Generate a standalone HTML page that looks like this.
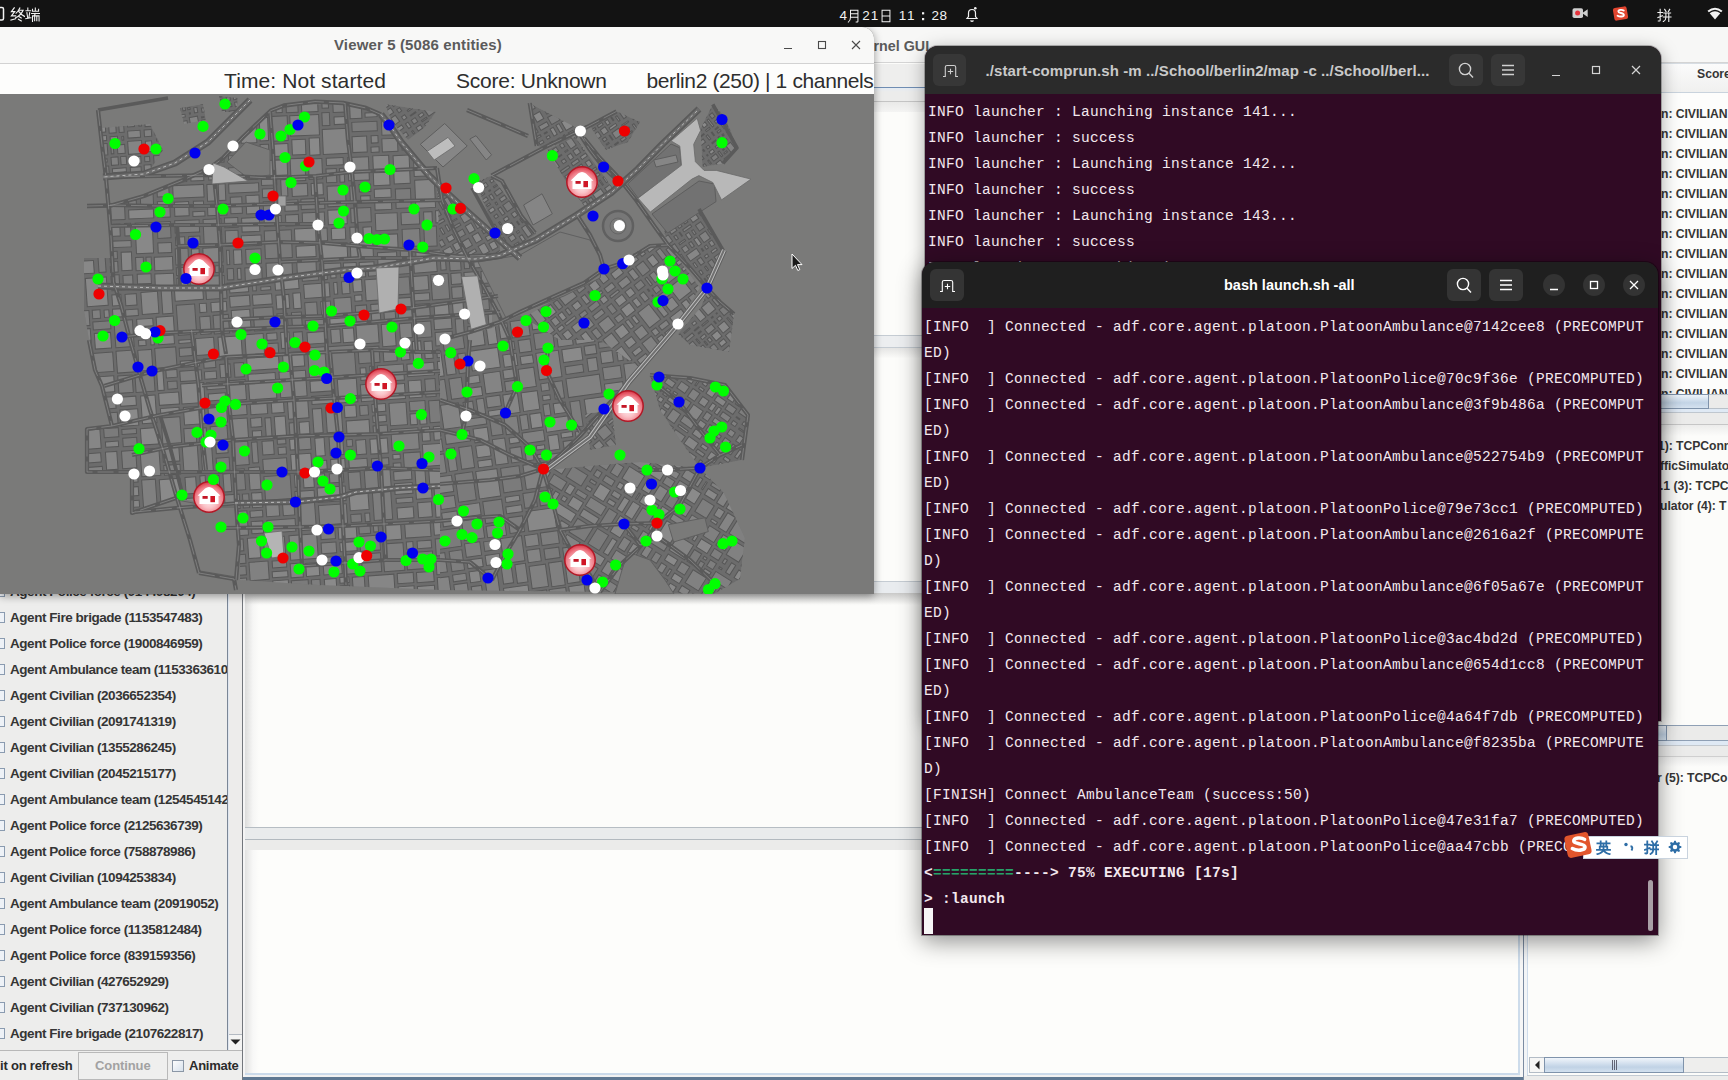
<!DOCTYPE html>
<html><head><meta charset="utf-8"><title>screen</title>
<style>
*{box-sizing:border-box;margin:0;padding:0}
html,body{width:1728px;height:1080px;overflow:hidden;background:#fbfbfa;font-family:"Liberation Sans", sans-serif;}
.abs{position:absolute}
.t{position:absolute;white-space:pre;line-height:1}
#topbar{left:0;top:0;width:1728px;height:27px;background:#131313}
/* kernel gui (background window) */
#kgui{left:0;top:27px;width:1728px;height:1053px;background:#fcfcfa}
/* viewer */
#viewer{left:0;top:27px;width:874px;height:567px;background:#7a7a79;box-shadow:0 2px 9px rgba(0,0,0,.4);border-radius:0 12px 0 0;overflow:hidden}
#vtitle{left:0;top:0;width:874px;height:37px;background:#f8f8f7;border-bottom:1px solid #d2d2d2}
#vstatus{left:0;top:37px;width:874px;height:30px;background:#fdfdfc}
#map{left:0;top:67px;width:874px;height:500px;overflow:hidden;background:#7a7a79}
.term{background:#300a24;overflow:hidden}
.mono{font-family:"Liberation Mono", monospace;font-size:14.5px;letter-spacing:0.3px;color:#f3e8ee;white-space:pre;position:absolute;line-height:26px;height:26px}
.lrow{position:absolute;left:10px;font-weight:700;font-size:13.5px;letter-spacing:-0.45px;color:#353535;white-space:pre;line-height:16px}
.cb{position:absolute;left:-1px;width:6px;height:11px;border:1px solid #8a9bb0;border-left:none;background:#eef2f7}
.rrow{position:absolute;font-weight:700;font-size:12.2px;letter-spacing:-0.05px;color:#353535;white-space:pre;line-height:16px}
</style></head>
<body>
<div id="kgui" class="abs"><div class="abs" style="left:0px;top:0px;width:1728px;height:36px;background:#f7f7f6;border-bottom:1px solid #d4d4d4"></div><div class="t" style="left:873.5px;top:11.5px;font-size:14.3px;font-weight:700;color:#5b5b5b;letter-spacing:0px;">rnel GUI</div><div class="abs" style="left:1661px;top:36px;width:67px;height:30px;background:linear-gradient(#fbfbfb,#f0f0ef);border-top:1px solid #d7dde3;border-bottom:1px solid #c9d3dd"></div><div class="t" style="left:1697px;top:40.7px;font-size:12.2px;font-weight:700;color:#353535;letter-spacing:0px;">Score</div><div class="abs" style="left:874px;top:37px;width:52px;height:23px;background:#eeeeed"></div><div class="abs" style="left:874px;top:60px;width:52px;height:1px;background:#6f8db3"></div><div class="abs" style="left:874px;top:61px;width:52px;height:13px;background:linear-gradient(#e4ebf3,#ececeb 4px)"></div><div class="abs" style="left:874px;top:74px;width:52px;height:1px;background:#c4c4c4"></div><div class="abs" style="left:874px;top:75px;width:52px;height:10px;background:linear-gradient(#e9e9e8,#f4f4f3)"></div><div class="abs" style="left:874px;top:85px;width:52px;height:490px;background:#fcfcfa"></div><div class="abs" style="left:874px;top:308px;width:52px;height:1px;background:#c5ccd3"></div><div class="abs" style="left:874px;top:309px;width:52px;height:11px;background:#eceef0"></div><div class="abs" style="left:874px;top:320px;width:52px;height:1px;background:#c5ccd3"></div><div class="abs" style="left:874px;top:321px;width:52px;height:10px;background:linear-gradient(#e5e5e4,#fbfbf9)"></div><div class="abs" style="left:874px;top:554px;width:52px;height:1px;background:#c5ccd3"></div><div class="abs" style="left:874px;top:555px;width:52px;height:11px;background:#e9ecef"></div><div class="abs" style="left:0px;top:566px;width:227px;height:457px;background:#ededec"></div><div class="abs" style="left:227px;top:566px;width:1px;height:457px;background:#7a8696"></div><div class="abs" style="left:228px;top:566px;width:1px;height:457px;background:#dfe6f0"></div><div class="abs" style="left:229px;top:566px;width:13px;height:441px;background:#edeceb"></div><div class="abs" style="left:229px;top:1007px;width:13px;height:16px;background:#f4f4f3;border-top:1px solid #b4bac2"></div><svg class="abs" style="left:229px;top:1007px" width="13" height="16"><path d="M1.5 5.5 h10 l-5 5z" fill="#222"/></svg><div class="abs" style="left:242px;top:566px;width:1px;height:487px;background:#72767c"></div><div class="abs" style="left:243px;top:566px;width:2px;height:487px;background:#f4f4f4"></div><div class="abs" style="left:0;top:566px;width:227px;height:457px;overflow:hidden"><div class="lrow" style="top:-8.7px">Agent Police force (914498204)</div><div class="cb" style="top:-7px"></div><div class="lrow" style="top:17.3px">Agent Fire brigade (1153547483)</div><div class="cb" style="top:19px"></div><div class="lrow" style="top:43.3px">Agent Police force (1900846959)</div><div class="cb" style="top:45px"></div><div class="lrow" style="top:69.3px">Agent Ambulance team (1153363610)</div><div class="cb" style="top:71px"></div><div class="lrow" style="top:95.3px">Agent Civilian (2036652354)</div><div class="cb" style="top:97px"></div><div class="lrow" style="top:121.3px">Agent Civilian (2091741319)</div><div class="cb" style="top:123px"></div><div class="lrow" style="top:147.3px">Agent Civilian (1355286245)</div><div class="cb" style="top:149px"></div><div class="lrow" style="top:173.3px">Agent Civilian (2045215177)</div><div class="cb" style="top:175px"></div><div class="lrow" style="top:199.3px">Agent Ambulance team (1254545142)</div><div class="cb" style="top:201px"></div><div class="lrow" style="top:225.3px">Agent Police force (2125636739)</div><div class="cb" style="top:227px"></div><div class="lrow" style="top:251.3px">Agent Police force (758878986)</div><div class="cb" style="top:253px"></div><div class="lrow" style="top:277.3px">Agent Civilian (1094253834)</div><div class="cb" style="top:279px"></div><div class="lrow" style="top:303.3px">Agent Ambulance team (20919052)</div><div class="cb" style="top:305px"></div><div class="lrow" style="top:329.3px">Agent Police force (1135812484)</div><div class="cb" style="top:331px"></div><div class="lrow" style="top:355.3px">Agent Police force (839159356)</div><div class="cb" style="top:357px"></div><div class="lrow" style="top:381.3px">Agent Civilian (427652929)</div><div class="cb" style="top:383px"></div><div class="lrow" style="top:407.3px">Agent Civilian (737130962)</div><div class="cb" style="top:409px"></div><div class="lrow" style="top:433.3px">Agent Fire brigade (2107622817)</div><div class="cb" style="top:435px"></div></div><div class="abs" style="left:0px;top:1023px;width:242px;height:30px;background:#eeeeed;border-top:1px solid #b8b8b8"></div><div class="t" style="left:0px;top:1031.5px;font-size:13px;font-weight:700;color:#2b2b2b;letter-spacing:-0.2px;">it on refresh</div><div class="abs" style="left:78px;top:1025px;width:90px;height:28px;background:#efefee;border:1px solid #b9b9b9"></div><div class="t" style="left:95px;top:1031.5px;font-size:13px;font-weight:700;color:#a2a2a2;letter-spacing:-0.1px;">Continue</div><div class="abs" style="left:172px;top:1033px;width:12px;height:12px;background:linear-gradient(135deg,#fdfdfd,#d7e1ec);border:1px solid #8b97a6"></div><div class="t" style="left:189px;top:1031.5px;font-size:13px;font-weight:700;color:#2b2b2b;letter-spacing:-0.25px;">Animate</div><div class="abs" style="left:245px;top:566px;width:1273px;height:234px;background:linear-gradient(90deg,#dcdcdb 0,#f6f6f5 8px,#fcfcfa 14px)"></div><div class="abs" style="left:245px;top:566px;width:1273px;height:12px;background:linear-gradient(#c9c9c8,rgba(240,240,240,0))"></div><div class="abs" style="left:245px;top:800px;width:1273px;height:1px;background:#b6bdc3"></div><div class="abs" style="left:245px;top:801px;width:1273px;height:11px;background:#e9ebec"></div><div class="abs" style="left:245px;top:812px;width:1273px;height:1px;background:#b2b9bf"></div><div class="abs" style="left:245px;top:813px;width:1273px;height:10px;background:#ebebea"></div><div class="abs" style="left:245px;top:823px;width:1273px;height:223px;background:linear-gradient(90deg,#e2e2e1 0,#f8f8f7 8px,#fdfdfb 14px)"></div><div class="abs" style="left:245px;top:1046px;width:1275px;height:2px;background:#cbdaea"></div><div class="abs" style="left:245px;top:1048px;width:1279px;height:2px;background:#f1f1f1"></div><div class="abs" style="left:243px;top:1050px;width:1281px;height:3px;background:#5f7892"></div><div class="abs" style="left:1518px;top:566px;width:2px;height:482px;background:#cddceb"></div><div class="abs" style="left:1520px;top:566px;width:3px;height:484px;background:#f6f6f6"></div><div class="abs" style="left:1523px;top:566px;width:1px;height:487px;background:#7b8ba1"></div><div class="abs" style="left:1524px;top:566px;width:3px;height:487px;background:#f2f4f6"></div><div class="abs" style="left:1527px;top:566px;width:1px;height:482px;background:#cfdceb"></div><div class="abs" style="left:1661px;top:66px;width:67px;height:301px;overflow:hidden;background:#fdfdfc"><div class="rrow" style="left:0px;top:13.4px">n: CIVILIAN</div><div class="rrow" style="left:0px;top:33.4px">n: CIVILIAN</div><div class="rrow" style="left:0px;top:53.4px">n: CIVILIAN</div><div class="rrow" style="left:0px;top:73.4px">n: CIVILIAN</div><div class="rrow" style="left:0px;top:93.4px">n: CIVILIAN</div><div class="rrow" style="left:0px;top:113.4px">n: CIVILIAN</div><div class="rrow" style="left:0px;top:133.4px">n: CIVILIAN</div><div class="rrow" style="left:0px;top:153.4px">n: CIVILIAN</div><div class="rrow" style="left:0px;top:173.4px">n: CIVILIAN</div><div class="rrow" style="left:0px;top:193.4px">n: CIVILIAN</div><div class="rrow" style="left:0px;top:213.4px">n: CIVILIAN</div><div class="rrow" style="left:0px;top:233.4px">n: CIVILIAN</div><div class="rrow" style="left:0px;top:253.4px">n: CIVILIAN</div><div class="rrow" style="left:0px;top:273.4px">n: CIVILIAN</div><div class="rrow" style="left:0px;top:293.4px">n: CIVILIAN</div></div><div class="abs" style="left:1661px;top:367px;width:67px;height:15px;background:#ebebea;border-top:1px solid #b9c1c9;border-bottom:1px solid #b9c1c9"></div><div class="abs" style="left:1661px;top:367px;width:48px;height:15px;background:linear-gradient(#eef4fa,#c3d4e6 60%,#d5e2ef);border:1px solid #7f93ab;border-left:none"></div><div class="abs" style="left:1661px;top:382px;width:67px;height:3px;background:#dfe9f4"></div><div class="abs" style="left:1661px;top:385px;width:67px;height:1px;background:#bfc7cf"></div><div class="abs" style="left:1661px;top:386px;width:67px;height:11px;background:#ebebea"></div><div class="abs" style="left:1661px;top:397px;width:67px;height:1px;background:#c6c6c6"></div><div class="abs" style="left:1661px;top:398px;width:67px;height:11px;background:linear-gradient(#ececeb,#fcfcfa)"></div><div class="rrow" style="left:1658px;top:411.2px">1): TCPConn</div><div class="rrow" style="left:1660px;top:431.2px">fficSimulato</div><div class="rrow" style="left:1660px;top:451.2px">.1 (3): TCPC</div><div class="rrow" style="left:1660px;top:471.2px">ulator (4): T</div><div class="abs" style="left:1657px;top:698px;width:71px;height:16px;background:#ebebea;border-top:1px solid #8fa0b5;border-bottom:1px solid #8fa0b5"></div><div class="abs" style="left:1657px;top:698px;width:10px;height:16px;background:linear-gradient(#eef4fa,#c3d4e6 60%,#d5e2ef);border:1px solid #7f93ab;border-left:none"></div><div class="abs" style="left:1657px;top:714px;width:71px;height:4px;background:#dfe9f4"></div><div class="abs" style="left:1657px;top:718px;width:71px;height:1px;background:#c3c9cf"></div><div class="abs" style="left:1657px;top:719px;width:71px;height:10px;background:#ebebea"></div><div class="abs" style="left:1657px;top:729px;width:71px;height:1px;background:#cfcfcf"></div><div class="abs" style="left:1657px;top:730px;width:71px;height:10px;background:linear-gradient(#ececeb,#fcfcfa)"></div><div class="rrow" style="left:1657px;top:743.2px">r (5): TCPCo</div><div class="abs" style="left:1529px;top:1030px;width:199px;height:16px;background:#eeeeed;border:1px solid #b3bcc6;border-right:none"></div><div class="abs" style="left:1530px;top:1031px;width:14px;height:14px;background:#f6f6f5"></div><svg class="abs" style="left:1530px;top:1031px" width="14" height="14"><path d="M9.5 2.5 v9 l-4.5 -4.5z" fill="#222"/></svg><div class="abs" style="left:1544px;top:1030px;width:140px;height:16px;background:linear-gradient(#f0f5fb,#c0d2e5 65%,#d3e1ef);border:1px solid #7f93ab"></div><svg class="abs" style="left:1608px;top:1033px" width="12" height="10"><path d="M4.5 0v10M6.5 0v10M8.5 0v10" stroke="#445" stroke-width="0.8"/></svg><div class="abs" style="left:1527px;top:1048px;width:201px;height:1px;background:#c3cbd3"></div><div class="abs" style="left:1524px;top:1049px;width:204px;height:4px;background:#ececeb"></div></div><div id="viewer" class="abs"><div id="vtitle" class="abs"><div class="t" style="left:334px;top:9.8px;font-size:15px;font-weight:700;color:#5b5b5b;letter-spacing:0.13px;">Viewer 5 (5086 entities)</div><svg class="abs" style="left:770px;top:0" width="104" height="36" fill="none" stroke="#4a4a4a" stroke-width="1.1">
<path d="M14 21.5h8"/>
<rect x="48.5" y="14.5" width="7" height="7"/>
<path d="M82 14l8 8M90 14l-8 8"/></svg></div><div id="vstatus" class="abs"><div class="t" style="left:224px;top:5.6px;font-size:21px;font-weight:400;color:#2e2e2e;letter-spacing:0.1px;">Time: Not started</div><div class="t" style="left:456px;top:5.6px;font-size:21px;font-weight:400;color:#2e2e2e;letter-spacing:-0.24px;">Score: Unknown</div><div class="t" style="left:646.5px;top:5.6px;font-size:21px;font-weight:400;color:#2e2e2e;letter-spacing:-0.37px;">berlin2 (250) | 1 channels</div></div><div id="map" class="abs"><svg class="abs" style="left:0;top:0" width="874" height="500" viewBox="0 94 874 500"><defs><radialGradient id="hg" cx=".5" cy=".62" r=".6"><stop offset="0" stop-color="#ffeef0"/><stop offset=".4" stop-color="#fac2c7"/><stop offset=".75" stop-color="#f0808b"/><stop offset="1" stop-color="#dc3c4c"/></radialGradient><pattern id="bt" width="46" height="40" patternUnits="userSpaceOnUse" patternTransform="rotate(-3)"><rect width="46" height="40" fill="#747474"/><rect x="2" y="2" width="18" height="10" fill="#8b8b8b" stroke="#5d5d5d" stroke-width="1"/><rect x="23" y="3" width="9" height="15" fill="#868686" stroke="#5d5d5d" stroke-width="1"/><rect x="34" y="2" width="10" height="8" fill="#8e8e8e" stroke="#5d5d5d" stroke-width="1"/><rect x="3" y="15" width="8" height="9" fill="#828282" stroke="#5d5d5d" stroke-width="1"/><rect x="13" y="15" width="8" height="12" fill="#8a8a8a" stroke="#5d5d5d" stroke-width="1"/><rect x="34" y="12" width="10" height="10" fill="#858585" stroke="#5d5d5d" stroke-width="1"/><rect x="2" y="27" width="14" height="11" fill="#8c8c8c" stroke="#5d5d5d" stroke-width="1"/><rect x="18" y="30" width="12" height="8" fill="#848484" stroke="#5d5d5d" stroke-width="1"/><rect x="24" y="20" width="8" height="8" fill="#8d8d8d" stroke="#5d5d5d" stroke-width="1"/><rect x="33" y="25" width="11" height="13" fill="#898989" stroke="#5d5d5d" stroke-width="1"/></pattern></defs><rect x="0" y="94" width="874" height="500" fill="#7a7a79"/><clipPath id="z1"><polygon points="108,207 144,197 182,182 210,169 223,159 243,140 264,118 284,106 345,103 381,115 404,147 430,176 470,214 500,240 500,255 434,258 345,270 284,278 220,288 113,284"/></clipPath><g clip-path="url(#z1)"><polygon points="108,207 144,197 182,182 210,169 223,159 243,140 264,118 284,106 345,103 381,115 404,147 430,176 470,214 500,240 500,255 434,258 345,270 284,278 220,288 113,284" fill="#6c6c6c"/><g transform="rotate(-2.5 304.2 195.3)"><rect x="224.4" y="112.6" width="15.9" height="27.5" fill="#7e7e7e" stroke="#575757" stroke-width="1"/><rect x="243.6" y="112.1" width="15.6" height="28.5" fill="#888888" stroke="#575757" stroke-width="1"/><rect x="83.0" y="183.1" width="24.3" height="14.8" fill="#838383" stroke="#575757" stroke-width="1"/><rect x="99.9" y="201.4" width="6.8" height="10.1" fill="#818181" stroke="#575757" stroke-width="1"/><rect x="110.4" y="183.3" width="13.9" height="28.3" fill="#7e7e7e" stroke="#575757" stroke-width="1"/><rect x="128.4" y="193.0" width="7.8" height="4.8" fill="#7b7b7b" stroke="#575757" stroke-width="1"/><rect x="140.4" y="179.2" width="12.9" height="19.2" fill="#7b7b7b" stroke="#575757" stroke-width="1"/><rect x="128.1" y="202.3" width="24.8" height="9.0" fill="#888888" stroke="#575757" stroke-width="1"/><rect x="157.4" y="179.8" width="11.9" height="10.8" fill="#808080" stroke="#575757" stroke-width="1"/><rect x="157.2" y="195.2" width="12.3" height="16.0" fill="#818181" stroke="#575757" stroke-width="1"/><rect x="108.0" y="215.9" width="10.7" height="12.0" fill="#838383" stroke="#575757" stroke-width="1"/><rect x="123.4" y="215.6" width="6.0" height="12.6" fill="#848484" stroke="#575757" stroke-width="1"/><rect x="107.9" y="232.8" width="21.3" height="6.5" fill="#818181" stroke="#575757" stroke-width="1"/><rect x="104.6" y="243.1" width="10.3" height="7.4" fill="#7b7b7b" stroke="#575757" stroke-width="1"/><rect x="104.5" y="253.0" width="10.5" height="10.9" fill="#808080" stroke="#575757" stroke-width="1"/><rect x="118.8" y="244.3" width="10.3" height="18.4" fill="#888888" stroke="#575757" stroke-width="1"/><rect x="104.7" y="266.6" width="11.1" height="20.6" fill="#7e7e7e" stroke="#575757" stroke-width="1"/><rect x="119.6" y="267.5" width="9.7" height="9.2" fill="#808080" stroke="#575757" stroke-width="1"/><rect x="134.1" y="215.9" width="17.1" height="30.4" fill="#888888" stroke="#575757" stroke-width="1"/><rect x="156.1" y="215.7" width="13.2" height="16.3" fill="#7b7b7b" stroke="#575757" stroke-width="1"/><rect x="155.9" y="236.6" width="13.5" height="10.0" fill="#838383" stroke="#575757" stroke-width="1"/><rect x="133.0" y="250.1" width="7.7" height="13.2" fill="#808080" stroke="#575757" stroke-width="1"/><rect x="143.4" y="250.2" width="5.2" height="13.1" fill="#7b7b7b" stroke="#575757" stroke-width="1"/><rect x="133.9" y="266.9" width="13.8" height="9.8" fill="#838383" stroke="#575757" stroke-width="1"/><rect x="151.7" y="250.6" width="18.2" height="13.5" fill="#868686" stroke="#575757" stroke-width="1"/><rect x="151.5" y="267.4" width="18.7" height="19.8" fill="#888888" stroke="#575757" stroke-width="1"/><rect x="173.7" y="169.3" width="13.7" height="7.2" fill="#8a8a8a" stroke="#575757" stroke-width="1"/><rect x="191.7" y="168.3" width="12.9" height="7.8" fill="#8a8a8a" stroke="#575757" stroke-width="1"/><rect x="209.0" y="144.0" width="16.6" height="14.5" fill="#818181" stroke="#575757" stroke-width="1"/><rect x="209.5" y="163.0" width="15.7" height="12.9" fill="#848484" stroke="#575757" stroke-width="1"/><rect x="173.2" y="180.0" width="30.9" height="12.6" fill="#848484" stroke="#575757" stroke-width="1"/><rect x="174.1" y="196.5" width="14.3" height="14.2" fill="#848484" stroke="#575757" stroke-width="1"/><rect x="193.2" y="196.5" width="10.1" height="6.5" fill="#818181" stroke="#575757" stroke-width="1"/><rect x="192.2" y="206.8" width="12.0" height="4.9" fill="#848484" stroke="#575757" stroke-width="1"/><rect x="207.4" y="180.3" width="7.6" height="16.8" fill="#818181" stroke="#575757" stroke-width="1"/><rect x="218.7" y="180.4" width="7.0" height="16.5" fill="#838383" stroke="#575757" stroke-width="1"/><rect x="207.1" y="200.3" width="19.1" height="11.3" fill="#818181" stroke="#575757" stroke-width="1"/><rect x="229.5" y="143.8" width="10.4" height="4.6" fill="#8a8a8a" stroke="#575757" stroke-width="1"/><rect x="230.2" y="152.6" width="9.0" height="7.4" fill="#818181" stroke="#575757" stroke-width="1"/><rect x="244.1" y="144.4" width="14.1" height="15.7" fill="#808080" stroke="#575757" stroke-width="1"/><rect x="229.8" y="164.6" width="13.5" height="12.5" fill="#7e7e7e" stroke="#575757" stroke-width="1"/><rect x="247.4" y="164.6" width="11.2" height="12.6" fill="#818181" stroke="#575757" stroke-width="1"/><rect x="229.2" y="180.8" width="29.9" height="9.1" fill="#818181" stroke="#575757" stroke-width="1"/><rect x="230.2" y="194.0" width="11.5" height="16.6" fill="#7e7e7e" stroke="#575757" stroke-width="1"/><rect x="245.9" y="193.1" width="13.1" height="18.3" fill="#868686" stroke="#575757" stroke-width="1"/><rect x="173.7" y="215.1" width="24.4" height="12.3" fill="#7e7e7e" stroke="#575757" stroke-width="1"/><rect x="173.7" y="231.5" width="9.2" height="8.4" fill="#868686" stroke="#575757" stroke-width="1"/><rect x="186.9" y="231.4" width="11.3" height="8.6" fill="#7e7e7e" stroke="#575757" stroke-width="1"/><rect x="202.1" y="215.1" width="17.9" height="24.8" fill="#7e7e7e" stroke="#575757" stroke-width="1"/><rect x="173.0" y="243.2" width="12.8" height="16.1" fill="#7e7e7e" stroke="#575757" stroke-width="1"/><rect x="189.2" y="244.0" width="7.6" height="14.7" fill="#888888" stroke="#575757" stroke-width="1"/><rect x="173.2" y="262.2" width="12.0" height="7.6" fill="#848484" stroke="#575757" stroke-width="1"/><rect x="188.6" y="262.6" width="8.4" height="6.6" fill="#7b7b7b" stroke="#575757" stroke-width="1"/><rect x="173.3" y="272.9" width="10.5" height="14.2" fill="#888888" stroke="#575757" stroke-width="1"/><rect x="186.9" y="272.7" width="10.5" height="14.5" fill="#8a8a8a" stroke="#575757" stroke-width="1"/><rect x="200.6" y="243.7" width="19.7" height="14.6" fill="#848484" stroke="#575757" stroke-width="1"/><rect x="201.4" y="262.5" width="6.3" height="5.4" fill="#848484" stroke="#575757" stroke-width="1"/><rect x="212.1" y="261.9" width="8.1" height="6.7" fill="#7e7e7e" stroke="#575757" stroke-width="1"/><rect x="200.4" y="272.0" width="20.2" height="15.2" fill="#818181" stroke="#575757" stroke-width="1"/><rect x="223.5" y="214.5" width="13.3" height="9.8" fill="#838383" stroke="#575757" stroke-width="1"/><rect x="223.7" y="227.4" width="12.8" height="15.6" fill="#818181" stroke="#575757" stroke-width="1"/><rect x="240.6" y="215.5" width="17.7" height="13.9" fill="#848484" stroke="#575757" stroke-width="1"/><rect x="239.6" y="233.1" width="19.7" height="10.3" fill="#888888" stroke="#575757" stroke-width="1"/><rect x="224.2" y="246.9" width="2.6" height="14.4" fill="#868686" stroke="#575757" stroke-width="1"/><rect x="231.1" y="246.9" width="8.0" height="14.4" fill="#868686" stroke="#575757" stroke-width="1"/><rect x="243.3" y="246.8" width="15.3" height="14.5" fill="#7e7e7e" stroke="#575757" stroke-width="1"/><rect x="224.0" y="265.4" width="6.2" height="11.2" fill="#7b7b7b" stroke="#575757" stroke-width="1"/><rect x="234.2" y="265.5" width="3.4" height="10.9" fill="#868686" stroke="#575757" stroke-width="1"/><rect x="223.4" y="279.8" width="14.9" height="7.5" fill="#8a8a8a" stroke="#575757" stroke-width="1"/><rect x="241.7" y="265.4" width="16.9" height="21.2" fill="#7b7b7b" stroke="#575757" stroke-width="1"/><rect x="263.2" y="96.4" width="11.7" height="14.9" fill="#868686" stroke="#575757" stroke-width="1"/><rect x="279.8" y="96.2" width="6.1" height="15.4" fill="#838383" stroke="#575757" stroke-width="1"/><rect x="290.0" y="94.6" width="11.8" height="17.4" fill="#7b7b7b" stroke="#575757" stroke-width="1"/><rect x="305.4" y="94.5" width="16.3" height="17.7" fill="#848484" stroke="#575757" stroke-width="1"/><rect x="262.6" y="115.9" width="8.4" height="23.2" fill="#8a8a8a" stroke="#575757" stroke-width="1"/><rect x="274.2" y="115.1" width="16.4" height="24.8" fill="#7b7b7b" stroke="#575757" stroke-width="1"/><rect x="262.3" y="142.7" width="8.5" height="12.7" fill="#7e7e7e" stroke="#575757" stroke-width="1"/><rect x="274.2" y="142.9" width="15.9" height="12.3" fill="#8a8a8a" stroke="#575757" stroke-width="1"/><rect x="293.2" y="115.2" width="28.9" height="20.4" fill="#848484" stroke="#575757" stroke-width="1"/><rect x="294.2" y="139.3" width="13.5" height="15.3" fill="#888888" stroke="#575757" stroke-width="1"/><rect x="311.6" y="138.4" width="10.3" height="17.1" fill="#8a8a8a" stroke="#575757" stroke-width="1"/><rect x="325.9" y="103.5" width="6.4" height="5.6" fill="#808080" stroke="#575757" stroke-width="1"/><rect x="325.4" y="113.6" width="7.5" height="13.0" fill="#7b7b7b" stroke="#575757" stroke-width="1"/><rect x="336.8" y="102.9" width="13.6" height="11.0" fill="#7e7e7e" stroke="#575757" stroke-width="1"/><rect x="337.4" y="118.4" width="12.3" height="7.6" fill="#8a8a8a" stroke="#575757" stroke-width="1"/><rect x="325.1" y="130.3" width="25.5" height="25.0" fill="#848484" stroke="#575757" stroke-width="1"/><rect x="353.5" y="102.2" width="11.7" height="18.6" fill="#838383" stroke="#575757" stroke-width="1"/><rect x="367.8" y="102.3" width="13.5" height="9.9" fill="#848484" stroke="#575757" stroke-width="1"/><rect x="368.5" y="115.7" width="12.0" height="4.2" fill="#868686" stroke="#575757" stroke-width="1"/><rect x="354.9" y="124.5" width="25.2" height="9.4" fill="#7b7b7b" stroke="#575757" stroke-width="1"/><rect x="354.6" y="138.8" width="14.5" height="16.0" fill="#848484" stroke="#575757" stroke-width="1"/><rect x="373.6" y="138.7" width="6.8" height="7.4" fill="#838383" stroke="#575757" stroke-width="1"/><rect x="373.0" y="150.1" width="8.0" height="5.3" fill="#838383" stroke="#575757" stroke-width="1"/><rect x="384.5" y="117.5" width="22.2" height="21.3" fill="#838383" stroke="#575757" stroke-width="1"/><rect x="384.2" y="142.3" width="15.6" height="13.1" fill="#848484" stroke="#575757" stroke-width="1"/><rect x="404.0" y="143.3" width="16.8" height="11.1" fill="#8a8a8a" stroke="#575757" stroke-width="1"/><rect x="262.6" y="158.9" width="26.0" height="15.3" fill="#888888" stroke="#575757" stroke-width="1"/><rect x="262.1" y="177.6" width="15.2" height="6.1" fill="#808080" stroke="#575757" stroke-width="1"/><rect x="262.6" y="187.2" width="14.2" height="8.6" fill="#838383" stroke="#575757" stroke-width="1"/><rect x="281.4" y="178.8" width="6.5" height="16.4" fill="#818181" stroke="#575757" stroke-width="1"/><rect x="291.7" y="158.2" width="14.7" height="22.3" fill="#818181" stroke="#575757" stroke-width="1"/><rect x="309.8" y="159.2" width="13.6" height="20.4" fill="#818181" stroke="#575757" stroke-width="1"/><rect x="292.3" y="183.5" width="15.5" height="12.5" fill="#838383" stroke="#575757" stroke-width="1"/><rect x="311.6" y="183.9" width="11.8" height="11.7" fill="#888888" stroke="#575757" stroke-width="1"/><rect x="262.9" y="200.0" width="17.4" height="9.7" fill="#7e7e7e" stroke="#575757" stroke-width="1"/><rect x="263.1" y="214.4" width="17.1" height="10.3" fill="#868686" stroke="#575757" stroke-width="1"/><rect x="284.4" y="199.5" width="13.2" height="10.9" fill="#838383" stroke="#575757" stroke-width="1"/><rect x="284.6" y="214.1" width="12.9" height="11.2" fill="#808080" stroke="#575757" stroke-width="1"/><rect x="300.7" y="199.0" width="23.6" height="10.5" fill="#7b7b7b" stroke="#575757" stroke-width="1"/><rect x="301.4" y="212.9" width="22.1" height="12.2" fill="#818181" stroke="#575757" stroke-width="1"/><rect x="327.8" y="159.2" width="16.9" height="7.2" fill="#848484" stroke="#575757" stroke-width="1"/><rect x="327.1" y="170.0" width="10.3" height="13.8" fill="#7e7e7e" stroke="#575757" stroke-width="1"/><rect x="340.6" y="170.1" width="4.6" height="13.7" fill="#838383" stroke="#575757" stroke-width="1"/><rect x="349.3" y="159.5" width="20.7" height="23.3" fill="#838383" stroke="#575757" stroke-width="1"/><rect x="327.4" y="187.2" width="18.3" height="20.7" fill="#808080" stroke="#575757" stroke-width="1"/><rect x="327.1" y="211.2" width="18.9" height="14.5" fill="#8a8a8a" stroke="#575757" stroke-width="1"/><rect x="350.1" y="187.9" width="5.3" height="17.5" fill="#808080" stroke="#575757" stroke-width="1"/><rect x="359.5" y="186.9" width="11.5" height="7.6" fill="#808080" stroke="#575757" stroke-width="1"/><rect x="360.5" y="198.5" width="9.5" height="6.9" fill="#868686" stroke="#575757" stroke-width="1"/><rect x="350.0" y="210.3" width="20.1" height="14.4" fill="#7b7b7b" stroke="#575757" stroke-width="1"/><rect x="262.7" y="229.2" width="27.0" height="27.8" fill="#7b7b7b" stroke="#575757" stroke-width="1"/><rect x="293.0" y="228.5" width="21.1" height="14.0" fill="#8a8a8a" stroke="#575757" stroke-width="1"/><rect x="293.8" y="245.8" width="19.7" height="11.2" fill="#8a8a8a" stroke="#575757" stroke-width="1"/><rect x="263.1" y="261.5" width="26.0" height="23.5" fill="#808080" stroke="#575757" stroke-width="1"/><rect x="293.9" y="261.5" width="19.2" height="23.5" fill="#838383" stroke="#575757" stroke-width="1"/><rect x="317.1" y="228.9" width="8.5" height="12.7" fill="#808080" stroke="#575757" stroke-width="1"/><rect x="329.8" y="229.6" width="14.0" height="11.3" fill="#8a8a8a" stroke="#575757" stroke-width="1"/><rect x="316.8" y="244.7" width="28.1" height="17.2" fill="#8a8a8a" stroke="#575757" stroke-width="1"/><rect x="348.4" y="229.3" width="8.6" height="11.3" fill="#838383" stroke="#575757" stroke-width="1"/><rect x="361.5" y="229.7" width="8.5" height="10.5" fill="#888888" stroke="#575757" stroke-width="1"/><rect x="348.1" y="244.5" width="22.6" height="16.8" fill="#848484" stroke="#575757" stroke-width="1"/><rect x="316.7" y="264.5" width="21.0" height="21.7" fill="#818181" stroke="#575757" stroke-width="1"/><rect x="340.3" y="264.7" width="12.9" height="21.3" fill="#868686" stroke="#575757" stroke-width="1"/><rect x="356.2" y="264.8" width="14.7" height="21.0" fill="#868686" stroke="#575757" stroke-width="1"/><rect x="374.4" y="158.9" width="15.9" height="13.5" fill="#888888" stroke="#575757" stroke-width="1"/><rect x="374.2" y="175.9" width="16.2" height="12.8" fill="#8a8a8a" stroke="#575757" stroke-width="1"/><rect x="394.7" y="159.6" width="16.0" height="28.3" fill="#888888" stroke="#575757" stroke-width="1"/><rect x="374.4" y="192.3" width="16.7" height="8.6" fill="#888888" stroke="#575757" stroke-width="1"/><rect x="374.4" y="204.6" width="16.7" height="8.6" fill="#868686" stroke="#575757" stroke-width="1"/><rect x="395.5" y="193.0" width="15.1" height="19.4" fill="#7b7b7b" stroke="#575757" stroke-width="1"/><rect x="415.0" y="158.7" width="18.5" height="22.6" fill="#888888" stroke="#575757" stroke-width="1"/><rect x="415.2" y="185.0" width="19.7" height="28.1" fill="#868686" stroke="#575757" stroke-width="1"/><rect x="438.2" y="184.4" width="15.6" height="9.2" fill="#838383" stroke="#575757" stroke-width="1"/><rect x="438.4" y="196.6" width="15.2" height="5.1" fill="#808080" stroke="#575757" stroke-width="1"/><rect x="439.0" y="205.5" width="13.9" height="7.3" fill="#868686" stroke="#575757" stroke-width="1"/><rect x="374.3" y="216.7" width="22.0" height="17.1" fill="#838383" stroke="#575757" stroke-width="1"/><rect x="374.8" y="237.9" width="20.9" height="13.3" fill="#888888" stroke="#575757" stroke-width="1"/><rect x="400.1" y="217.1" width="18.2" height="11.9" fill="#808080" stroke="#575757" stroke-width="1"/><rect x="400.5" y="233.6" width="17.5" height="17.4" fill="#7e7e7e" stroke="#575757" stroke-width="1"/><rect x="422.7" y="217.2" width="8.4" height="10.5" fill="#838383" stroke="#575757" stroke-width="1"/><rect x="434.7" y="216.4" width="19.0" height="12.2" fill="#8a8a8a" stroke="#575757" stroke-width="1"/><rect x="422.3" y="231.7" width="12.5" height="20.0" fill="#7b7b7b" stroke="#575757" stroke-width="1"/><rect x="439.0" y="232.4" width="13.7" height="18.6" fill="#868686" stroke="#575757" stroke-width="1"/><rect x="456.6" y="200.1" width="24.0" height="27.8" fill="#848484" stroke="#575757" stroke-width="1"/><rect x="457.3" y="231.5" width="22.6" height="19.8" fill="#848484" stroke="#575757" stroke-width="1"/><rect x="483.2" y="229.3" width="17.6" height="22.9" fill="#7b7b7b" stroke="#575757" stroke-width="1"/><rect x="374.9" y="255.8" width="19.1" height="26.1" fill="#848484" stroke="#575757" stroke-width="1"/><rect x="397.7" y="254.8" width="11.7" height="11.0" fill="#7e7e7e" stroke="#575757" stroke-width="1"/><rect x="413.2" y="255.9" width="28.1" height="17.3" fill="#888888" stroke="#575757" stroke-width="1"/><rect x="445.1" y="254.7" width="11.4" height="21.3" fill="#818181" stroke="#575757" stroke-width="1"/><rect x="459.5" y="255.3" width="18.8" height="20.2" fill="#7e7e7e" stroke="#575757" stroke-width="1"/><rect x="482.3" y="255.7" width="9.6" height="20.9" fill="#7e7e7e" stroke="#575757" stroke-width="1"/><rect x="496.7" y="256.0" width="7.9" height="20.3" fill="#888888" stroke="#575757" stroke-width="1"/></g></g><clipPath id="z2"><polygon points="100,128 150,124 163,150 150,170 104,176"/></clipPath><g clip-path="url(#z2)"><polygon points="100,128 150,124 163,150 150,170 104,176" fill="#6c6c6c"/><g transform="rotate(-4 133.4 149.6)"><rect x="98.4" y="123.4" width="8.6" height="6.7" fill="#8a8a8a" stroke="#575757" stroke-width="1"/><rect x="97.9" y="133.6" width="9.5" height="5.1" fill="#888888" stroke="#575757" stroke-width="1"/><rect x="96.3" y="141.6" width="11.3" height="11.5" fill="#7e7e7e" stroke="#575757" stroke-width="1"/><rect x="110.4" y="122.8" width="7.1" height="8.8" fill="#7e7e7e" stroke="#575757" stroke-width="1"/><rect x="120.5" y="122.9" width="4.9" height="8.7" fill="#7b7b7b" stroke="#575757" stroke-width="1"/><rect x="111.0" y="135.1" width="7.4" height="4.7" fill="#838383" stroke="#575757" stroke-width="1"/><rect x="122.8" y="135.6" width="1.7" height="3.8" fill="#838383" stroke="#575757" stroke-width="1"/><rect x="111.1" y="144.0" width="2.5" height="8.3" fill="#7b7b7b" stroke="#575757" stroke-width="1"/><rect x="117.6" y="143.8" width="7.4" height="8.8" fill="#838383" stroke="#575757" stroke-width="1"/><rect x="98.7" y="157.0" width="7.8" height="3.2" fill="#838383" stroke="#575757" stroke-width="1"/><rect x="98.3" y="164.9" width="2.4" height="6.1" fill="#868686" stroke="#575757" stroke-width="1"/><rect x="104.3" y="164.2" width="3.3" height="7.5" fill="#7b7b7b" stroke="#575757" stroke-width="1"/><rect x="110.5" y="155.8" width="7.0" height="8.0" fill="#818181" stroke="#575757" stroke-width="1"/><rect x="120.1" y="155.7" width="5.6" height="8.2" fill="#808080" stroke="#575757" stroke-width="1"/><rect x="111.1" y="167.2" width="13.8" height="4.0" fill="#888888" stroke="#575757" stroke-width="1"/><rect x="93.9" y="174.6" width="7.1" height="8.0" fill="#868686" stroke="#575757" stroke-width="1"/><rect x="104.8" y="175.7" width="4.7" height="6.5" fill="#888888" stroke="#575757" stroke-width="1"/><rect x="114.5" y="175.7" width="10.0" height="3.5" fill="#848484" stroke="#575757" stroke-width="1"/><rect x="129.2" y="114.5" width="6.9" height="12.2" fill="#848484" stroke="#575757" stroke-width="1"/><rect x="140.6" y="121.2" width="2.5" height="5.4" fill="#818181" stroke="#575757" stroke-width="1"/><rect x="146.7" y="120.4" width="6.5" height="7.1" fill="#848484" stroke="#575757" stroke-width="1"/><rect x="128.9" y="130.8" width="12.5" height="7.0" fill="#848484" stroke="#575757" stroke-width="1"/><rect x="128.2" y="141.0" width="13.9" height="13.0" fill="#848484" stroke="#575757" stroke-width="1"/><rect x="145.4" y="130.8" width="7.2" height="6.8" fill="#808080" stroke="#575757" stroke-width="1"/><rect x="145.9" y="142.1" width="6.2" height="10.7" fill="#888888" stroke="#575757" stroke-width="1"/><rect x="156.0" y="127.9" width="4.5" height="8.7" fill="#808080" stroke="#575757" stroke-width="1"/><rect x="157.1" y="140.7" width="4.4" height="1.9" fill="#7b7b7b" stroke="#575757" stroke-width="1"/><rect x="155.8" y="146.5" width="7.1" height="3.5" fill="#808080" stroke="#575757" stroke-width="1"/><rect x="156.1" y="152.8" width="6.4" height="1.0" fill="#868686" stroke="#575757" stroke-width="1"/><rect x="128.6" y="156.9" width="11.6" height="6.7" fill="#8a8a8a" stroke="#575757" stroke-width="1"/><rect x="129.0" y="167.3" width="10.8" height="8.5" fill="#7e7e7e" stroke="#575757" stroke-width="1"/><rect x="144.0" y="157.5" width="5.0" height="5.0" fill="#7e7e7e" stroke="#575757" stroke-width="1"/><rect x="143.0" y="165.8" width="6.9" height="10.7" fill="#848484" stroke="#575757" stroke-width="1"/><rect x="153.1" y="157.2" width="13.3" height="10.5" fill="#7b7b7b" stroke="#575757" stroke-width="1"/></g></g><clipPath id="z3"><polygon points="180,108 203,104 206,120 184,124"/></clipPath><g clip-path="url(#z3)"><polygon points="180,108 203,104 206,120 184,124" fill="#6c6c6c"/><g transform="rotate(-10 193.2 114.0)"><rect x="178.3" y="105.3" width="2.8" height="3.8" fill="#848484" stroke="#575757" stroke-width="1"/><rect x="183.7" y="105.2" width="2.6" height="4.0" fill="#7e7e7e" stroke="#575757" stroke-width="1"/><rect x="179.4" y="112.8" width="5.6" height="2.7" fill="#848484" stroke="#575757" stroke-width="1"/><rect x="181.4" y="119.5" width="4.5" height="3.9" fill="#848484" stroke="#575757" stroke-width="1"/><rect x="188.7" y="106.9" width="2.4" height="2.0" fill="#7b7b7b" stroke="#575757" stroke-width="1"/><rect x="189.6" y="112.3" width="1.0" height="1.2" fill="#848484" stroke="#575757" stroke-width="1"/><rect x="194.7" y="108.0" width="3.3" height="5.2" fill="#818181" stroke="#575757" stroke-width="1"/><rect x="202.5" y="103.9" width="2.1" height="2.0" fill="#7b7b7b" stroke="#575757" stroke-width="1"/><rect x="202.2" y="109.7" width="2.7" height="4.2" fill="#7b7b7b" stroke="#575757" stroke-width="1"/><rect x="188.7" y="116.9" width="8.3" height="8.4" fill="#848484" stroke="#575757" stroke-width="1"/><rect x="200.8" y="118.3" width="2.5" height="1.0" fill="#818181" stroke="#575757" stroke-width="1"/><rect x="200.4" y="121.6" width="3.2" height="2.1" fill="#848484" stroke="#575757" stroke-width="1"/></g></g><clipPath id="z4"><polygon points="219,96 238,98 236,112 222,112"/></clipPath><g clip-path="url(#z4)"><polygon points="219,96 238,98 236,112 222,112" fill="#6c6c6c"/><g transform="rotate(-10 228.8 104.5)"><rect x="221.3" y="94.9" width="2.1" height="1.0" fill="#7b7b7b" stroke="#575757" stroke-width="1"/><rect x="221.4" y="98.2" width="2.4" height="2.6" fill="#868686" stroke="#575757" stroke-width="1"/><rect x="221.9" y="105.3" width="1.3" height="1.0" fill="#7e7e7e" stroke="#575757" stroke-width="1"/><rect x="218.5" y="109.4" width="5.9" height="3.2" fill="#7e7e7e" stroke="#575757" stroke-width="1"/><rect x="227.4" y="96.8" width="3.8" height="3.7" fill="#7b7b7b" stroke="#575757" stroke-width="1"/><rect x="234.5" y="96.7" width="2.6" height="4.0" fill="#848484" stroke="#575757" stroke-width="1"/><rect x="227.8" y="104.2" width="3.8" height="2.8" fill="#7b7b7b" stroke="#575757" stroke-width="1"/><rect x="234.9" y="103.4" width="2.4" height="4.3" fill="#888888" stroke="#575757" stroke-width="1"/><rect x="228.0" y="111.2" width="5.3" height="2.0" fill="#818181" stroke="#575757" stroke-width="1"/><rect x="238.0" y="111.4" width="1.0" height="3.5" fill="#868686" stroke="#575757" stroke-width="1"/></g></g><clipPath id="z5"><polygon points="84,258 113,258 113,284 220,288 284,278 345,270 434,258 475,259 492,262 492,328 440,342 440,590 318,585 240,580 240,545 236,505 215,505 176,498 132,513 132,472 87,472 87,429 112,426 89,340 84,311"/></clipPath><g clip-path="url(#z5)"><polygon points="84,258 113,258 113,284 220,288 284,278 345,270 434,258 475,259 492,262 492,328 440,342 440,590 318,585 240,580 240,545 236,505 215,505 176,498 132,513 132,472 87,472 87,429 112,426 89,340 84,311" fill="#6c6c6c"/><g transform="rotate(-4 243.2 394.2)"><rect x="85.1" y="237.2" width="17.7" height="8.3" fill="#818181" stroke="#575757" stroke-width="1"/><rect x="85.2" y="250.3" width="17.9" height="12.7" fill="#888888" stroke="#575757" stroke-width="1"/><rect x="107.9" y="245.7" width="7.1" height="17.1" fill="#7b7b7b" stroke="#575757" stroke-width="1"/><rect x="119.9" y="245.5" width="3.7" height="7.8" fill="#868686" stroke="#575757" stroke-width="1"/><rect x="119.5" y="257.8" width="16.1" height="5.6" fill="#8a8a8a" stroke="#575757" stroke-width="1"/><rect x="81.3" y="267.2" width="8.3" height="13.5" fill="#888888" stroke="#575757" stroke-width="1"/><rect x="71.8" y="284.0" width="18.1" height="12.9" fill="#7e7e7e" stroke="#575757" stroke-width="1"/><rect x="93.8" y="267.7" width="21.0" height="28.3" fill="#888888" stroke="#575757" stroke-width="1"/><rect x="82.2" y="299.9" width="12.9" height="15.0" fill="#818181" stroke="#575757" stroke-width="1"/><rect x="82.6" y="318.1" width="12.6" height="21.5" fill="#848484" stroke="#575757" stroke-width="1"/><rect x="98.4" y="300.0" width="7.8" height="8.5" fill="#808080" stroke="#575757" stroke-width="1"/><rect x="110.2" y="300.6" width="4.8" height="7.4" fill="#848484" stroke="#575757" stroke-width="1"/><rect x="98.2" y="311.6" width="17.6" height="8.1" fill="#7b7b7b" stroke="#575757" stroke-width="1"/><rect x="98.9" y="323.3" width="16.2" height="15.6" fill="#8a8a8a" stroke="#575757" stroke-width="1"/><rect x="119.5" y="267.6" width="24.1" height="14.2" fill="#8a8a8a" stroke="#575757" stroke-width="1"/><rect x="119.1" y="286.0" width="9.0" height="11.1" fill="#888888" stroke="#575757" stroke-width="1"/><rect x="118.7" y="300.4" width="9.8" height="8.1" fill="#888888" stroke="#575757" stroke-width="1"/><rect x="132.3" y="286.4" width="11.2" height="11.4" fill="#838383" stroke="#575757" stroke-width="1"/><rect x="131.7" y="301.9" width="12.5" height="6.5" fill="#838383" stroke="#575757" stroke-width="1"/><rect x="147.6" y="267.0" width="10.5" height="14.5" fill="#888888" stroke="#575757" stroke-width="1"/><rect x="162.2" y="267.6" width="15.7" height="13.3" fill="#7e7e7e" stroke="#575757" stroke-width="1"/><rect x="148.2" y="285.6" width="16.6" height="22.0" fill="#868686" stroke="#575757" stroke-width="1"/><rect x="168.6" y="284.7" width="10.2" height="23.9" fill="#838383" stroke="#575757" stroke-width="1"/><rect x="119.4" y="312.2" width="18.4" height="26.8" fill="#7b7b7b" stroke="#575757" stroke-width="1"/><rect x="142.1" y="312.1" width="16.1" height="7.5" fill="#8a8a8a" stroke="#575757" stroke-width="1"/><rect x="141.3" y="323.1" width="9.6" height="6.2" fill="#8a8a8a" stroke="#575757" stroke-width="1"/><rect x="142.4" y="333.2" width="7.4" height="5.5" fill="#848484" stroke="#575757" stroke-width="1"/><rect x="154.7" y="324.2" width="3.3" height="14.5" fill="#8a8a8a" stroke="#575757" stroke-width="1"/><rect x="161.7" y="311.3" width="17.2" height="15.5" fill="#888888" stroke="#575757" stroke-width="1"/><rect x="162.4" y="330.2" width="15.8" height="8.8" fill="#888888" stroke="#575757" stroke-width="1"/><rect x="95.5" y="343.0" width="20.4" height="19.4" fill="#808080" stroke="#575757" stroke-width="1"/><rect x="96.1" y="366.8" width="19.2" height="15.9" fill="#888888" stroke="#575757" stroke-width="1"/><rect x="99.9" y="387.6" width="15.5" height="11.8" fill="#838383" stroke="#575757" stroke-width="1"/><rect x="98.9" y="403.4" width="17.4" height="12.1" fill="#7e7e7e" stroke="#575757" stroke-width="1"/><rect x="72.3" y="419.1" width="25.5" height="19.1" fill="#868686" stroke="#575757" stroke-width="1"/><rect x="101.6" y="418.8" width="14.6" height="9.2" fill="#7b7b7b" stroke="#575757" stroke-width="1"/><rect x="102.4" y="432.2" width="12.9" height="5.4" fill="#868686" stroke="#575757" stroke-width="1"/><rect x="119.3" y="342.5" width="18.5" height="21.9" fill="#808080" stroke="#575757" stroke-width="1"/><rect x="141.1" y="343.1" width="13.7" height="20.8" fill="#818181" stroke="#575757" stroke-width="1"/><rect x="119.3" y="367.3" width="14.4" height="17.4" fill="#7e7e7e" stroke="#575757" stroke-width="1"/><rect x="136.5" y="367.2" width="19.0" height="17.8" fill="#7b7b7b" stroke="#575757" stroke-width="1"/><rect x="158.1" y="342.3" width="21.0" height="19.9" fill="#7b7b7b" stroke="#575757" stroke-width="1"/><rect x="158.4" y="364.9" width="6.3" height="19.8" fill="#8a8a8a" stroke="#575757" stroke-width="1"/><rect x="167.7" y="364.9" width="11.0" height="7.7" fill="#818181" stroke="#575757" stroke-width="1"/><rect x="168.5" y="376.4" width="9.5" height="7.6" fill="#7b7b7b" stroke="#575757" stroke-width="1"/><rect x="120.2" y="388.6" width="15.7" height="9.2" fill="#888888" stroke="#575757" stroke-width="1"/><rect x="119.1" y="401.3" width="17.8" height="16.5" fill="#8a8a8a" stroke="#575757" stroke-width="1"/><rect x="140.7" y="388.8" width="14.5" height="27.8" fill="#8a8a8a" stroke="#575757" stroke-width="1"/><rect x="119.6" y="420.9" width="14.5" height="5.0" fill="#7b7b7b" stroke="#575757" stroke-width="1"/><rect x="119.9" y="429.7" width="14.0" height="8.5" fill="#7b7b7b" stroke="#575757" stroke-width="1"/><rect x="138.2" y="421.5" width="17.0" height="16.4" fill="#8a8a8a" stroke="#575757" stroke-width="1"/><rect x="158.9" y="387.5" width="20.0" height="12.0" fill="#888888" stroke="#575757" stroke-width="1"/><rect x="159.6" y="402.8" width="18.6" height="5.5" fill="#888888" stroke="#575757" stroke-width="1"/><rect x="159.6" y="412.2" width="18.8" height="26.0" fill="#808080" stroke="#575757" stroke-width="1"/><rect x="181.9" y="274.8" width="28.3" height="21.9" fill="#8a8a8a" stroke="#575757" stroke-width="1"/><rect x="213.2" y="274.3" width="20.6" height="22.9" fill="#7b7b7b" stroke="#575757" stroke-width="1"/><rect x="182.6" y="300.8" width="18.4" height="30.2" fill="#7b7b7b" stroke="#575757" stroke-width="1"/><rect x="205.8" y="300.8" width="6.8" height="9.0" fill="#8a8a8a" stroke="#575757" stroke-width="1"/><rect x="217.3" y="300.6" width="15.5" height="9.4" fill="#888888" stroke="#575757" stroke-width="1"/><rect x="205.1" y="314.0" width="10.4" height="17.7" fill="#818181" stroke="#575757" stroke-width="1"/><rect x="218.6" y="313.5" width="15.3" height="18.7" fill="#7b7b7b" stroke="#575757" stroke-width="1"/><rect x="237.0" y="275.0" width="18.8" height="17.4" fill="#888888" stroke="#575757" stroke-width="1"/><rect x="236.4" y="295.8" width="19.9" height="10.7" fill="#838383" stroke="#575757" stroke-width="1"/><rect x="260.0" y="275.4" width="3.6" height="16.5" fill="#7e7e7e" stroke="#575757" stroke-width="1"/><rect x="268.1" y="275.3" width="9.9" height="8.9" fill="#868686" stroke="#575757" stroke-width="1"/><rect x="268.2" y="288.6" width="9.8" height="3.4" fill="#838383" stroke="#575757" stroke-width="1"/><rect x="259.3" y="295.9" width="19.2" height="10.4" fill="#848484" stroke="#575757" stroke-width="1"/><rect x="237.1" y="309.9" width="18.5" height="21.4" fill="#8a8a8a" stroke="#575757" stroke-width="1"/><rect x="259.0" y="309.2" width="19.8" height="22.8" fill="#7b7b7b" stroke="#575757" stroke-width="1"/><rect x="282.7" y="275.6" width="23.6" height="17.1" fill="#8a8a8a" stroke="#575757" stroke-width="1"/><rect x="282.7" y="297.8" width="12.9" height="13.9" fill="#8a8a8a" stroke="#575757" stroke-width="1"/><rect x="299.7" y="297.0" width="7.6" height="15.5" fill="#8a8a8a" stroke="#575757" stroke-width="1"/><rect x="282.4" y="316.5" width="10.3" height="14.7" fill="#7e7e7e" stroke="#575757" stroke-width="1"/><rect x="297.0" y="316.2" width="9.9" height="15.2" fill="#7b7b7b" stroke="#575757" stroke-width="1"/><rect x="182.7" y="335.9" width="12.2" height="3.2" fill="#868686" stroke="#575757" stroke-width="1"/><rect x="182.5" y="343.9" width="12.7" height="8.2" fill="#7e7e7e" stroke="#575757" stroke-width="1"/><rect x="199.5" y="335.4" width="18.1" height="16.9" fill="#868686" stroke="#575757" stroke-width="1"/><rect x="182.7" y="356.9" width="18.9" height="6.2" fill="#888888" stroke="#575757" stroke-width="1"/><rect x="181.5" y="366.8" width="21.5" height="10.5" fill="#808080" stroke="#575757" stroke-width="1"/><rect x="206.0" y="356.2" width="11.8" height="9.4" fill="#7e7e7e" stroke="#575757" stroke-width="1"/><rect x="206.0" y="369.2" width="11.9" height="7.5" fill="#838383" stroke="#575757" stroke-width="1"/><rect x="222.0" y="335.7" width="23.1" height="22.7" fill="#8a8a8a" stroke="#575757" stroke-width="1"/><rect x="221.8" y="363.0" width="10.4" height="13.3" fill="#818181" stroke="#575757" stroke-width="1"/><rect x="236.1" y="362.5" width="9.5" height="14.3" fill="#7b7b7b" stroke="#575757" stroke-width="1"/><rect x="181.5" y="379.7" width="23.1" height="20.0" fill="#888888" stroke="#575757" stroke-width="1"/><rect x="182.6" y="403.3" width="20.9" height="17.6" fill="#888888" stroke="#575757" stroke-width="1"/><rect x="181.5" y="424.6" width="12.0" height="14.3" fill="#7e7e7e" stroke="#575757" stroke-width="1"/><rect x="196.6" y="425.0" width="7.4" height="13.4" fill="#7e7e7e" stroke="#575757" stroke-width="1"/><rect x="207.5" y="380.1" width="18.8" height="7.1" fill="#818181" stroke="#575757" stroke-width="1"/><rect x="208.4" y="391.5" width="16.9" height="7.1" fill="#8a8a8a" stroke="#575757" stroke-width="1"/><rect x="229.2" y="379.8" width="16.9" height="20.0" fill="#838383" stroke="#575757" stroke-width="1"/><rect x="207.1" y="402.4" width="18.6" height="18.4" fill="#888888" stroke="#575757" stroke-width="1"/><rect x="208.0" y="424.3" width="16.8" height="13.7" fill="#7e7e7e" stroke="#575757" stroke-width="1"/><rect x="228.6" y="402.7" width="17.1" height="12.0" fill="#808080" stroke="#575757" stroke-width="1"/><rect x="228.9" y="418.2" width="16.6" height="20.2" fill="#848484" stroke="#575757" stroke-width="1"/><rect x="248.9" y="335.0" width="18.4" height="20.4" fill="#838383" stroke="#575757" stroke-width="1"/><rect x="270.8" y="335.3" width="10.1" height="6.9" fill="#848484" stroke="#575757" stroke-width="1"/><rect x="270.3" y="345.5" width="11.2" height="10.2" fill="#7e7e7e" stroke="#575757" stroke-width="1"/><rect x="249.1" y="358.7" width="32.0" height="12.3" fill="#8a8a8a" stroke="#575757" stroke-width="1"/><rect x="284.8" y="335.3" width="8.4" height="16.1" fill="#888888" stroke="#575757" stroke-width="1"/><rect x="297.6" y="335.9" width="8.8" height="14.9" fill="#7e7e7e" stroke="#575757" stroke-width="1"/><rect x="285.2" y="355.8" width="21.3" height="14.6" fill="#888888" stroke="#575757" stroke-width="1"/><rect x="249.3" y="374.7" width="27.2" height="25.6" fill="#868686" stroke="#575757" stroke-width="1"/><rect x="280.4" y="374.7" width="26.5" height="25.6" fill="#838383" stroke="#575757" stroke-width="1"/><rect x="249.5" y="404.5" width="16.8" height="10.8" fill="#848484" stroke="#575757" stroke-width="1"/><rect x="270.6" y="404.3" width="12.3" height="11.0" fill="#888888" stroke="#575757" stroke-width="1"/><rect x="248.8" y="418.8" width="10.9" height="9.0" fill="#838383" stroke="#575757" stroke-width="1"/><rect x="249.7" y="431.6" width="9.1" height="6.3" fill="#868686" stroke="#575757" stroke-width="1"/><rect x="263.2" y="419.5" width="5.8" height="18.6" fill="#808080" stroke="#575757" stroke-width="1"/><rect x="272.6" y="418.9" width="10.9" height="19.9" fill="#8a8a8a" stroke="#575757" stroke-width="1"/><rect x="286.8" y="404.1" width="20.4" height="18.2" fill="#848484" stroke="#575757" stroke-width="1"/><rect x="287.0" y="426.1" width="6.0" height="12.1" fill="#7e7e7e" stroke="#575757" stroke-width="1"/><rect x="297.0" y="426.1" width="10.0" height="12.1" fill="#8a8a8a" stroke="#575757" stroke-width="1"/><rect x="79.4" y="442.7" width="17.5" height="9.3" fill="#848484" stroke="#575757" stroke-width="1"/><rect x="78.8" y="456.4" width="18.8" height="14.9" fill="#838383" stroke="#575757" stroke-width="1"/><rect x="101.7" y="442.4" width="11.4" height="17.9" fill="#868686" stroke="#575757" stroke-width="1"/><rect x="117.8" y="442.6" width="14.2" height="17.5" fill="#7e7e7e" stroke="#575757" stroke-width="1"/><rect x="101.3" y="464.4" width="11.2" height="10.4" fill="#848484" stroke="#575757" stroke-width="1"/><rect x="116.1" y="464.3" width="4.7" height="10.7" fill="#868686" stroke="#575757" stroke-width="1"/><rect x="124.6" y="464.7" width="7.6" height="9.8" fill="#868686" stroke="#575757" stroke-width="1"/><rect x="117.8" y="479.1" width="14.2" height="8.8" fill="#888888" stroke="#575757" stroke-width="1"/><rect x="117.7" y="492.8" width="14.3" height="6.6" fill="#868686" stroke="#575757" stroke-width="1"/><rect x="136.4" y="442.2" width="18.9" height="27.2" fill="#848484" stroke="#575757" stroke-width="1"/><rect x="158.8" y="441.8" width="16.5" height="14.6" fill="#838383" stroke="#575757" stroke-width="1"/><rect x="159.0" y="459.7" width="16.2" height="9.8" fill="#818181" stroke="#575757" stroke-width="1"/><rect x="135.9" y="472.8" width="13.7" height="27.4" fill="#808080" stroke="#575757" stroke-width="1"/><rect x="153.5" y="473.7" width="21.0" height="25.6" fill="#8a8a8a" stroke="#575757" stroke-width="1"/><rect x="115.1" y="503.1" width="14.5" height="9.6" fill="#888888" stroke="#575757" stroke-width="1"/><rect x="132.5" y="503.3" width="14.4" height="15.4" fill="#838383" stroke="#575757" stroke-width="1"/><rect x="178.7" y="442.0" width="15.1" height="27.1" fill="#838383" stroke="#575757" stroke-width="1"/><rect x="197.3" y="441.8" width="10.8" height="27.4" fill="#818181" stroke="#575757" stroke-width="1"/><rect x="212.3" y="442.8" width="11.8" height="8.8" fill="#838383" stroke="#575757" stroke-width="1"/><rect x="211.7" y="456.2" width="13.0" height="12.6" fill="#7b7b7b" stroke="#575757" stroke-width="1"/><rect x="179.3" y="473.2" width="10.7" height="16.6" fill="#868686" stroke="#575757" stroke-width="1"/><rect x="194.2" y="472.7" width="5.3" height="9.7" fill="#848484" stroke="#575757" stroke-width="1"/><rect x="193.8" y="485.7" width="6.0" height="4.9" fill="#848484" stroke="#575757" stroke-width="1"/><rect x="203.8" y="473.3" width="9.5" height="16.3" fill="#7e7e7e" stroke="#575757" stroke-width="1"/><rect x="217.4" y="472.5" width="7.6" height="18.0" fill="#848484" stroke="#575757" stroke-width="1"/><rect x="228.0" y="441.4" width="16.4" height="23.4" fill="#7e7e7e" stroke="#575757" stroke-width="1"/><rect x="248.1" y="442.7" width="5.6" height="20.9" fill="#7e7e7e" stroke="#575757" stroke-width="1"/><rect x="229.2" y="468.6" width="9.8" height="21.0" fill="#7b7b7b" stroke="#575757" stroke-width="1"/><rect x="243.4" y="467.9" width="11.0" height="22.3" fill="#848484" stroke="#575757" stroke-width="1"/><rect x="179.1" y="494.3" width="13.5" height="15.7" fill="#868686" stroke="#575757" stroke-width="1"/><rect x="196.3" y="493.7" width="18.1" height="16.9" fill="#868686" stroke="#575757" stroke-width="1"/><rect x="217.4" y="493.6" width="14.8" height="14.4" fill="#848484" stroke="#575757" stroke-width="1"/><rect x="235.4" y="493.8" width="6.3" height="14.0" fill="#7b7b7b" stroke="#575757" stroke-width="1"/><rect x="244.6" y="493.4" width="10.3" height="14.8" fill="#868686" stroke="#575757" stroke-width="1"/><rect x="217.2" y="510.8" width="21.5" height="24.3" fill="#808080" stroke="#575757" stroke-width="1"/><rect x="241.8" y="511.3" width="12.5" height="6.5" fill="#818181" stroke="#575757" stroke-width="1"/><rect x="242.2" y="521.9" width="11.7" height="12.2" fill="#838383" stroke="#575757" stroke-width="1"/><rect x="258.6" y="442.6" width="11.4" height="13.7" fill="#818181" stroke="#575757" stroke-width="1"/><rect x="273.9" y="441.7" width="8.5" height="4.9" fill="#7e7e7e" stroke="#575757" stroke-width="1"/><rect x="274.2" y="449.9" width="8.0" height="7.0" fill="#818181" stroke="#575757" stroke-width="1"/><rect x="258.1" y="460.6" width="23.9" height="13.5" fill="#808080" stroke="#575757" stroke-width="1"/><rect x="286.3" y="442.5" width="4.9" height="10.7" fill="#8a8a8a" stroke="#575757" stroke-width="1"/><rect x="295.2" y="441.9" width="12.0" height="11.9" fill="#808080" stroke="#575757" stroke-width="1"/><rect x="286.3" y="457.8" width="20.2" height="15.8" fill="#8a8a8a" stroke="#575757" stroke-width="1"/><rect x="258.1" y="477.9" width="26.2" height="23.8" fill="#7b7b7b" stroke="#575757" stroke-width="1"/><rect x="288.6" y="478.4" width="5.1" height="12.4" fill="#8a8a8a" stroke="#575757" stroke-width="1"/><rect x="297.3" y="477.2" width="10.4" height="14.7" fill="#8a8a8a" stroke="#575757" stroke-width="1"/><rect x="288.0" y="494.9" width="19.2" height="7.0" fill="#838383" stroke="#575757" stroke-width="1"/><rect x="258.1" y="505.6" width="13.0" height="12.5" fill="#838383" stroke="#575757" stroke-width="1"/><rect x="274.8" y="505.4" width="11.4" height="12.8" fill="#838383" stroke="#575757" stroke-width="1"/><rect x="258.0" y="521.8" width="28.2" height="12.7" fill="#818181" stroke="#575757" stroke-width="1"/><rect x="290.0" y="505.7" width="16.8" height="28.6" fill="#808080" stroke="#575757" stroke-width="1"/><rect x="218.9" y="538.7" width="14.0" height="11.8" fill="#7e7e7e" stroke="#575757" stroke-width="1"/><rect x="217.7" y="554.1" width="16.5" height="8.9" fill="#7b7b7b" stroke="#575757" stroke-width="1"/><rect x="222.3" y="565.8" width="11.6" height="8.8" fill="#7b7b7b" stroke="#575757" stroke-width="1"/><rect x="222.3" y="577.8" width="11.4" height="13.7" fill="#818181" stroke="#575757" stroke-width="1"/><rect x="237.3" y="538.3" width="12.0" height="20.3" fill="#8a8a8a" stroke="#575757" stroke-width="1"/><rect x="253.3" y="538.3" width="11.3" height="20.2" fill="#818181" stroke="#575757" stroke-width="1"/><rect x="269.0" y="538.7" width="5.3" height="19.3" fill="#868686" stroke="#575757" stroke-width="1"/><rect x="237.2" y="562.4" width="19.1" height="18.3" fill="#818181" stroke="#575757" stroke-width="1"/><rect x="237.9" y="585.1" width="17.8" height="13.4" fill="#818181" stroke="#575757" stroke-width="1"/><rect x="260.4" y="562.7" width="14.2" height="7.0" fill="#818181" stroke="#575757" stroke-width="1"/><rect x="259.7" y="573.4" width="15.5" height="6.0" fill="#868686" stroke="#575757" stroke-width="1"/><rect x="259.7" y="582.5" width="15.5" height="9.2" fill="#8a8a8a" stroke="#575757" stroke-width="1"/><rect x="279.0" y="538.6" width="27.7" height="24.5" fill="#848484" stroke="#575757" stroke-width="1"/><rect x="278.2" y="566.7" width="12.3" height="14.1" fill="#838383" stroke="#575757" stroke-width="1"/><rect x="293.7" y="567.3" width="13.2" height="13.1" fill="#8a8a8a" stroke="#575757" stroke-width="1"/><rect x="278.2" y="583.7" width="16.8" height="16.0" fill="#7b7b7b" stroke="#575757" stroke-width="1"/><rect x="298.3" y="584.2" width="8.6" height="14.8" fill="#7e7e7e" stroke="#575757" stroke-width="1"/><rect x="310.1" y="279.6" width="16.5" height="6.0" fill="#7e7e7e" stroke="#575757" stroke-width="1"/><rect x="329.1" y="278.3" width="6.1" height="7.3" fill="#838383" stroke="#575757" stroke-width="1"/><rect x="338.8" y="279.4" width="5.2" height="5.1" fill="#8a8a8a" stroke="#575757" stroke-width="1"/><rect x="348.6" y="278.1" width="9.8" height="6.5" fill="#838383" stroke="#575757" stroke-width="1"/><rect x="361.9" y="267.1" width="11.7" height="18.4" fill="#8a8a8a" stroke="#575757" stroke-width="1"/><rect x="376.5" y="267.4" width="17.4" height="17.8" fill="#818181" stroke="#575757" stroke-width="1"/><rect x="396.9" y="265.9" width="22.7" height="19.5" fill="#7b7b7b" stroke="#575757" stroke-width="1"/><rect x="422.4" y="270.8" width="22.9" height="14.6" fill="#838383" stroke="#575757" stroke-width="1"/><rect x="449.2" y="267.7" width="5.2" height="16.6" fill="#7e7e7e" stroke="#575757" stroke-width="1"/><rect x="458.2" y="266.4" width="11.1" height="19.2" fill="#7e7e7e" stroke="#575757" stroke-width="1"/><rect x="472.7" y="268.2" width="5.2" height="16.3" fill="#7b7b7b" stroke="#575757" stroke-width="1"/><rect x="482.5" y="268.3" width="11.0" height="16.2" fill="#848484" stroke="#575757" stroke-width="1"/><rect x="497.3" y="265.2" width="13.5" height="20.3" fill="#868686" stroke="#575757" stroke-width="1"/><rect x="311.1" y="289.0" width="25.5" height="14.1" fill="#868686" stroke="#575757" stroke-width="1"/><rect x="310.9" y="307.3" width="12.0" height="14.5" fill="#7e7e7e" stroke="#575757" stroke-width="1"/><rect x="326.9" y="307.3" width="9.7" height="14.4" fill="#868686" stroke="#575757" stroke-width="1"/><rect x="341.1" y="289.2" width="3.4" height="11.6" fill="#868686" stroke="#575757" stroke-width="1"/><rect x="349.1" y="289.0" width="7.7" height="12.1" fill="#838383" stroke="#575757" stroke-width="1"/><rect x="340.3" y="304.9" width="17.1" height="17.3" fill="#818181" stroke="#575757" stroke-width="1"/><rect x="310.2" y="325.1" width="21.9" height="8.6" fill="#7e7e7e" stroke="#575757" stroke-width="1"/><rect x="311.1" y="337.3" width="20.2" height="11.6" fill="#868686" stroke="#575757" stroke-width="1"/><rect x="334.8" y="325.1" width="22.9" height="8.0" fill="#8a8a8a" stroke="#575757" stroke-width="1"/><rect x="334.9" y="335.9" width="9.3" height="13.6" fill="#838383" stroke="#575757" stroke-width="1"/><rect x="346.8" y="335.7" width="11.0" height="14.1" fill="#8a8a8a" stroke="#575757" stroke-width="1"/><rect x="310.5" y="352.5" width="17.3" height="30.2" fill="#818181" stroke="#575757" stroke-width="1"/><rect x="331.0" y="352.8" width="26.2" height="29.7" fill="#7b7b7b" stroke="#575757" stroke-width="1"/><rect x="310.7" y="386.0" width="23.7" height="11.1" fill="#888888" stroke="#575757" stroke-width="1"/><rect x="311.2" y="401.2" width="22.6" height="8.1" fill="#848484" stroke="#575757" stroke-width="1"/><rect x="338.1" y="386.2" width="19.0" height="23.5" fill="#868686" stroke="#575757" stroke-width="1"/><rect x="360.3" y="288.1" width="8.9" height="11.8" fill="#8a8a8a" stroke="#575757" stroke-width="1"/><rect x="361.2" y="303.4" width="7.1" height="5.9" fill="#888888" stroke="#575757" stroke-width="1"/><rect x="372.4" y="288.6" width="13.5" height="21.1" fill="#888888" stroke="#575757" stroke-width="1"/><rect x="361.1" y="313.7" width="11.3" height="16.5" fill="#7b7b7b" stroke="#575757" stroke-width="1"/><rect x="376.6" y="313.6" width="9.0" height="16.5" fill="#838383" stroke="#575757" stroke-width="1"/><rect x="389.6" y="288.6" width="27.3" height="17.3" fill="#7b7b7b" stroke="#575757" stroke-width="1"/><rect x="389.3" y="309.3" width="11.3" height="21.3" fill="#7e7e7e" stroke="#575757" stroke-width="1"/><rect x="403.7" y="309.3" width="13.4" height="9.0" fill="#868686" stroke="#575757" stroke-width="1"/><rect x="403.6" y="321.3" width="13.6" height="9.4" fill="#818181" stroke="#575757" stroke-width="1"/><rect x="420.4" y="288.6" width="15.3" height="14.2" fill="#848484" stroke="#575757" stroke-width="1"/><rect x="420.0" y="305.9" width="16.0" height="7.3" fill="#838383" stroke="#575757" stroke-width="1"/><rect x="420.8" y="316.7" width="14.5" height="13.4" fill="#7e7e7e" stroke="#575757" stroke-width="1"/><rect x="360.4" y="333.6" width="22.0" height="18.8" fill="#848484" stroke="#575757" stroke-width="1"/><rect x="360.9" y="355.7" width="21.0" height="16.2" fill="#7b7b7b" stroke="#575757" stroke-width="1"/><rect x="385.8" y="334.3" width="13.4" height="22.3" fill="#868686" stroke="#575757" stroke-width="1"/><rect x="385.8" y="360.7" width="13.4" height="10.9" fill="#818181" stroke="#575757" stroke-width="1"/><rect x="403.9" y="334.8" width="12.0" height="14.7" fill="#818181" stroke="#575757" stroke-width="1"/><rect x="420.4" y="334.2" width="15.0" height="16.0" fill="#7b7b7b" stroke="#575757" stroke-width="1"/><rect x="403.7" y="354.5" width="8.3" height="16.8" fill="#888888" stroke="#575757" stroke-width="1"/><rect x="415.6" y="353.4" width="8.3" height="19.1" fill="#8a8a8a" stroke="#575757" stroke-width="1"/><rect x="427.2" y="354.3" width="8.0" height="17.2" fill="#838383" stroke="#575757" stroke-width="1"/><rect x="361.6" y="376.3" width="5.7" height="12.4" fill="#888888" stroke="#575757" stroke-width="1"/><rect x="371.3" y="375.2" width="4.4" height="4.6" fill="#848484" stroke="#575757" stroke-width="1"/><rect x="372.3" y="383.7" width="2.5" height="5.1" fill="#7b7b7b" stroke="#575757" stroke-width="1"/><rect x="360.7" y="393.0" width="14.8" height="16.9" fill="#838383" stroke="#575757" stroke-width="1"/><rect x="378.9" y="375.3" width="26.1" height="16.0" fill="#838383" stroke="#575757" stroke-width="1"/><rect x="379.1" y="394.8" width="25.7" height="15.0" fill="#8a8a8a" stroke="#575757" stroke-width="1"/><rect x="408.6" y="375.7" width="26.8" height="12.6" fill="#868686" stroke="#575757" stroke-width="1"/><rect x="408.7" y="392.4" width="12.8" height="17.2" fill="#8a8a8a" stroke="#575757" stroke-width="1"/><rect x="425.3" y="392.0" width="10.3" height="17.8" fill="#7b7b7b" stroke="#575757" stroke-width="1"/><rect x="438.6" y="288.1" width="17.3" height="25.3" fill="#7b7b7b" stroke="#575757" stroke-width="1"/><rect x="458.7" y="288.3" width="10.3" height="11.0" fill="#818181" stroke="#575757" stroke-width="1"/><rect x="458.5" y="302.0" width="10.7" height="11.3" fill="#7e7e7e" stroke="#575757" stroke-width="1"/><rect x="439.8" y="317.1" width="14.4" height="12.0" fill="#888888" stroke="#575757" stroke-width="1"/><rect x="458.3" y="316.2" width="10.6" height="13.6" fill="#8a8a8a" stroke="#575757" stroke-width="1"/><rect x="438.6" y="332.7" width="17.5" height="10.5" fill="#838383" stroke="#575757" stroke-width="1"/><rect x="438.9" y="346.0" width="17.1" height="13.5" fill="#838383" stroke="#575757" stroke-width="1"/><rect x="459.9" y="334.0" width="8.1" height="24.5" fill="#7e7e7e" stroke="#575757" stroke-width="1"/><rect x="471.9" y="288.2" width="14.1" height="22.4" fill="#848484" stroke="#575757" stroke-width="1"/><rect x="488.9" y="288.3" width="7.7" height="12.1" fill="#808080" stroke="#575757" stroke-width="1"/><rect x="499.8" y="288.5" width="10.7" height="11.8" fill="#8a8a8a" stroke="#575757" stroke-width="1"/><rect x="489.0" y="303.6" width="21.6" height="6.9" fill="#7b7b7b" stroke="#575757" stroke-width="1"/><rect x="472.1" y="313.6" width="9.3" height="14.0" fill="#7b7b7b" stroke="#575757" stroke-width="1"/><rect x="485.3" y="314.4" width="9.5" height="12.5" fill="#7b7b7b" stroke="#575757" stroke-width="1"/><rect x="499.6" y="314.5" width="10.2" height="12.3" fill="#868686" stroke="#575757" stroke-width="1"/><rect x="472.6" y="331.4" width="16.3" height="7.7" fill="#8a8a8a" stroke="#575757" stroke-width="1"/><rect x="471.8" y="342.5" width="17.9" height="17.2" fill="#7e7e7e" stroke="#575757" stroke-width="1"/><rect x="493.1" y="331.4" width="4.9" height="11.8" fill="#888888" stroke="#575757" stroke-width="1"/><rect x="492.3" y="346.7" width="18.5" height="12.9" fill="#848484" stroke="#575757" stroke-width="1"/><rect x="439.4" y="363.0" width="19.7" height="8.3" fill="#808080" stroke="#575757" stroke-width="1"/><rect x="439.2" y="375.2" width="20.2" height="8.8" fill="#8a8a8a" stroke="#575757" stroke-width="1"/><rect x="439.6" y="388.1" width="7.3" height="10.4" fill="#7e7e7e" stroke="#575757" stroke-width="1"/><rect x="439.4" y="402.7" width="20.1" height="6.9" fill="#888888" stroke="#575757" stroke-width="1"/><rect x="311.1" y="413.8" width="9.2" height="24.4" fill="#848484" stroke="#575757" stroke-width="1"/><rect x="324.4" y="413.5" width="15.6" height="25.1" fill="#848484" stroke="#575757" stroke-width="1"/><rect x="311.5" y="443.1" width="9.3" height="18.1" fill="#8a8a8a" stroke="#575757" stroke-width="1"/><rect x="325.8" y="442.9" width="13.7" height="18.4" fill="#818181" stroke="#575757" stroke-width="1"/><rect x="311.1" y="465.9" width="10.7" height="9.1" fill="#848484" stroke="#575757" stroke-width="1"/><rect x="325.8" y="465.5" width="14.2" height="9.9" fill="#888888" stroke="#575757" stroke-width="1"/><rect x="343.1" y="412.9" width="11.7" height="11.8" fill="#888888" stroke="#575757" stroke-width="1"/><rect x="358.4" y="413.9" width="8.4" height="9.7" fill="#7e7e7e" stroke="#575757" stroke-width="1"/><rect x="344.0" y="428.1" width="22.9" height="15.5" fill="#868686" stroke="#575757" stroke-width="1"/><rect x="370.8" y="413.4" width="13.5" height="7.8" fill="#888888" stroke="#575757" stroke-width="1"/><rect x="370.9" y="425.0" width="13.3" height="6.5" fill="#868686" stroke="#575757" stroke-width="1"/><rect x="370.5" y="434.9" width="14.2" height="9.4" fill="#7e7e7e" stroke="#575757" stroke-width="1"/><rect x="343.1" y="447.0" width="5.7" height="6.6" fill="#7e7e7e" stroke="#575757" stroke-width="1"/><rect x="344.1" y="457.1" width="3.8" height="5.4" fill="#868686" stroke="#575757" stroke-width="1"/><rect x="352.3" y="448.0" width="9.7" height="14.5" fill="#838383" stroke="#575757" stroke-width="1"/><rect x="343.9" y="466.8" width="18.3" height="8.4" fill="#838383" stroke="#575757" stroke-width="1"/><rect x="366.4" y="448.0" width="17.4" height="14.9" fill="#8a8a8a" stroke="#575757" stroke-width="1"/><rect x="366.6" y="467.6" width="17.1" height="7.2" fill="#7e7e7e" stroke="#575757" stroke-width="1"/><rect x="311.1" y="479.3" width="7.7" height="9.9" fill="#848484" stroke="#575757" stroke-width="1"/><rect x="323.5" y="479.7" width="14.0" height="9.2" fill="#818181" stroke="#575757" stroke-width="1"/><rect x="310.4" y="492.9" width="28.0" height="14.6" fill="#888888" stroke="#575757" stroke-width="1"/><rect x="310.5" y="510.6" width="27.9" height="19.6" fill="#808080" stroke="#575757" stroke-width="1"/><rect x="342.4" y="479.6" width="11.9" height="17.1" fill="#7e7e7e" stroke="#575757" stroke-width="1"/><rect x="358.6" y="479.1" width="13.1" height="18.0" fill="#7e7e7e" stroke="#575757" stroke-width="1"/><rect x="375.4" y="478.9" width="9.0" height="18.4" fill="#848484" stroke="#575757" stroke-width="1"/><rect x="341.9" y="500.9" width="18.9" height="17.0" fill="#8a8a8a" stroke="#575757" stroke-width="1"/><rect x="342.0" y="521.8" width="10.5" height="8.0" fill="#7b7b7b" stroke="#575757" stroke-width="1"/><rect x="356.2" y="521.5" width="4.8" height="8.6" fill="#818181" stroke="#575757" stroke-width="1"/><rect x="365.2" y="501.5" width="18.4" height="27.8" fill="#7e7e7e" stroke="#575757" stroke-width="1"/><rect x="388.0" y="413.5" width="17.0" height="22.5" fill="#848484" stroke="#575757" stroke-width="1"/><rect x="408.4" y="413.2" width="15.6" height="9.5" fill="#7e7e7e" stroke="#575757" stroke-width="1"/><rect x="408.2" y="425.6" width="6.7" height="10.9" fill="#888888" stroke="#575757" stroke-width="1"/><rect x="417.6" y="425.5" width="6.8" height="11.1" fill="#888888" stroke="#575757" stroke-width="1"/><rect x="427.7" y="413.8" width="10.8" height="21.9" fill="#7b7b7b" stroke="#575757" stroke-width="1"/><rect x="388.0" y="439.8" width="27.1" height="21.2" fill="#818181" stroke="#575757" stroke-width="1"/><rect x="388.2" y="464.9" width="7.3" height="4.7" fill="#8a8a8a" stroke="#575757" stroke-width="1"/><rect x="388.0" y="473.5" width="7.7" height="4.9" fill="#818181" stroke="#575757" stroke-width="1"/><rect x="398.8" y="464.1" width="16.9" height="14.9" fill="#7e7e7e" stroke="#575757" stroke-width="1"/><rect x="418.9" y="439.7" width="7.8" height="14.0" fill="#868686" stroke="#575757" stroke-width="1"/><rect x="430.6" y="439.9" width="8.0" height="13.6" fill="#868686" stroke="#575757" stroke-width="1"/><rect x="418.4" y="457.0" width="20.9" height="21.9" fill="#888888" stroke="#575757" stroke-width="1"/><rect x="387.8" y="482.0" width="17.8" height="8.8" fill="#838383" stroke="#575757" stroke-width="1"/><rect x="387.8" y="494.1" width="17.8" height="10.8" fill="#8a8a8a" stroke="#575757" stroke-width="1"/><rect x="388.4" y="508.9" width="16.6" height="4.8" fill="#818181" stroke="#575757" stroke-width="1"/><rect x="388.6" y="518.4" width="16.3" height="11.0" fill="#888888" stroke="#575757" stroke-width="1"/><rect x="409.2" y="482.2" width="10.0" height="16.0" fill="#838383" stroke="#575757" stroke-width="1"/><rect x="423.0" y="482.1" width="15.9" height="16.1" fill="#888888" stroke="#575757" stroke-width="1"/><rect x="408.7" y="501.4" width="15.7" height="9.6" fill="#868686" stroke="#575757" stroke-width="1"/><rect x="409.6" y="514.7" width="13.8" height="14.9" fill="#848484" stroke="#575757" stroke-width="1"/><rect x="427.0" y="501.4" width="12.4" height="9.4" fill="#838383" stroke="#575757" stroke-width="1"/><rect x="427.0" y="513.3" width="12.5" height="17.2" fill="#8a8a8a" stroke="#575757" stroke-width="1"/><rect x="310.8" y="533.7" width="14.4" height="11.0" fill="#7e7e7e" stroke="#575757" stroke-width="1"/><rect x="310.5" y="548.1" width="14.9" height="10.7" fill="#818181" stroke="#575757" stroke-width="1"/><rect x="328.5" y="533.3" width="18.2" height="12.3" fill="#888888" stroke="#575757" stroke-width="1"/><rect x="329.2" y="549.1" width="16.8" height="9.1" fill="#8a8a8a" stroke="#575757" stroke-width="1"/><rect x="311.1" y="562.6" width="18.4" height="17.5" fill="#838383" stroke="#575757" stroke-width="1"/><rect x="333.1" y="561.7" width="13.7" height="19.3" fill="#818181" stroke="#575757" stroke-width="1"/><rect x="349.3" y="533.1" width="11.3" height="8.7" fill="#7b7b7b" stroke="#575757" stroke-width="1"/><rect x="363.9" y="533.9" width="4.7" height="7.0" fill="#7e7e7e" stroke="#575757" stroke-width="1"/><rect x="349.3" y="544.2" width="20.0" height="15.0" fill="#7e7e7e" stroke="#575757" stroke-width="1"/><rect x="349.7" y="562.0" width="19.3" height="18.7" fill="#7b7b7b" stroke="#575757" stroke-width="1"/><rect x="372.8" y="534.1" width="18.4" height="15.9" fill="#888888" stroke="#575757" stroke-width="1"/><rect x="371.8" y="553.4" width="20.4" height="27.7" fill="#7e7e7e" stroke="#575757" stroke-width="1"/><rect x="395.2" y="533.6" width="25.5" height="15.5" fill="#818181" stroke="#575757" stroke-width="1"/><rect x="395.6" y="553.0" width="6.5" height="7.3" fill="#838383" stroke="#575757" stroke-width="1"/><rect x="406.4" y="552.9" width="14.1" height="7.6" fill="#818181" stroke="#575757" stroke-width="1"/><rect x="394.8" y="563.9" width="26.2" height="17.0" fill="#7b7b7b" stroke="#575757" stroke-width="1"/><rect x="311.2" y="584.6" width="11.8" height="14.5" fill="#8a8a8a" stroke="#575757" stroke-width="1"/><rect x="326.7" y="583.7" width="9.1" height="5.8" fill="#8a8a8a" stroke="#575757" stroke-width="1"/><rect x="326.6" y="592.2" width="9.3" height="7.9" fill="#838383" stroke="#575757" stroke-width="1"/><rect x="339.3" y="584.4" width="11.9" height="17.0" fill="#838383" stroke="#575757" stroke-width="1"/><rect x="355.2" y="584.2" width="25.7" height="16.1" fill="#868686" stroke="#575757" stroke-width="1"/><rect x="384.3" y="583.8" width="16.0" height="10.3" fill="#818181" stroke="#575757" stroke-width="1"/><rect x="384.3" y="597.2" width="15.9" height="14.8" fill="#888888" stroke="#575757" stroke-width="1"/><rect x="403.6" y="584.1" width="17.1" height="10.3" fill="#818181" stroke="#575757" stroke-width="1"/><rect x="403.6" y="598.1" width="17.0" height="13.6" fill="#888888" stroke="#575757" stroke-width="1"/><rect x="424.1" y="533.5" width="14.9" height="14.7" fill="#888888" stroke="#575757" stroke-width="1"/><rect x="424.6" y="552.0" width="10.0" height="17.0" fill="#7b7b7b" stroke="#575757" stroke-width="1"/><rect x="423.9" y="572.6" width="29.6" height="15.2" fill="#848484" stroke="#575757" stroke-width="1"/><rect x="424.0" y="590.7" width="15.2" height="20.3" fill="#848484" stroke="#575757" stroke-width="1"/></g></g><clipPath id="z6"><polygon points="385,104 436,112 424,128 408,140 392,122"/></clipPath><g clip-path="url(#z6)"><polygon points="385,104 436,112 424,128 408,140 392,122" fill="#6c6c6c"/><g transform="rotate(-35 409.0 121.2)"><rect x="394.5" y="91.5" width="7.1" height="5.5" fill="#7e7e7e" stroke="#575757" stroke-width="1"/><rect x="394.7" y="99.7" width="6.8" height="5.5" fill="#848484" stroke="#575757" stroke-width="1"/><rect x="395.7" y="108.4" width="5.5" height="7.7" fill="#838383" stroke="#575757" stroke-width="1"/><rect x="394.3" y="120.1" width="6.5" height="3.6" fill="#8a8a8a" stroke="#575757" stroke-width="1"/><rect x="393.9" y="128.3" width="6.6" height="4.2" fill="#808080" stroke="#575757" stroke-width="1"/><rect x="394.9" y="137.2" width="5.8" height="6.6" fill="#7e7e7e" stroke="#575757" stroke-width="1"/><rect x="404.7" y="92.9" width="5.2" height="7.4" fill="#848484" stroke="#575757" stroke-width="1"/><rect x="405.5" y="104.6" width="3.5" height="4.0" fill="#7b7b7b" stroke="#575757" stroke-width="1"/><rect x="405.3" y="113.4" width="3.8" height="3.9" fill="#848484" stroke="#575757" stroke-width="1"/><rect x="413.6" y="104.3" width="5.8" height="2.3" fill="#838383" stroke="#575757" stroke-width="1"/><rect x="413.8" y="111.2" width="5.3" height="1.6" fill="#848484" stroke="#575757" stroke-width="1"/><rect x="413.4" y="117.1" width="6.3" height="1.0" fill="#848484" stroke="#575757" stroke-width="1"/><rect x="423.5" y="114.4" width="1.0" height="3.3" fill="#848484" stroke="#575757" stroke-width="1"/><rect x="427.4" y="113.8" width="4.6" height="4.5" fill="#838383" stroke="#575757" stroke-width="1"/><rect x="404.6" y="121.3" width="3.0" height="5.7" fill="#838383" stroke="#575757" stroke-width="1"/><rect x="411.3" y="121.8" width="4.7" height="4.7" fill="#808080" stroke="#575757" stroke-width="1"/><rect x="405.3" y="131.0" width="1.5" height="3.3" fill="#7e7e7e" stroke="#575757" stroke-width="1"/><rect x="411.1" y="130.6" width="5.1" height="4.0" fill="#8a8a8a" stroke="#575757" stroke-width="1"/><rect x="420.1" y="121.6" width="4.8" height="3.0" fill="#868686" stroke="#575757" stroke-width="1"/><rect x="419.5" y="127.9" width="6.0" height="1.4" fill="#868686" stroke="#575757" stroke-width="1"/><rect x="419.9" y="132.5" width="5.0" height="2.3" fill="#818181" stroke="#575757" stroke-width="1"/><rect x="428.1" y="120.9" width="8.0" height="7.6" fill="#818181" stroke="#575757" stroke-width="1"/><rect x="429.0" y="132.1" width="5.5" height="6.7" fill="#868686" stroke="#575757" stroke-width="1"/></g></g><clipPath id="z7"><polygon points="529,103 577,128 588,127 575,140 545,148 537,146"/></clipPath><g clip-path="url(#z7)"><polygon points="529,103 577,128 588,127 575,140 545,148 537,146" fill="#6c6c6c"/><g transform="rotate(-30 558.5 132.0)"><rect x="532.9" y="101.8" width="8.0" height="6.0" fill="#888888" stroke="#575757" stroke-width="1"/><rect x="530.8" y="110.8" width="10.0" height="11.2" fill="#818181" stroke="#575757" stroke-width="1"/><rect x="544.9" y="91.4" width="5.5" height="8.2" fill="#808080" stroke="#575757" stroke-width="1"/><rect x="554.5" y="90.5" width="11.0" height="10.1" fill="#808080" stroke="#575757" stroke-width="1"/><rect x="544.9" y="104.8" width="7.6" height="8.1" fill="#8a8a8a" stroke="#575757" stroke-width="1"/><rect x="544.1" y="117.2" width="9.3" height="4.7" fill="#818181" stroke="#575757" stroke-width="1"/><rect x="557.3" y="104.5" width="7.7" height="6.1" fill="#7b7b7b" stroke="#575757" stroke-width="1"/><rect x="556.3" y="114.0" width="9.6" height="8.2" fill="#7b7b7b" stroke="#575757" stroke-width="1"/><rect x="568.7" y="115.6" width="5.9" height="6.3" fill="#808080" stroke="#575757" stroke-width="1"/><rect x="535.7" y="125.2" width="5.6" height="1.9" fill="#808080" stroke="#575757" stroke-width="1"/><rect x="536.3" y="131.1" width="4.4" height="2.7" fill="#838383" stroke="#575757" stroke-width="1"/><rect x="530.8" y="138.4" width="9.8" height="5.0" fill="#818181" stroke="#575757" stroke-width="1"/><rect x="545.4" y="125.9" width="3.1" height="1.0" fill="#7b7b7b" stroke="#575757" stroke-width="1"/><rect x="545.3" y="130.2" width="3.3" height="2.6" fill="#838383" stroke="#575757" stroke-width="1"/><rect x="552.6" y="125.3" width="3.7" height="8.0" fill="#888888" stroke="#575757" stroke-width="1"/><rect x="559.6" y="125.0" width="3.5" height="8.5" fill="#848484" stroke="#575757" stroke-width="1"/><rect x="545.1" y="137.2" width="4.0" height="6.9" fill="#8a8a8a" stroke="#575757" stroke-width="1"/><rect x="553.9" y="137.6" width="2.3" height="3.3" fill="#868686" stroke="#575757" stroke-width="1"/><rect x="561.0" y="137.3" width="1.2" height="3.9" fill="#818181" stroke="#575757" stroke-width="1"/><rect x="553.6" y="145.7" width="3.3" height="6.9" fill="#888888" stroke="#575757" stroke-width="1"/><rect x="561.7" y="146.1" width="1.0" height="6.2" fill="#8a8a8a" stroke="#575757" stroke-width="1"/><rect x="565.9" y="124.8" width="8.2" height="9.7" fill="#8a8a8a" stroke="#575757" stroke-width="1"/><rect x="566.5" y="137.7" width="5.1" height="8.8" fill="#7b7b7b" stroke="#575757" stroke-width="1"/><rect x="575.1" y="137.4" width="2.1" height="4.1" fill="#818181" stroke="#575757" stroke-width="1"/><rect x="575.2" y="144.8" width="2.0" height="1.9" fill="#8a8a8a" stroke="#575757" stroke-width="1"/><rect x="580.7" y="137.6" width="5.1" height="9.0" fill="#888888" stroke="#575757" stroke-width="1"/></g></g><clipPath id="z8"><polygon points="590,126 616,111 640,122 628,142 606,150"/></clipPath><g clip-path="url(#z8)"><polygon points="590,126 616,111 640,122 628,142 606,150" fill="#6c6c6c"/><g transform="rotate(-35 616.0 130.2)"><rect x="597.0" y="111.8" width="3.2" height="1.0" fill="#838383" stroke="#575757" stroke-width="1"/><rect x="605.0" y="107.7" width="2.9" height="4.4" fill="#7b7b7b" stroke="#575757" stroke-width="1"/><rect x="596.1" y="115.9" width="4.2" height="2.0" fill="#7b7b7b" stroke="#575757" stroke-width="1"/><rect x="596.1" y="121.0" width="4.3" height="5.8" fill="#808080" stroke="#575757" stroke-width="1"/><rect x="603.2" y="115.8" width="5.5" height="2.5" fill="#818181" stroke="#575757" stroke-width="1"/><rect x="603.2" y="121.0" width="5.7" height="6.0" fill="#868686" stroke="#575757" stroke-width="1"/><rect x="611.7" y="106.9" width="7.7" height="6.4" fill="#838383" stroke="#575757" stroke-width="1"/><rect x="611.8" y="116.6" width="3.4" height="4.6" fill="#888888" stroke="#575757" stroke-width="1"/><rect x="619.0" y="116.9" width="1.0" height="3.8" fill="#818181" stroke="#575757" stroke-width="1"/><rect x="611.6" y="124.3" width="7.9" height="2.5" fill="#8a8a8a" stroke="#575757" stroke-width="1"/><rect x="591.0" y="130.2" width="5.3" height="5.4" fill="#838383" stroke="#575757" stroke-width="1"/><rect x="591.1" y="138.9" width="5.7" height="4.4" fill="#808080" stroke="#575757" stroke-width="1"/><rect x="599.6" y="129.6" width="3.7" height="3.2" fill="#7e7e7e" stroke="#575757" stroke-width="1"/><rect x="600.0" y="135.9" width="2.9" height="1.2" fill="#8a8a8a" stroke="#575757" stroke-width="1"/><rect x="607.2" y="130.8" width="1.0" height="5.4" fill="#808080" stroke="#575757" stroke-width="1"/><rect x="611.1" y="130.1" width="8.1" height="6.9" fill="#818181" stroke="#575757" stroke-width="1"/><rect x="600.0" y="140.6" width="2.7" height="3.6" fill="#8a8a8a" stroke="#575757" stroke-width="1"/><rect x="606.7" y="140.9" width="4.1" height="1.1" fill="#808080" stroke="#575757" stroke-width="1"/><rect x="606.9" y="146.5" width="3.5" height="4.4" fill="#808080" stroke="#575757" stroke-width="1"/><rect x="614.2" y="140.2" width="5.4" height="2.8" fill="#7e7e7e" stroke="#575757" stroke-width="1"/><rect x="614.8" y="146.5" width="4.1" height="1.0" fill="#7b7b7b" stroke="#575757" stroke-width="1"/><rect x="622.3" y="106.1" width="2.6" height="9.2" fill="#838383" stroke="#575757" stroke-width="1"/><rect x="628.2" y="111.8" width="3.0" height="2.8" fill="#888888" stroke="#575757" stroke-width="1"/><rect x="623.3" y="118.9" width="1.7" height="5.6" fill="#888888" stroke="#575757" stroke-width="1"/><rect x="629.0" y="118.1" width="3.2" height="7.2" fill="#7e7e7e" stroke="#575757" stroke-width="1"/><rect x="623.5" y="129.4" width="7.7" height="1.3" fill="#888888" stroke="#575757" stroke-width="1"/><rect x="635.8" y="125.4" width="3.4" height="1.0" fill="#808080" stroke="#575757" stroke-width="1"/><rect x="636.2" y="130.7" width="2.6" height="1.0" fill="#7e7e7e" stroke="#575757" stroke-width="1"/><rect x="622.8" y="135.0" width="5.8" height="1.1" fill="#7e7e7e" stroke="#575757" stroke-width="1"/><rect x="622.7" y="139.7" width="6.0" height="1.3" fill="#838383" stroke="#575757" stroke-width="1"/><rect x="632.4" y="135.2" width="1.9" height="5.5" fill="#838383" stroke="#575757" stroke-width="1"/><rect x="622.9" y="144.6" width="3.6" height="3.4" fill="#818181" stroke="#575757" stroke-width="1"/><rect x="638.4" y="135.3" width="1.8" height="3.0" fill="#7b7b7b" stroke="#575757" stroke-width="1"/></g></g><clipPath id="z9"><polygon points="476,182 491,176 521,215 536,234 512,250 494,230"/></clipPath><g clip-path="url(#z9)"><polygon points="476,182 491,176 521,215 536,234 512,250 494,230" fill="#6c6c6c"/><g transform="rotate(-35 505.0 214.5)"><rect x="496.1" y="163.4" width="3.9" height="7.2" fill="#818181" stroke="#575757" stroke-width="1"/><rect x="493.8" y="174.5" width="7.4" height="6.3" fill="#808080" stroke="#575757" stroke-width="1"/><rect x="494.7" y="184.5" width="5.6" height="1.5" fill="#868686" stroke="#575757" stroke-width="1"/><rect x="504.1" y="162.4" width="3.4" height="11.4" fill="#838383" stroke="#575757" stroke-width="1"/><rect x="510.7" y="170.8" width="5.2" height="2.9" fill="#7b7b7b" stroke="#575757" stroke-width="1"/><rect x="504.4" y="177.2" width="3.3" height="4.2" fill="#838383" stroke="#575757" stroke-width="1"/><rect x="505.1" y="185.7" width="1.8" height="1.0" fill="#838383" stroke="#575757" stroke-width="1"/><rect x="512.0" y="177.9" width="3.1" height="2.9" fill="#888888" stroke="#575757" stroke-width="1"/><rect x="511.4" y="185.1" width="4.2" height="1.2" fill="#868686" stroke="#575757" stroke-width="1"/><rect x="485.2" y="196.9" width="6.7" height="1.6" fill="#888888" stroke="#575757" stroke-width="1"/><rect x="494.5" y="189.5" width="5.3" height="3.4" fill="#838383" stroke="#575757" stroke-width="1"/><rect x="495.2" y="196.1" width="3.8" height="1.7" fill="#848484" stroke="#575757" stroke-width="1"/><rect x="486.2" y="202.2" width="3.8" height="10.4" fill="#848484" stroke="#575757" stroke-width="1"/><rect x="494.0" y="201.4" width="5.5" height="3.9" fill="#8a8a8a" stroke="#575757" stroke-width="1"/><rect x="495.0" y="209.4" width="3.5" height="3.1" fill="#7e7e7e" stroke="#575757" stroke-width="1"/><rect x="502.6" y="189.9" width="3.0" height="5.4" fill="#818181" stroke="#575757" stroke-width="1"/><rect x="503.4" y="199.3" width="1.6" height="2.6" fill="#7e7e7e" stroke="#575757" stroke-width="1"/><rect x="509.0" y="189.9" width="7.0" height="4.8" fill="#7b7b7b" stroke="#575757" stroke-width="1"/><rect x="509.3" y="198.4" width="6.3" height="3.9" fill="#838383" stroke="#575757" stroke-width="1"/><rect x="502.4" y="205.7" width="3.2" height="8.0" fill="#7e7e7e" stroke="#575757" stroke-width="1"/><rect x="508.4" y="205.7" width="7.7" height="7.9" fill="#7b7b7b" stroke="#575757" stroke-width="1"/><rect x="484.3" y="216.7" width="6.8" height="3.4" fill="#818181" stroke="#575757" stroke-width="1"/><rect x="484.2" y="223.5" width="7.1" height="5.3" fill="#818181" stroke="#575757" stroke-width="1"/><rect x="486.0" y="232.5" width="4.6" height="4.1" fill="#838383" stroke="#575757" stroke-width="1"/><rect x="488.0" y="241.4" width="2.4" height="1.0" fill="#7b7b7b" stroke="#575757" stroke-width="1"/><rect x="487.0" y="244.2" width="4.2" height="2.5" fill="#808080" stroke="#575757" stroke-width="1"/><rect x="495.2" y="217.4" width="1.4" height="3.1" fill="#868686" stroke="#575757" stroke-width="1"/><rect x="501.1" y="217.2" width="4.7" height="3.4" fill="#8a8a8a" stroke="#575757" stroke-width="1"/><rect x="494.2" y="224.1" width="6.3" height="7.8" fill="#7e7e7e" stroke="#575757" stroke-width="1"/><rect x="504.1" y="225.1" width="1.6" height="5.7" fill="#888888" stroke="#575757" stroke-width="1"/><rect x="510.5" y="217.5" width="4.6" height="4.9" fill="#848484" stroke="#575757" stroke-width="1"/><rect x="510.3" y="227.1" width="1.0" height="3.8" fill="#8a8a8a" stroke="#575757" stroke-width="1"/><rect x="514.4" y="226.8" width="1.3" height="4.4" fill="#888888" stroke="#575757" stroke-width="1"/><rect x="494.7" y="235.1" width="5.7" height="5.3" fill="#868686" stroke="#575757" stroke-width="1"/><rect x="495.0" y="244.5" width="5.2" height="1.7" fill="#838383" stroke="#575757" stroke-width="1"/><rect x="504.4" y="235.2" width="2.5" height="2.0" fill="#818181" stroke="#575757" stroke-width="1"/><rect x="504.0" y="240.8" width="3.3" height="5.9" fill="#8a8a8a" stroke="#575757" stroke-width="1"/><rect x="510.8" y="235.0" width="4.9" height="11.4" fill="#838383" stroke="#575757" stroke-width="1"/><rect x="519.4" y="216.6" width="7.0" height="3.9" fill="#808080" stroke="#575757" stroke-width="1"/><rect x="519.9" y="224.7" width="4.3" height="7.1" fill="#8a8a8a" stroke="#575757" stroke-width="1"/><rect x="519.1" y="235.7" width="7.0" height="6.8" fill="#8a8a8a" stroke="#575757" stroke-width="1"/><rect x="519.4" y="245.8" width="6.5" height="2.2" fill="#848484" stroke="#575757" stroke-width="1"/></g></g><clipPath id="z10"><polygon points="547,150 575,137 601,172 614,190 585,207 565,180"/></clipPath><g clip-path="url(#z10)"><polygon points="547,150 575,137 601,172 614,190 585,207 565,180" fill="#6c6c6c"/><g transform="rotate(-35 581.2 172.7)"><rect x="560.3" y="132.0" width="6.8" height="9.4" fill="#888888" stroke="#575757" stroke-width="1"/><rect x="560.0" y="145.6" width="6.8" height="9.7" fill="#848484" stroke="#575757" stroke-width="1"/><rect x="571.6" y="129.5" width="6.8" height="3.4" fill="#848484" stroke="#575757" stroke-width="1"/><rect x="571.1" y="137.3" width="4.1" height="4.5" fill="#868686" stroke="#575757" stroke-width="1"/><rect x="579.3" y="137.5" width="3.7" height="4.2" fill="#838383" stroke="#575757" stroke-width="1"/><rect x="571.7" y="146.3" width="3.7" height="1.0" fill="#8a8a8a" stroke="#575757" stroke-width="1"/><rect x="571.5" y="151.6" width="4.0" height="3.6" fill="#808080" stroke="#575757" stroke-width="1"/><rect x="580.0" y="145.8" width="3.1" height="1.3" fill="#888888" stroke="#575757" stroke-width="1"/><rect x="579.5" y="150.7" width="4.1" height="5.4" fill="#848484" stroke="#575757" stroke-width="1"/><rect x="586.4" y="136.6" width="6.6" height="10.6" fill="#838383" stroke="#575757" stroke-width="1"/><rect x="586.9" y="150.1" width="5.5" height="5.6" fill="#818181" stroke="#575757" stroke-width="1"/><rect x="596.0" y="134.7" width="6.2" height="6.0" fill="#7b7b7b" stroke="#575757" stroke-width="1"/><rect x="596.8" y="145.0" width="6.9" height="4.0" fill="#848484" stroke="#575757" stroke-width="1"/><rect x="595.7" y="153.0" width="9.1" height="3.1" fill="#888888" stroke="#575757" stroke-width="1"/><rect x="565.0" y="159.5" width="9.8" height="2.6" fill="#7b7b7b" stroke="#575757" stroke-width="1"/><rect x="565.6" y="166.4" width="8.7" height="5.4" fill="#8a8a8a" stroke="#575757" stroke-width="1"/><rect x="562.6" y="175.5" width="3.6" height="3.6" fill="#7b7b7b" stroke="#575757" stroke-width="1"/><rect x="564.7" y="182.4" width="1.0" height="3.9" fill="#8a8a8a" stroke="#575757" stroke-width="1"/><rect x="568.7" y="175.6" width="6.7" height="11.5" fill="#848484" stroke="#575757" stroke-width="1"/><rect x="564.4" y="189.8" width="10.9" height="5.9" fill="#818181" stroke="#575757" stroke-width="1"/><rect x="564.6" y="198.6" width="3.8" height="6.0" fill="#848484" stroke="#575757" stroke-width="1"/><rect x="571.3" y="198.5" width="4.0" height="6.4" fill="#7e7e7e" stroke="#575757" stroke-width="1"/><rect x="578.4" y="159.2" width="7.9" height="3.3" fill="#808080" stroke="#575757" stroke-width="1"/><rect x="578.3" y="165.7" width="8.1" height="7.7" fill="#7e7e7e" stroke="#575757" stroke-width="1"/><rect x="589.5" y="159.2" width="6.4" height="3.3" fill="#888888" stroke="#575757" stroke-width="1"/><rect x="590.3" y="166.6" width="4.8" height="5.8" fill="#888888" stroke="#575757" stroke-width="1"/><rect x="578.0" y="176.1" width="10.2" height="10.1" fill="#7b7b7b" stroke="#575757" stroke-width="1"/><rect x="590.9" y="176.3" width="5.2" height="2.4" fill="#7b7b7b" stroke="#575757" stroke-width="1"/><rect x="591.6" y="182.4" width="3.7" height="2.9" fill="#868686" stroke="#575757" stroke-width="1"/><rect x="598.9" y="175.7" width="10.3" height="10.5" fill="#808080" stroke="#575757" stroke-width="1"/><rect x="578.1" y="189.0" width="10.0" height="5.0" fill="#7b7b7b" stroke="#575757" stroke-width="1"/><rect x="578.3" y="197.0" width="9.7" height="7.2" fill="#888888" stroke="#575757" stroke-width="1"/><rect x="591.4" y="189.4" width="1.2" height="5.7" fill="#888888" stroke="#575757" stroke-width="1"/><rect x="596.1" y="189.2" width="2.0" height="6.1" fill="#808080" stroke="#575757" stroke-width="1"/><rect x="591.5" y="198.9" width="6.4" height="5.0" fill="#868686" stroke="#575757" stroke-width="1"/></g></g><clipPath id="z11"><polygon points="437,184 470,214 500,240 500,255 440,258"/></clipPath><g clip-path="url(#z11)"><polygon points="437,184 470,214 500,240 500,255 440,258" fill="#6c6c6c"/><g transform="rotate(-30 469.4 230.2)"><rect x="442.7" y="190.8" width="9.9" height="1.9" fill="#838383" stroke="#575757" stroke-width="1"/><rect x="449.2" y="197.0" width="3.6" height="5.7" fill="#7b7b7b" stroke="#575757" stroke-width="1"/><rect x="434.2" y="215.3" width="6.1" height="5.2" fill="#818181" stroke="#575757" stroke-width="1"/><rect x="444.6" y="207.0" width="8.1" height="2.9" fill="#7e7e7e" stroke="#575757" stroke-width="1"/><rect x="444.4" y="214.1" width="2.2" height="6.6" fill="#848484" stroke="#575757" stroke-width="1"/><rect x="450.5" y="214.2" width="2.3" height="6.4" fill="#848484" stroke="#575757" stroke-width="1"/><rect x="426.3" y="231.4" width="6.9" height="1.8" fill="#8a8a8a" stroke="#575757" stroke-width="1"/><rect x="416.8" y="236.7" width="15.9" height="6.1" fill="#838383" stroke="#575757" stroke-width="1"/><rect x="436.7" y="224.6" width="4.5" height="6.4" fill="#808080" stroke="#575757" stroke-width="1"/><rect x="445.8" y="225.2" width="6.5" height="5.3" fill="#8a8a8a" stroke="#575757" stroke-width="1"/><rect x="436.2" y="234.6" width="8.6" height="6.8" fill="#8a8a8a" stroke="#575757" stroke-width="1"/><rect x="447.6" y="234.3" width="6.0" height="7.4" fill="#868686" stroke="#575757" stroke-width="1"/><rect x="436.7" y="244.9" width="4.8" height="10.7" fill="#868686" stroke="#575757" stroke-width="1"/><rect x="445.0" y="244.4" width="8.4" height="11.7" fill="#888888" stroke="#575757" stroke-width="1"/><rect x="456.1" y="176.9" width="5.6" height="5.8" fill="#838383" stroke="#575757" stroke-width="1"/><rect x="456.5" y="185.6" width="4.8" height="1.9" fill="#868686" stroke="#575757" stroke-width="1"/><rect x="464.2" y="176.9" width="8.4" height="3.3" fill="#838383" stroke="#575757" stroke-width="1"/><rect x="464.6" y="183.2" width="7.6" height="4.2" fill="#868686" stroke="#575757" stroke-width="1"/><rect x="456.6" y="190.9" width="3.2" height="8.3" fill="#7b7b7b" stroke="#575757" stroke-width="1"/><rect x="463.0" y="190.5" width="4.1" height="9.2" fill="#818181" stroke="#575757" stroke-width="1"/><rect x="456.5" y="202.7" width="3.8" height="6.8" fill="#7e7e7e" stroke="#575757" stroke-width="1"/><rect x="464.2" y="203.2" width="2.2" height="5.8" fill="#868686" stroke="#575757" stroke-width="1"/><rect x="470.7" y="191.3" width="3.2" height="6.4" fill="#838383" stroke="#575757" stroke-width="1"/><rect x="470.9" y="202.4" width="12.0" height="6.4" fill="#818181" stroke="#575757" stroke-width="1"/><rect x="457.1" y="213.5" width="7.1" height="1.2" fill="#7b7b7b" stroke="#575757" stroke-width="1"/><rect x="456.8" y="218.9" width="7.8" height="2.6" fill="#7b7b7b" stroke="#575757" stroke-width="1"/><rect x="457.4" y="225.9" width="6.6" height="6.0" fill="#7e7e7e" stroke="#575757" stroke-width="1"/><rect x="468.4" y="213.2" width="8.1" height="8.2" fill="#848484" stroke="#575757" stroke-width="1"/><rect x="480.3" y="218.9" width="3.2" height="2.7" fill="#8a8a8a" stroke="#575757" stroke-width="1"/><rect x="467.8" y="224.7" width="6.6" height="8.4" fill="#888888" stroke="#575757" stroke-width="1"/><rect x="477.2" y="224.9" width="6.6" height="8.0" fill="#838383" stroke="#575757" stroke-width="1"/><rect x="457.1" y="236.7" width="7.4" height="8.0" fill="#838383" stroke="#575757" stroke-width="1"/><rect x="468.9" y="236.5" width="6.9" height="8.3" fill="#888888" stroke="#575757" stroke-width="1"/><rect x="457.0" y="249.1" width="7.8" height="3.2" fill="#888888" stroke="#575757" stroke-width="1"/><rect x="456.8" y="256.4" width="2.7" height="2.2" fill="#848484" stroke="#575757" stroke-width="1"/><rect x="463.9" y="256.8" width="1.0" height="1.4" fill="#7e7e7e" stroke="#575757" stroke-width="1"/><rect x="468.8" y="248.7" width="7.3" height="10.0" fill="#888888" stroke="#575757" stroke-width="1"/><rect x="480.0" y="236.5" width="5.8" height="3.9" fill="#7b7b7b" stroke="#575757" stroke-width="1"/><rect x="479.7" y="244.2" width="6.4" height="4.4" fill="#888888" stroke="#575757" stroke-width="1"/><rect x="490.0" y="243.9" width="3.1" height="4.3" fill="#7b7b7b" stroke="#575757" stroke-width="1"/><rect x="479.4" y="251.8" width="6.3" height="7.3" fill="#8a8a8a" stroke="#575757" stroke-width="1"/><rect x="489.4" y="252.5" width="3.7" height="5.8" fill="#7e7e7e" stroke="#575757" stroke-width="1"/><rect x="468.4" y="262.1" width="9.2" height="7.1" fill="#818181" stroke="#575757" stroke-width="1"/><rect x="481.7" y="263.1" width="11.0" height="4.0" fill="#888888" stroke="#575757" stroke-width="1"/></g></g><clipPath id="z12"><polygon points="712.8,104.4 725,116.6 737,147.8 723,163.4 702.4,167 700.6,128.7"/></clipPath><g clip-path="url(#z12)"><polygon points="712.8,104.4 725,116.6 737,147.8 723,163.4 702.4,167 700.6,128.7" fill="#6c6c6c"/><g transform="rotate(-38 716.8 138.0)"><rect x="707.2" y="119.5" width="2.4" height="3.0" fill="#7b7b7b" stroke="#575757" stroke-width="1"/><rect x="704.3" y="126.5" width="4.8" height="1.0" fill="#838383" stroke="#575757" stroke-width="1"/><rect x="712.6" y="108.8" width="9.4" height="6.4" fill="#848484" stroke="#575757" stroke-width="1"/><rect x="712.9" y="118.1" width="4.4" height="4.0" fill="#8a8a8a" stroke="#575757" stroke-width="1"/><rect x="712.6" y="125.0" width="4.9" height="1.6" fill="#868686" stroke="#575757" stroke-width="1"/><rect x="720.2" y="117.9" width="1.7" height="8.8" fill="#8a8a8a" stroke="#575757" stroke-width="1"/><rect x="724.9" y="110.8" width="4.7" height="1.1" fill="#818181" stroke="#575757" stroke-width="1"/><rect x="733.0" y="106.0" width="8.0" height="5.9" fill="#8a8a8a" stroke="#575757" stroke-width="1"/><rect x="724.9" y="115.3" width="3.8" height="4.6" fill="#7b7b7b" stroke="#575757" stroke-width="1"/><rect x="725.1" y="123.4" width="3.4" height="2.7" fill="#848484" stroke="#575757" stroke-width="1"/><rect x="732.6" y="115.8" width="7.9" height="3.3" fill="#868686" stroke="#575757" stroke-width="1"/><rect x="732.2" y="123.1" width="4.0" height="3.1" fill="#848484" stroke="#575757" stroke-width="1"/><rect x="687.9" y="134.3" width="6.7" height="5.0" fill="#8a8a8a" stroke="#575757" stroke-width="1"/><rect x="688.4" y="142.7" width="1.0" height="3.8" fill="#888888" stroke="#575757" stroke-width="1"/><rect x="692.3" y="142.8" width="1.7" height="3.7" fill="#868686" stroke="#575757" stroke-width="1"/><rect x="698.4" y="130.4" width="7.0" height="3.9" fill="#818181" stroke="#575757" stroke-width="1"/><rect x="698.3" y="138.9" width="1.0" height="1.9" fill="#848484" stroke="#575757" stroke-width="1"/><rect x="702.8" y="138.5" width="3.0" height="2.6" fill="#838383" stroke="#575757" stroke-width="1"/><rect x="698.2" y="145.2" width="1.0" height="1.2" fill="#8a8a8a" stroke="#575757" stroke-width="1"/><rect x="702.1" y="144.2" width="4.5" height="3.1" fill="#8a8a8a" stroke="#575757" stroke-width="1"/><rect x="709.6" y="129.8" width="1.9" height="5.2" fill="#808080" stroke="#575757" stroke-width="1"/><rect x="715.8" y="130.4" width="1.0" height="3.9" fill="#848484" stroke="#575757" stroke-width="1"/><rect x="720.9" y="129.8" width="3.6" height="1.0" fill="#808080" stroke="#575757" stroke-width="1"/><rect x="720.8" y="133.2" width="3.8" height="1.8" fill="#7e7e7e" stroke="#575757" stroke-width="1"/><rect x="709.8" y="138.8" width="4.9" height="1.0" fill="#7e7e7e" stroke="#575757" stroke-width="1"/><rect x="710.2" y="143.7" width="4.1" height="2.3" fill="#808080" stroke="#575757" stroke-width="1"/><rect x="718.2" y="138.2" width="1.5" height="2.5" fill="#7b7b7b" stroke="#575757" stroke-width="1"/><rect x="722.9" y="138.6" width="1.5" height="1.6" fill="#7b7b7b" stroke="#575757" stroke-width="1"/><rect x="719.3" y="144.5" width="4.5" height="1.5" fill="#818181" stroke="#575757" stroke-width="1"/><rect x="689.2" y="150.8" width="2.3" height="3.4" fill="#7b7b7b" stroke="#575757" stroke-width="1"/><rect x="695.6" y="150.4" width="1.3" height="4.2" fill="#888888" stroke="#575757" stroke-width="1"/><rect x="688.5" y="158.1" width="8.6" height="5.5" fill="#888888" stroke="#575757" stroke-width="1"/><rect x="700.1" y="149.8" width="6.2" height="4.5" fill="#7e7e7e" stroke="#575757" stroke-width="1"/><rect x="700.6" y="157.5" width="5.3" height="5.9" fill="#888888" stroke="#575757" stroke-width="1"/><rect x="708.9" y="149.7" width="1.7" height="5.9" fill="#7e7e7e" stroke="#575757" stroke-width="1"/><rect x="714.1" y="150.7" width="1.6" height="1.0" fill="#868686" stroke="#575757" stroke-width="1"/><rect x="713.1" y="154.1" width="3.6" height="1.5" fill="#818181" stroke="#575757" stroke-width="1"/><rect x="709.7" y="158.9" width="6.1" height="6.0" fill="#8a8a8a" stroke="#575757" stroke-width="1"/><rect x="719.2" y="149.8" width="5.7" height="9.0" fill="#838383" stroke="#575757" stroke-width="1"/><rect x="728.2" y="129.9" width="4.4" height="5.4" fill="#7b7b7b" stroke="#575757" stroke-width="1"/><rect x="737.0" y="130.5" width="1.0" height="1.0" fill="#838383" stroke="#575757" stroke-width="1"/><rect x="736.6" y="134.5" width="1.0" height="1.0" fill="#818181" stroke="#575757" stroke-width="1"/><rect x="728.1" y="139.0" width="1.0" height="5.4" fill="#7b7b7b" stroke="#575757" stroke-width="1"/><rect x="732.5" y="139.1" width="1.2" height="1.0" fill="#8a8a8a" stroke="#575757" stroke-width="1"/><rect x="731.8" y="142.7" width="2.6" height="2.2" fill="#868686" stroke="#575757" stroke-width="1"/><rect x="728.3" y="148.2" width="1.0" height="3.0" fill="#7e7e7e" stroke="#575757" stroke-width="1"/><rect x="727.7" y="154.6" width="7.5" height="8.4" fill="#818181" stroke="#575757" stroke-width="1"/></g></g><clipPath id="z13"><polygon points="664,231 699,209 724,252 707,288 690,268 668,245"/></clipPath><g clip-path="url(#z13)"><polygon points="664,231 699,209 724,252 707,288 690,268 668,245" fill="#6c6c6c"/><g transform="rotate(-35 692.0 248.8)"><rect x="674.4" y="218.5" width="6.0" height="1.7" fill="#888888" stroke="#575757" stroke-width="1"/><rect x="670.0" y="223.7" width="10.5" height="7.8" fill="#818181" stroke="#575757" stroke-width="1"/><rect x="670.6" y="235.5" width="2.5" height="7.2" fill="#838383" stroke="#575757" stroke-width="1"/><rect x="676.9" y="234.7" width="3.8" height="8.9" fill="#7e7e7e" stroke="#575757" stroke-width="1"/><rect x="673.2" y="247.1" width="6.9" height="7.4" fill="#868686" stroke="#575757" stroke-width="1"/><rect x="673.2" y="258.6" width="7.0" height="2.6" fill="#848484" stroke="#575757" stroke-width="1"/><rect x="673.1" y="264.8" width="7.4" height="7.0" fill="#848484" stroke="#575757" stroke-width="1"/><rect x="673.0" y="275.6" width="7.0" height="2.9" fill="#808080" stroke="#575757" stroke-width="1"/><rect x="672.6" y="282.4" width="7.7" height="6.2" fill="#848484" stroke="#575757" stroke-width="1"/><rect x="683.5" y="217.1" width="6.8" height="7.9" fill="#818181" stroke="#575757" stroke-width="1"/><rect x="693.2" y="217.3" width="3.5" height="7.4" fill="#808080" stroke="#575757" stroke-width="1"/><rect x="700.3" y="217.7" width="3.8" height="6.7" fill="#7b7b7b" stroke="#575757" stroke-width="1"/><rect x="684.1" y="228.3" width="2.7" height="4.3" fill="#808080" stroke="#575757" stroke-width="1"/><rect x="690.7" y="228.2" width="1.0" height="4.5" fill="#848484" stroke="#575757" stroke-width="1"/><rect x="684.4" y="236.8" width="7.0" height="1.7" fill="#868686" stroke="#575757" stroke-width="1"/><rect x="695.2" y="227.9" width="9.3" height="2.5" fill="#818181" stroke="#575757" stroke-width="1"/><rect x="694.9" y="233.4" width="3.8" height="6.0" fill="#838383" stroke="#575757" stroke-width="1"/><rect x="701.9" y="233.9" width="2.2" height="4.8" fill="#7e7e7e" stroke="#575757" stroke-width="1"/><rect x="707.9" y="215.6" width="6.7" height="3.0" fill="#7e7e7e" stroke="#575757" stroke-width="1"/><rect x="717.8" y="212.6" width="3.6" height="6.5" fill="#7e7e7e" stroke="#575757" stroke-width="1"/><rect x="707.8" y="222.2" width="7.2" height="5.5" fill="#888888" stroke="#575757" stroke-width="1"/><rect x="708.2" y="231.6" width="6.4" height="7.0" fill="#7b7b7b" stroke="#575757" stroke-width="1"/><rect x="718.3" y="222.0" width="8.0" height="4.8" fill="#808080" stroke="#575757" stroke-width="1"/><rect x="718.5" y="230.2" width="7.5" height="2.7" fill="#8a8a8a" stroke="#575757" stroke-width="1"/><rect x="718.9" y="236.8" width="6.7" height="1.6" fill="#888888" stroke="#575757" stroke-width="1"/><rect x="683.8" y="242.3" width="5.4" height="5.7" fill="#838383" stroke="#575757" stroke-width="1"/><rect x="692.5" y="242.3" width="3.0" height="5.7" fill="#7e7e7e" stroke="#575757" stroke-width="1"/><rect x="683.6" y="251.0" width="12.2" height="7.0" fill="#868686" stroke="#575757" stroke-width="1"/><rect x="698.8" y="242.2" width="3.8" height="8.1" fill="#8a8a8a" stroke="#575757" stroke-width="1"/><rect x="705.4" y="242.0" width="7.8" height="8.6" fill="#818181" stroke="#575757" stroke-width="1"/><rect x="699.5" y="254.2" width="1.0" height="2.9" fill="#818181" stroke="#575757" stroke-width="1"/><rect x="703.6" y="253.9" width="2.5" height="3.5" fill="#818181" stroke="#575757" stroke-width="1"/><rect x="709.3" y="253.1" width="4.0" height="5.1" fill="#848484" stroke="#575757" stroke-width="1"/><rect x="684.3" y="261.6" width="2.0" height="5.1" fill="#8a8a8a" stroke="#575757" stroke-width="1"/><rect x="689.8" y="260.7" width="4.5" height="6.7" fill="#7e7e7e" stroke="#575757" stroke-width="1"/><rect x="684.7" y="271.3" width="2.5" height="4.0" fill="#838383" stroke="#575757" stroke-width="1"/><rect x="691.8" y="270.9" width="1.7" height="4.7" fill="#7b7b7b" stroke="#575757" stroke-width="1"/><rect x="698.0" y="261.8" width="3.4" height="2.8" fill="#888888" stroke="#575757" stroke-width="1"/><rect x="697.3" y="268.7" width="4.9" height="7.5" fill="#7b7b7b" stroke="#575757" stroke-width="1"/><rect x="706.1" y="261.8" width="6.0" height="2.5" fill="#888888" stroke="#575757" stroke-width="1"/><rect x="705.4" y="268.3" width="7.5" height="7.9" fill="#868686" stroke="#575757" stroke-width="1"/><rect x="684.7" y="280.3" width="1.0" height="4.9" fill="#868686" stroke="#575757" stroke-width="1"/><rect x="688.2" y="279.4" width="3.0" height="6.8" fill="#7b7b7b" stroke="#575757" stroke-width="1"/><rect x="694.1" y="279.1" width="4.3" height="7.3" fill="#888888" stroke="#575757" stroke-width="1"/><rect x="683.5" y="289.0" width="15.0" height="14.1" fill="#868686" stroke="#575757" stroke-width="1"/><rect x="701.9" y="279.9" width="10.5" height="4.3" fill="#808080" stroke="#575757" stroke-width="1"/><rect x="715.8" y="242.0" width="7.0" height="6.5" fill="#818181" stroke="#575757" stroke-width="1"/><rect x="716.9" y="252.1" width="4.9" height="3.7" fill="#848484" stroke="#575757" stroke-width="1"/><rect x="716.4" y="260.0" width="8.3" height="9.7" fill="#7e7e7e" stroke="#575757" stroke-width="1"/></g></g><clipPath id="z14"><polygon points="678,334 701,307 708,290 734,315 729,352 690,345"/></clipPath><g clip-path="url(#z14)"><polygon points="678,334 701,307 708,290 734,315 729,352 690,345" fill="#6c6c6c"/><g transform="rotate(-40 706.7 323.8)"><rect x="676.9" y="304.4" width="1.9" height="6.1" fill="#8a8a8a" stroke="#575757" stroke-width="1"/><rect x="676.6" y="314.5" width="3.2" height="3.5" fill="#808080" stroke="#575757" stroke-width="1"/><rect x="683.7" y="305.7" width="7.0" height="5.3" fill="#888888" stroke="#575757" stroke-width="1"/><rect x="683.6" y="315.8" width="7.2" height="1.2" fill="#838383" stroke="#575757" stroke-width="1"/><rect x="695.2" y="305.1" width="4.9" height="4.4" fill="#848484" stroke="#575757" stroke-width="1"/><rect x="695.6" y="313.9" width="3.9" height="3.0" fill="#8a8a8a" stroke="#575757" stroke-width="1"/><rect x="703.3" y="304.4" width="7.2" height="13.7" fill="#8a8a8a" stroke="#575757" stroke-width="1"/><rect x="680.5" y="321.5" width="9.2" height="3.3" fill="#7e7e7e" stroke="#575757" stroke-width="1"/><rect x="679.8" y="328.1" width="5.1" height="6.8" fill="#7e7e7e" stroke="#575757" stroke-width="1"/><rect x="688.3" y="328.9" width="1.3" height="5.2" fill="#838383" stroke="#575757" stroke-width="1"/><rect x="680.0" y="337.7" width="10.2" height="4.2" fill="#8a8a8a" stroke="#575757" stroke-width="1"/><rect x="693.0" y="320.7" width="5.5" height="1.1" fill="#888888" stroke="#575757" stroke-width="1"/><rect x="694.1" y="325.4" width="3.4" height="1.1" fill="#8a8a8a" stroke="#575757" stroke-width="1"/><rect x="693.1" y="330.1" width="5.4" height="3.0" fill="#848484" stroke="#575757" stroke-width="1"/><rect x="702.1" y="321.6" width="7.5" height="1.5" fill="#868686" stroke="#575757" stroke-width="1"/><rect x="701.3" y="326.9" width="8.9" height="6.0" fill="#808080" stroke="#575757" stroke-width="1"/><rect x="693.1" y="335.8" width="1.2" height="4.5" fill="#838383" stroke="#575757" stroke-width="1"/><rect x="697.1" y="335.9" width="3.1" height="4.3" fill="#838383" stroke="#575757" stroke-width="1"/><rect x="694.0" y="343.8" width="5.4" height="6.6" fill="#7e7e7e" stroke="#575757" stroke-width="1"/><rect x="702.9" y="335.7" width="7.6" height="7.3" fill="#8a8a8a" stroke="#575757" stroke-width="1"/><rect x="703.4" y="346.1" width="6.7" height="4.8" fill="#8a8a8a" stroke="#575757" stroke-width="1"/><rect x="699.7" y="354.7" width="10.0" height="4.8" fill="#7e7e7e" stroke="#575757" stroke-width="1"/><rect x="713.8" y="296.4" width="7.0" height="8.3" fill="#8a8a8a" stroke="#575757" stroke-width="1"/><rect x="724.1" y="295.7" width="3.2" height="9.7" fill="#868686" stroke="#575757" stroke-width="1"/><rect x="730.1" y="295.9" width="3.5" height="3.7" fill="#7e7e7e" stroke="#575757" stroke-width="1"/><rect x="729.9" y="302.4" width="3.9" height="3.0" fill="#868686" stroke="#575757" stroke-width="1"/><rect x="713.0" y="307.9" width="10.0" height="10.4" fill="#868686" stroke="#575757" stroke-width="1"/><rect x="726.3" y="308.8" width="6.7" height="8.6" fill="#7e7e7e" stroke="#575757" stroke-width="1"/><rect x="714.1" y="321.9" width="2.0" height="1.0" fill="#888888" stroke="#575757" stroke-width="1"/><rect x="720.6" y="321.7" width="1.0" height="1.0" fill="#8a8a8a" stroke="#575757" stroke-width="1"/><rect x="713.6" y="326.6" width="1.0" height="2.9" fill="#888888" stroke="#575757" stroke-width="1"/><rect x="717.8" y="326.2" width="4.2" height="3.7" fill="#848484" stroke="#575757" stroke-width="1"/><rect x="713.3" y="332.9" width="8.6" height="8.6" fill="#888888" stroke="#575757" stroke-width="1"/><rect x="725.1" y="321.1" width="10.1" height="7.7" fill="#7b7b7b" stroke="#575757" stroke-width="1"/><rect x="725.7" y="332.5" width="1.4" height="8.3" fill="#818181" stroke="#575757" stroke-width="1"/><rect x="730.6" y="331.6" width="4.9" height="5.4" fill="#888888" stroke="#575757" stroke-width="1"/><rect x="731.4" y="340.2" width="3.4" height="1.0" fill="#868686" stroke="#575757" stroke-width="1"/><rect x="713.5" y="344.7" width="6.3" height="11.5" fill="#838383" stroke="#575757" stroke-width="1"/><rect x="722.8" y="344.3" width="2.1" height="6.7" fill="#868686" stroke="#575757" stroke-width="1"/></g></g><clipPath id="z15"><polygon points="604,270 640,250 668,245 700,288 678,322 660,345 640,368 600,340 560,340 520,320 560,296"/></clipPath><g clip-path="url(#z15)"><polygon points="604,270 640,250 668,245 700,288 678,322 660,345 640,368 600,340 560,340 520,320 560,296" fill="#6c6c6c"/><g transform="rotate(-38 620.9 307.6)"><rect x="529.1" y="252.9" width="12.7" height="8.0" fill="#818181" stroke="#575757" stroke-width="1"/><rect x="535.6" y="265.0" width="6.0" height="5.8" fill="#838383" stroke="#575757" stroke-width="1"/><rect x="545.6" y="252.7" width="8.8" height="18.4" fill="#848484" stroke="#575757" stroke-width="1"/><rect x="558.4" y="253.8" width="4.0" height="4.5" fill="#838383" stroke="#575757" stroke-width="1"/><rect x="566.9" y="254.3" width="1.0" height="3.6" fill="#7b7b7b" stroke="#575757" stroke-width="1"/><rect x="571.1" y="251.4" width="4.0" height="6.9" fill="#888888" stroke="#575757" stroke-width="1"/><rect x="557.8" y="261.8" width="9.6" height="9.7" fill="#8a8a8a" stroke="#575757" stroke-width="1"/><rect x="570.6" y="262.2" width="4.8" height="9.1" fill="#7b7b7b" stroke="#575757" stroke-width="1"/><rect x="578.3" y="258.3" width="14.9" height="13.4" fill="#818181" stroke="#575757" stroke-width="1"/><rect x="597.0" y="261.1" width="8.0" height="9.4" fill="#7e7e7e" stroke="#575757" stroke-width="1"/><rect x="542.9" y="274.6" width="11.8" height="10.3" fill="#838383" stroke="#575757" stroke-width="1"/><rect x="542.9" y="288.1" width="11.7" height="9.3" fill="#838383" stroke="#575757" stroke-width="1"/><rect x="557.7" y="274.4" width="6.2" height="7.7" fill="#848484" stroke="#575757" stroke-width="1"/><rect x="557.7" y="284.9" width="6.2" height="3.9" fill="#888888" stroke="#575757" stroke-width="1"/><rect x="566.9" y="274.6" width="4.9" height="7.6" fill="#8a8a8a" stroke="#575757" stroke-width="1"/><rect x="575.5" y="275.1" width="3.5" height="6.7" fill="#7e7e7e" stroke="#575757" stroke-width="1"/><rect x="567.0" y="285.6" width="12.3" height="2.8" fill="#818181" stroke="#575757" stroke-width="1"/><rect x="558.4" y="292.4" width="7.3" height="7.8" fill="#888888" stroke="#575757" stroke-width="1"/><rect x="570.0" y="292.5" width="8.8" height="7.5" fill="#888888" stroke="#575757" stroke-width="1"/><rect x="558.4" y="304.5" width="8.8" height="3.1" fill="#7e7e7e" stroke="#575757" stroke-width="1"/><rect x="571.9" y="304.9" width="6.6" height="12.4" fill="#8a8a8a" stroke="#575757" stroke-width="1"/><rect x="583.6" y="275.6" width="7.5" height="6.7" fill="#888888" stroke="#575757" stroke-width="1"/><rect x="583.6" y="287.4" width="7.5" height="4.5" fill="#7e7e7e" stroke="#575757" stroke-width="1"/><rect x="595.7" y="275.0" width="4.7" height="9.0" fill="#848484" stroke="#575757" stroke-width="1"/><rect x="604.4" y="275.0" width="1.1" height="8.9" fill="#808080" stroke="#575757" stroke-width="1"/><rect x="595.0" y="287.3" width="11.2" height="5.7" fill="#7b7b7b" stroke="#575757" stroke-width="1"/><rect x="582.7" y="296.0" width="6.6" height="8.9" fill="#838383" stroke="#575757" stroke-width="1"/><rect x="582.9" y="308.3" width="6.2" height="9.8" fill="#7e7e7e" stroke="#575757" stroke-width="1"/><rect x="593.4" y="296.9" width="11.6" height="5.1" fill="#808080" stroke="#575757" stroke-width="1"/><rect x="592.8" y="306.4" width="12.9" height="11.7" fill="#838383" stroke="#575757" stroke-width="1"/><rect x="609.9" y="260.6" width="7.1" height="5.5" fill="#838383" stroke="#575757" stroke-width="1"/><rect x="609.4" y="270.2" width="8.2" height="8.4" fill="#8a8a8a" stroke="#575757" stroke-width="1"/><rect x="621.7" y="260.5" width="7.2" height="3.6" fill="#8a8a8a" stroke="#575757" stroke-width="1"/><rect x="621.7" y="268.7" width="7.3" height="9.4" fill="#848484" stroke="#575757" stroke-width="1"/><rect x="609.1" y="282.0" width="6.8" height="2.6" fill="#868686" stroke="#575757" stroke-width="1"/><rect x="609.3" y="287.9" width="6.4" height="6.2" fill="#888888" stroke="#575757" stroke-width="1"/><rect x="619.4" y="282.3" width="9.9" height="5.8" fill="#838383" stroke="#575757" stroke-width="1"/><rect x="619.1" y="291.7" width="10.5" height="2.6" fill="#818181" stroke="#575757" stroke-width="1"/><rect x="633.2" y="260.1" width="8.1" height="10.2" fill="#868686" stroke="#575757" stroke-width="1"/><rect x="644.4" y="259.5" width="10.1" height="11.6" fill="#868686" stroke="#575757" stroke-width="1"/><rect x="633.7" y="274.8" width="10.6" height="7.1" fill="#888888" stroke="#575757" stroke-width="1"/><rect x="633.4" y="286.5" width="11.3" height="7.3" fill="#838383" stroke="#575757" stroke-width="1"/><rect x="648.9" y="274.4" width="4.8" height="6.2" fill="#808080" stroke="#575757" stroke-width="1"/><rect x="648.2" y="284.1" width="6.2" height="10.5" fill="#838383" stroke="#575757" stroke-width="1"/><rect x="610.1" y="298.5" width="5.8" height="9.2" fill="#7b7b7b" stroke="#575757" stroke-width="1"/><rect x="609.2" y="311.9" width="7.6" height="6.3" fill="#808080" stroke="#575757" stroke-width="1"/><rect x="620.4" y="297.9" width="9.5" height="7.7" fill="#8a8a8a" stroke="#575757" stroke-width="1"/><rect x="619.7" y="308.8" width="10.9" height="9.9" fill="#8a8a8a" stroke="#575757" stroke-width="1"/><rect x="633.7" y="297.8" width="7.4" height="7.5" fill="#888888" stroke="#575757" stroke-width="1"/><rect x="645.1" y="298.0" width="8.6" height="7.1" fill="#7b7b7b" stroke="#575757" stroke-width="1"/><rect x="634.0" y="309.3" width="5.3" height="8.5" fill="#888888" stroke="#575757" stroke-width="1"/><rect x="643.3" y="309.1" width="5.3" height="8.8" fill="#808080" stroke="#575757" stroke-width="1"/><rect x="652.9" y="309.6" width="1.0" height="2.7" fill="#838383" stroke="#575757" stroke-width="1"/><rect x="652.8" y="317.1" width="1.0" height="1.0" fill="#888888" stroke="#575757" stroke-width="1"/><rect x="658.0" y="271.3" width="6.3" height="9.4" fill="#888888" stroke="#575757" stroke-width="1"/><rect x="668.9" y="271.5" width="4.6" height="8.8" fill="#888888" stroke="#575757" stroke-width="1"/><rect x="677.3" y="269.9" width="11.8" height="11.7" fill="#8a8a8a" stroke="#575757" stroke-width="1"/><rect x="657.5" y="284.5" width="9.6" height="11.7" fill="#7b7b7b" stroke="#575757" stroke-width="1"/><rect x="671.2" y="285.3" width="7.5" height="10.1" fill="#8a8a8a" stroke="#575757" stroke-width="1"/><rect x="683.2" y="284.8" width="5.1" height="11.0" fill="#818181" stroke="#575757" stroke-width="1"/><rect x="657.6" y="299.7" width="2.4" height="9.1" fill="#818181" stroke="#575757" stroke-width="1"/><rect x="663.3" y="299.4" width="5.9" height="9.6" fill="#818181" stroke="#575757" stroke-width="1"/><rect x="657.4" y="312.2" width="5.9" height="6.2" fill="#7e7e7e" stroke="#575757" stroke-width="1"/><rect x="667.3" y="313.0" width="1.1" height="4.5" fill="#838383" stroke="#575757" stroke-width="1"/><rect x="673.3" y="300.3" width="14.5" height="17.2" fill="#818181" stroke="#575757" stroke-width="1"/><rect x="692.5" y="273.8" width="8.6" height="11.5" fill="#868686" stroke="#575757" stroke-width="1"/><rect x="692.2" y="289.6" width="9.1" height="12.6" fill="#838383" stroke="#575757" stroke-width="1"/><rect x="692.0" y="305.9" width="6.9" height="4.2" fill="#888888" stroke="#575757" stroke-width="1"/><rect x="692.6" y="314.3" width="5.9" height="3.3" fill="#8a8a8a" stroke="#575757" stroke-width="1"/><rect x="566.2" y="322.0" width="16.8" height="12.2" fill="#8a8a8a" stroke="#575757" stroke-width="1"/><rect x="587.0" y="321.8" width="10.9" height="12.7" fill="#848484" stroke="#575757" stroke-width="1"/><rect x="583.0" y="338.5" width="14.5" height="17.1" fill="#8a8a8a" stroke="#575757" stroke-width="1"/><rect x="585.5" y="359.3" width="12.8" height="7.2" fill="#818181" stroke="#575757" stroke-width="1"/><rect x="601.5" y="321.7" width="10.8" height="10.8" fill="#8a8a8a" stroke="#575757" stroke-width="1"/><rect x="602.2" y="336.9" width="9.3" height="7.8" fill="#888888" stroke="#575757" stroke-width="1"/><rect x="615.6" y="321.4" width="3.9" height="9.4" fill="#848484" stroke="#575757" stroke-width="1"/><rect x="623.1" y="322.0" width="3.7" height="8.2" fill="#8a8a8a" stroke="#575757" stroke-width="1"/><rect x="616.2" y="334.4" width="10.5" height="10.6" fill="#838383" stroke="#575757" stroke-width="1"/><rect x="602.2" y="349.7" width="9.2" height="5.1" fill="#888888" stroke="#575757" stroke-width="1"/><rect x="601.4" y="359.0" width="10.8" height="4.9" fill="#868686" stroke="#575757" stroke-width="1"/><rect x="615.5" y="348.7" width="11.8" height="15.3" fill="#818181" stroke="#575757" stroke-width="1"/><rect x="631.0" y="322.1" width="14.1" height="19.2" fill="#838383" stroke="#575757" stroke-width="1"/><rect x="649.1" y="321.7" width="4.7" height="5.6" fill="#848484" stroke="#575757" stroke-width="1"/><rect x="657.1" y="321.4" width="11.0" height="6.1" fill="#7b7b7b" stroke="#575757" stroke-width="1"/><rect x="648.9" y="330.6" width="5.5" height="11.2" fill="#848484" stroke="#575757" stroke-width="1"/><rect x="657.7" y="330.7" width="10.2" height="11.0" fill="#868686" stroke="#575757" stroke-width="1"/><rect x="630.3" y="344.9" width="5.7" height="6.3" fill="#848484" stroke="#575757" stroke-width="1"/><rect x="639.3" y="345.3" width="9.7" height="5.4" fill="#818181" stroke="#575757" stroke-width="1"/><rect x="630.2" y="354.0" width="6.5" height="10.2" fill="#868686" stroke="#575757" stroke-width="1"/><rect x="639.8" y="354.5" width="9.3" height="9.3" fill="#8a8a8a" stroke="#575757" stroke-width="1"/><rect x="653.2" y="345.7" width="14.2" height="17.5" fill="#888888" stroke="#575757" stroke-width="1"/><rect x="602.1" y="368.0" width="3.9" height="3.3" fill="#888888" stroke="#575757" stroke-width="1"/><rect x="671.3" y="321.6" width="15.5" height="16.5" fill="#868686" stroke="#575757" stroke-width="1"/><rect x="671.2" y="341.3" width="6.3" height="9.7" fill="#888888" stroke="#575757" stroke-width="1"/><rect x="680.3" y="341.0" width="6.9" height="10.3" fill="#818181" stroke="#575757" stroke-width="1"/><rect x="690.8" y="322.3" width="12.1" height="10.6" fill="#818181" stroke="#575757" stroke-width="1"/><rect x="690.7" y="337.5" width="12.2" height="12.8" fill="#868686" stroke="#575757" stroke-width="1"/></g></g><clipPath id="z16"><polygon points="440,342 492,328 520,315 560,340 600,340 640,368 600,410 546,470 552,500 572,552 600,592 440,590"/></clipPath><g clip-path="url(#z16)"><polygon points="440,342 492,328 520,315 560,340 600,340 640,368 600,410 546,470 552,500 572,552 600,592 440,590" fill="#6c6c6c"/><g transform="rotate(-8 546.8 428.9)"><rect x="437.8" y="316.5" width="13.9" height="17.0" fill="#7b7b7b" stroke="#575757" stroke-width="1"/><rect x="432.6" y="336.9" width="19.9" height="25.3" fill="#8a8a8a" stroke="#575757" stroke-width="1"/><rect x="456.1" y="316.7" width="20.6" height="20.8" fill="#7b7b7b" stroke="#575757" stroke-width="1"/><rect x="455.5" y="341.5" width="9.2" height="20.3" fill="#838383" stroke="#575757" stroke-width="1"/><rect x="469.0" y="342.3" width="7.4" height="8.6" fill="#818181" stroke="#575757" stroke-width="1"/><rect x="467.9" y="354.9" width="9.6" height="7.2" fill="#7b7b7b" stroke="#575757" stroke-width="1"/><rect x="480.9" y="318.3" width="16.5" height="18.7" fill="#888888" stroke="#575757" stroke-width="1"/><rect x="500.9" y="317.9" width="9.2" height="19.6" fill="#8a8a8a" stroke="#575757" stroke-width="1"/><rect x="481.2" y="341.3" width="28.2" height="19.9" fill="#8a8a8a" stroke="#575757" stroke-width="1"/><rect x="513.7" y="318.4" width="8.3" height="15.0" fill="#868686" stroke="#575757" stroke-width="1"/><rect x="525.3" y="317.6" width="18.1" height="16.5" fill="#818181" stroke="#575757" stroke-width="1"/><rect x="514.0" y="337.6" width="12.4" height="8.2" fill="#808080" stroke="#575757" stroke-width="1"/><rect x="513.4" y="349.7" width="13.6" height="12.2" fill="#888888" stroke="#575757" stroke-width="1"/><rect x="530.6" y="337.4" width="12.1" height="12.5" fill="#818181" stroke="#575757" stroke-width="1"/><rect x="530.5" y="353.6" width="12.4" height="8.1" fill="#888888" stroke="#575757" stroke-width="1"/><rect x="427.4" y="394.8" width="13.9" height="11.4" fill="#838383" stroke="#575757" stroke-width="1"/><rect x="425.3" y="409.1" width="15.6" height="12.0" fill="#8a8a8a" stroke="#575757" stroke-width="1"/><rect x="425.2" y="424.2" width="15.9" height="12.3" fill="#848484" stroke="#575757" stroke-width="1"/><rect x="430.8" y="439.3" width="10.6" height="19.0" fill="#7e7e7e" stroke="#575757" stroke-width="1"/><rect x="444.6" y="365.5" width="7.9" height="21.1" fill="#7e7e7e" stroke="#575757" stroke-width="1"/><rect x="456.7" y="365.8" width="12.6" height="20.6" fill="#7e7e7e" stroke="#575757" stroke-width="1"/><rect x="474.1" y="366.1" width="13.0" height="7.5" fill="#8a8a8a" stroke="#575757" stroke-width="1"/><rect x="473.3" y="377.9" width="14.6" height="8.9" fill="#8a8a8a" stroke="#575757" stroke-width="1"/><rect x="444.8" y="390.8" width="17.9" height="24.3" fill="#848484" stroke="#575757" stroke-width="1"/><rect x="467.5" y="391.1" width="9.7" height="13.0" fill="#808080" stroke="#575757" stroke-width="1"/><rect x="481.0" y="389.7" width="7.4" height="15.6" fill="#818181" stroke="#575757" stroke-width="1"/><rect x="466.6" y="408.2" width="21.4" height="7.5" fill="#808080" stroke="#575757" stroke-width="1"/><rect x="445.1" y="419.8" width="24.6" height="10.4" fill="#818181" stroke="#575757" stroke-width="1"/><rect x="444.6" y="434.6" width="8.0" height="22.9" fill="#808080" stroke="#575757" stroke-width="1"/><rect x="457.0" y="435.1" width="12.9" height="22.0" fill="#7e7e7e" stroke="#575757" stroke-width="1"/><rect x="473.8" y="418.8" width="14.3" height="13.9" fill="#8a8a8a" stroke="#575757" stroke-width="1"/><rect x="474.0" y="436.0" width="13.8" height="11.8" fill="#8a8a8a" stroke="#575757" stroke-width="1"/><rect x="473.9" y="451.2" width="14.0" height="6.7" fill="#888888" stroke="#575757" stroke-width="1"/><rect x="491.4" y="365.3" width="17.0" height="20.5" fill="#848484" stroke="#575757" stroke-width="1"/><rect x="511.4" y="364.8" width="11.6" height="8.8" fill="#848484" stroke="#575757" stroke-width="1"/><rect x="511.5" y="376.3" width="11.4" height="10.0" fill="#7e7e7e" stroke="#575757" stroke-width="1"/><rect x="490.9" y="388.9" width="14.1" height="10.9" fill="#818181" stroke="#575757" stroke-width="1"/><rect x="491.4" y="403.1" width="13.0" height="5.6" fill="#8a8a8a" stroke="#575757" stroke-width="1"/><rect x="507.9" y="389.2" width="14.8" height="19.6" fill="#868686" stroke="#575757" stroke-width="1"/><rect x="526.7" y="365.9" width="15.7" height="19.4" fill="#838383" stroke="#575757" stroke-width="1"/><rect x="526.3" y="389.7" width="16.3" height="18.7" fill="#888888" stroke="#575757" stroke-width="1"/><rect x="491.5" y="412.4" width="11.2" height="15.8" fill="#7b7b7b" stroke="#575757" stroke-width="1"/><rect x="506.0" y="411.8" width="13.1" height="17.2" fill="#808080" stroke="#575757" stroke-width="1"/><rect x="491.4" y="432.0" width="12.4" height="25.6" fill="#848484" stroke="#575757" stroke-width="1"/><rect x="508.2" y="432.8" width="9.6" height="5.8" fill="#8a8a8a" stroke="#575757" stroke-width="1"/><rect x="507.4" y="442.9" width="11.2" height="14.9" fill="#808080" stroke="#575757" stroke-width="1"/><rect x="521.7" y="411.8" width="7.5" height="14.9" fill="#808080" stroke="#575757" stroke-width="1"/><rect x="531.9" y="412.0" width="11.2" height="14.5" fill="#8a8a8a" stroke="#575757" stroke-width="1"/><rect x="521.8" y="429.5" width="21.5" height="10.9" fill="#818181" stroke="#575757" stroke-width="1"/><rect x="522.1" y="443.5" width="7.7" height="14.3" fill="#838383" stroke="#575757" stroke-width="1"/><rect x="534.0" y="444.3" width="8.2" height="4.2" fill="#8a8a8a" stroke="#575757" stroke-width="1"/><rect x="533.7" y="453.2" width="8.8" height="4.1" fill="#838383" stroke="#575757" stroke-width="1"/><rect x="427.6" y="461.5" width="18.3" height="16.4" fill="#848484" stroke="#575757" stroke-width="1"/><rect x="406.3" y="495.6" width="21.4" height="15.8" fill="#808080" stroke="#575757" stroke-width="1"/><rect x="431.2" y="481.8" width="14.8" height="12.2" fill="#818181" stroke="#575757" stroke-width="1"/><rect x="430.9" y="497.6" width="15.4" height="13.9" fill="#818181" stroke="#575757" stroke-width="1"/><rect x="415.5" y="514.7" width="30.7" height="18.4" fill="#7b7b7b" stroke="#575757" stroke-width="1"/><rect x="416.4" y="537.2" width="12.1" height="19.4" fill="#818181" stroke="#575757" stroke-width="1"/><rect x="433.0" y="536.8" width="12.8" height="20.2" fill="#7e7e7e" stroke="#575757" stroke-width="1"/><rect x="416.9" y="561.5" width="12.3" height="21.9" fill="#848484" stroke="#575757" stroke-width="1"/><rect x="433.1" y="560.6" width="13.4" height="6.8" fill="#838383" stroke="#575757" stroke-width="1"/><rect x="433.0" y="570.3" width="13.5" height="14.2" fill="#838383" stroke="#575757" stroke-width="1"/><rect x="449.4" y="461.0" width="17.8" height="28.3" fill="#7b7b7b" stroke="#575757" stroke-width="1"/><rect x="470.4" y="461.3" width="21.4" height="27.6" fill="#868686" stroke="#575757" stroke-width="1"/><rect x="449.9" y="492.7" width="19.9" height="11.9" fill="#868686" stroke="#575757" stroke-width="1"/><rect x="449.6" y="508.3" width="20.5" height="19.9" fill="#7e7e7e" stroke="#575757" stroke-width="1"/><rect x="473.2" y="492.1" width="19.0" height="22.1" fill="#7b7b7b" stroke="#575757" stroke-width="1"/><rect x="473.1" y="516.9" width="19.1" height="11.6" fill="#818181" stroke="#575757" stroke-width="1"/><rect x="495.5" y="461.5" width="18.6" height="24.8" fill="#7b7b7b" stroke="#575757" stroke-width="1"/><rect x="518.1" y="461.6" width="24.4" height="24.5" fill="#838383" stroke="#575757" stroke-width="1"/><rect x="496.1" y="490.8" width="14.1" height="5.3" fill="#888888" stroke="#575757" stroke-width="1"/><rect x="495.3" y="500.5" width="15.8" height="6.9" fill="#868686" stroke="#575757" stroke-width="1"/><rect x="496.0" y="511.6" width="14.5" height="15.8" fill="#7e7e7e" stroke="#575757" stroke-width="1"/><rect x="514.1" y="489.5" width="12.6" height="15.1" fill="#7b7b7b" stroke="#575757" stroke-width="1"/><rect x="529.8" y="489.9" width="13.1" height="14.3" fill="#7b7b7b" stroke="#575757" stroke-width="1"/><rect x="514.8" y="508.0" width="27.9" height="19.9" fill="#888888" stroke="#575757" stroke-width="1"/><rect x="449.3" y="531.3" width="15.4" height="13.6" fill="#808080" stroke="#575757" stroke-width="1"/><rect x="449.4" y="547.8" width="15.3" height="8.5" fill="#888888" stroke="#575757" stroke-width="1"/><rect x="468.4" y="532.0" width="13.7" height="9.5" fill="#7b7b7b" stroke="#575757" stroke-width="1"/><rect x="468.1" y="545.7" width="14.3" height="10.1" fill="#868686" stroke="#575757" stroke-width="1"/><rect x="485.6" y="531.1" width="21.2" height="25.3" fill="#7e7e7e" stroke="#575757" stroke-width="1"/><rect x="449.9" y="559.7" width="10.4" height="11.0" fill="#888888" stroke="#575757" stroke-width="1"/><rect x="450.0" y="574.7" width="10.3" height="11.3" fill="#838383" stroke="#575757" stroke-width="1"/><rect x="464.7" y="560.1" width="12.9" height="25.6" fill="#838383" stroke="#575757" stroke-width="1"/><rect x="482.4" y="560.1" width="10.1" height="16.5" fill="#818181" stroke="#575757" stroke-width="1"/><rect x="496.3" y="559.0" width="10.6" height="18.8" fill="#808080" stroke="#575757" stroke-width="1"/><rect x="481.7" y="580.8" width="24.7" height="23.3" fill="#8a8a8a" stroke="#575757" stroke-width="1"/><rect x="509.8" y="531.5" width="13.3" height="11.5" fill="#838383" stroke="#575757" stroke-width="1"/><rect x="509.9" y="546.4" width="13.1" height="12.5" fill="#848484" stroke="#575757" stroke-width="1"/><rect x="525.9" y="531.1" width="17.5" height="12.7" fill="#7e7e7e" stroke="#575757" stroke-width="1"/><rect x="527.2" y="547.6" width="14.9" height="10.5" fill="#7b7b7b" stroke="#575757" stroke-width="1"/><rect x="510.1" y="562.6" width="16.5" height="22.5" fill="#818181" stroke="#575757" stroke-width="1"/><rect x="529.9" y="561.9" width="13.5" height="24.0" fill="#808080" stroke="#575757" stroke-width="1"/><rect x="509.3" y="588.3" width="14.8" height="16.2" fill="#848484" stroke="#575757" stroke-width="1"/><rect x="526.7" y="588.4" width="16.7" height="16.0" fill="#818181" stroke="#575757" stroke-width="1"/><rect x="546.6" y="319.2" width="11.0" height="9.7" fill="#888888" stroke="#575757" stroke-width="1"/><rect x="546.8" y="333.0" width="19.2" height="15.7" fill="#7b7b7b" stroke="#575757" stroke-width="1"/><rect x="569.6" y="339.0" width="15.1" height="10.4" fill="#818181" stroke="#575757" stroke-width="1"/><rect x="587.8" y="318.8" width="18.8" height="30.4" fill="#888888" stroke="#575757" stroke-width="1"/><rect x="546.4" y="352.6" width="22.7" height="26.7" fill="#838383" stroke="#575757" stroke-width="1"/><rect x="547.0" y="383.4" width="7.8" height="7.5" fill="#838383" stroke="#575757" stroke-width="1"/><rect x="547.1" y="395.6" width="7.5" height="4.7" fill="#888888" stroke="#575757" stroke-width="1"/><rect x="559.3" y="383.3" width="9.4" height="17.3" fill="#7e7e7e" stroke="#575757" stroke-width="1"/><rect x="572.6" y="352.6" width="19.5" height="13.0" fill="#8a8a8a" stroke="#575757" stroke-width="1"/><rect x="573.5" y="369.9" width="17.8" height="7.8" fill="#7e7e7e" stroke="#575757" stroke-width="1"/><rect x="595.2" y="352.2" width="11.6" height="9.0" fill="#818181" stroke="#575757" stroke-width="1"/><rect x="596.3" y="365.0" width="9.6" height="12.9" fill="#838383" stroke="#575757" stroke-width="1"/><rect x="572.7" y="382.0" width="33.7" height="18.9" fill="#818181" stroke="#575757" stroke-width="1"/><rect x="609.7" y="318.7" width="21.9" height="28.5" fill="#7b7b7b" stroke="#575757" stroke-width="1"/><rect x="609.9" y="350.3" width="12.8" height="6.2" fill="#7b7b7b" stroke="#575757" stroke-width="1"/><rect x="610.3" y="360.3" width="11.9" height="11.6" fill="#848484" stroke="#575757" stroke-width="1"/><rect x="626.1" y="350.4" width="6.8" height="8.4" fill="#8a8a8a" stroke="#575757" stroke-width="1"/><rect x="626.9" y="363.0" width="5.2" height="8.6" fill="#868686" stroke="#575757" stroke-width="1"/><rect x="636.1" y="350.1" width="14.1" height="22.5" fill="#7e7e7e" stroke="#575757" stroke-width="1"/><rect x="610.4" y="376.2" width="17.9" height="12.3" fill="#808080" stroke="#575757" stroke-width="1"/><rect x="610.1" y="392.6" width="18.4" height="8.2" fill="#888888" stroke="#575757" stroke-width="1"/><rect x="631.9" y="375.5" width="18.4" height="25.8" fill="#838383" stroke="#575757" stroke-width="1"/><rect x="546.3" y="404.4" width="6.5" height="11.4" fill="#808080" stroke="#575757" stroke-width="1"/><rect x="556.7" y="404.9" width="12.0" height="10.4" fill="#8a8a8a" stroke="#575757" stroke-width="1"/><rect x="546.2" y="418.9" width="23.1" height="13.3" fill="#888888" stroke="#575757" stroke-width="1"/><rect x="573.4" y="405.3" width="9.8" height="25.9" fill="#7e7e7e" stroke="#575757" stroke-width="1"/><rect x="588.0" y="404.9" width="27.1" height="26.7" fill="#888888" stroke="#575757" stroke-width="1"/><rect x="546.8" y="435.9" width="10.1" height="14.8" fill="#8a8a8a" stroke="#575757" stroke-width="1"/><rect x="560.2" y="435.0" width="11.3" height="5.0" fill="#888888" stroke="#575757" stroke-width="1"/><rect x="561.2" y="443.6" width="9.2" height="7.0" fill="#818181" stroke="#575757" stroke-width="1"/><rect x="546.3" y="454.4" width="10.1" height="15.9" fill="#818181" stroke="#575757" stroke-width="1"/><rect x="559.2" y="454.0" width="12.3" height="16.7" fill="#838383" stroke="#575757" stroke-width="1"/><rect x="574.6" y="435.8" width="19.7" height="8.8" fill="#838383" stroke="#575757" stroke-width="1"/><rect x="618.7" y="404.2" width="10.5" height="17.7" fill="#818181" stroke="#575757" stroke-width="1"/><rect x="546.7" y="507.6" width="22.4" height="17.8" fill="#7b7b7b" stroke="#575757" stroke-width="1"/><rect x="547.2" y="530.0" width="22.2" height="15.2" fill="#848484" stroke="#575757" stroke-width="1"/><rect x="545.9" y="549.0" width="8.1" height="11.0" fill="#848484" stroke="#575757" stroke-width="1"/><rect x="557.5" y="549.9" width="12.3" height="9.1" fill="#838383" stroke="#575757" stroke-width="1"/><rect x="546.1" y="562.7" width="12.5" height="22.2" fill="#848484" stroke="#575757" stroke-width="1"/><rect x="561.5" y="562.7" width="23.5" height="22.2" fill="#7e7e7e" stroke="#575757" stroke-width="1"/><rect x="546.5" y="588.2" width="15.6" height="15.7" fill="#888888" stroke="#575757" stroke-width="1"/><rect x="566.4" y="588.8" width="17.8" height="14.6" fill="#7e7e7e" stroke="#575757" stroke-width="1"/></g></g><clipPath id="z17"><polygon points="650,375 725,385 750,416 742,460 700,468 680,440 660,410"/></clipPath><g clip-path="url(#z17)"><polygon points="650,375 725,385 750,416 742,460 700,468 680,440 660,410" fill="#6c6c6c"/><g transform="rotate(35 701.0 422.0)"><rect x="657.5" y="388.4" width="5.0" height="7.8" fill="#818181" stroke="#575757" stroke-width="1"/><rect x="665.4" y="388.4" width="5.8" height="7.7" fill="#888888" stroke="#575757" stroke-width="1"/><rect x="674.8" y="389.1" width="1.4" height="6.3" fill="#838383" stroke="#575757" stroke-width="1"/><rect x="686.4" y="379.8" width="3.1" height="3.7" fill="#888888" stroke="#575757" stroke-width="1"/><rect x="692.4" y="377.4" width="4.2" height="6.0" fill="#808080" stroke="#575757" stroke-width="1"/><rect x="680.3" y="386.9" width="4.3" height="3.2" fill="#888888" stroke="#575757" stroke-width="1"/><rect x="679.9" y="393.6" width="5.3" height="2.5" fill="#848484" stroke="#575757" stroke-width="1"/><rect x="688.6" y="386.8" width="7.6" height="8.8" fill="#8a8a8a" stroke="#575757" stroke-width="1"/><rect x="628.6" y="399.5" width="8.5" height="12.1" fill="#7b7b7b" stroke="#575757" stroke-width="1"/><rect x="640.8" y="399.4" width="4.5" height="4.8" fill="#868686" stroke="#575757" stroke-width="1"/><rect x="641.3" y="408.3" width="3.5" height="2.9" fill="#8a8a8a" stroke="#575757" stroke-width="1"/><rect x="628.0" y="414.7" width="8.6" height="6.4" fill="#7e7e7e" stroke="#575757" stroke-width="1"/><rect x="640.5" y="416.0" width="4.0" height="3.8" fill="#888888" stroke="#575757" stroke-width="1"/><rect x="648.9" y="399.4" width="8.7" height="2.0" fill="#848484" stroke="#575757" stroke-width="1"/><rect x="648.6" y="404.6" width="9.3" height="6.1" fill="#838383" stroke="#575757" stroke-width="1"/><rect x="649.6" y="414.8" width="1.0" height="5.2" fill="#848484" stroke="#575757" stroke-width="1"/><rect x="653.6" y="413.5" width="4.5" height="7.7" fill="#818181" stroke="#575757" stroke-width="1"/><rect x="644.6" y="423.7" width="4.8" height="6.1" fill="#8a8a8a" stroke="#575757" stroke-width="1"/><rect x="652.7" y="424.5" width="4.6" height="4.5" fill="#8a8a8a" stroke="#575757" stroke-width="1"/><rect x="651.3" y="432.7" width="6.4" height="6.6" fill="#838383" stroke="#575757" stroke-width="1"/><rect x="661.7" y="399.9" width="9.7" height="8.1" fill="#818181" stroke="#575757" stroke-width="1"/><rect x="661.3" y="412.2" width="4.3" height="2.3" fill="#888888" stroke="#575757" stroke-width="1"/><rect x="669.8" y="412.5" width="1.7" height="1.8" fill="#848484" stroke="#575757" stroke-width="1"/><rect x="660.8" y="417.8" width="11.6" height="5.6" fill="#888888" stroke="#575757" stroke-width="1"/><rect x="675.2" y="399.1" width="8.6" height="9.7" fill="#818181" stroke="#575757" stroke-width="1"/><rect x="687.8" y="400.1" width="7.7" height="7.7" fill="#868686" stroke="#575757" stroke-width="1"/><rect x="675.1" y="411.7" width="6.7" height="11.6" fill="#7b7b7b" stroke="#575757" stroke-width="1"/><rect x="684.8" y="411.8" width="11.7" height="11.5" fill="#868686" stroke="#575757" stroke-width="1"/><rect x="660.6" y="426.1" width="6.3" height="4.5" fill="#868686" stroke="#575757" stroke-width="1"/><rect x="660.8" y="433.2" width="6.0" height="6.4" fill="#868686" stroke="#575757" stroke-width="1"/><rect x="670.5" y="427.1" width="9.4" height="11.6" fill="#818181" stroke="#575757" stroke-width="1"/><rect x="683.5" y="426.1" width="13.3" height="7.2" fill="#818181" stroke="#575757" stroke-width="1"/><rect x="684.4" y="436.7" width="11.5" height="2.1" fill="#8a8a8a" stroke="#575757" stroke-width="1"/><rect x="668.2" y="442.3" width="5.4" height="12.3" fill="#8a8a8a" stroke="#575757" stroke-width="1"/><rect x="676.2" y="442.3" width="5.3" height="5.0" fill="#7e7e7e" stroke="#575757" stroke-width="1"/><rect x="684.4" y="442.7" width="12.0" height="7.4" fill="#7e7e7e" stroke="#575757" stroke-width="1"/><rect x="699.6" y="374.5" width="6.5" height="5.8" fill="#8a8a8a" stroke="#575757" stroke-width="1"/><rect x="699.7" y="383.5" width="6.3" height="4.1" fill="#868686" stroke="#575757" stroke-width="1"/><rect x="709.1" y="381.6" width="6.5" height="6.2" fill="#8a8a8a" stroke="#575757" stroke-width="1"/><rect x="718.7" y="381.7" width="4.1" height="5.8" fill="#7b7b7b" stroke="#575757" stroke-width="1"/><rect x="699.5" y="390.7" width="10.6" height="6.0" fill="#868686" stroke="#575757" stroke-width="1"/><rect x="699.5" y="399.6" width="4.4" height="7.4" fill="#888888" stroke="#575757" stroke-width="1"/><rect x="706.7" y="399.5" width="3.5" height="7.5" fill="#888888" stroke="#575757" stroke-width="1"/><rect x="713.2" y="390.9" width="9.6" height="6.7" fill="#7e7e7e" stroke="#575757" stroke-width="1"/><rect x="713.1" y="401.0" width="9.8" height="5.8" fill="#808080" stroke="#575757" stroke-width="1"/><rect x="726.3" y="385.0" width="15.7" height="7.7" fill="#7e7e7e" stroke="#575757" stroke-width="1"/><rect x="727.1" y="397.1" width="4.0" height="1.0" fill="#818181" stroke="#575757" stroke-width="1"/><rect x="726.6" y="402.2" width="4.9" height="4.1" fill="#818181" stroke="#575757" stroke-width="1"/><rect x="735.9" y="396.9" width="5.6" height="3.5" fill="#8a8a8a" stroke="#575757" stroke-width="1"/><rect x="735.8" y="405.0" width="6.0" height="1.2" fill="#888888" stroke="#575757" stroke-width="1"/><rect x="745.9" y="397.3" width="7.3" height="9.0" fill="#868686" stroke="#575757" stroke-width="1"/><rect x="699.8" y="410.1" width="6.3" height="7.6" fill="#808080" stroke="#575757" stroke-width="1"/><rect x="699.3" y="420.6" width="7.3" height="6.1" fill="#868686" stroke="#575757" stroke-width="1"/><rect x="709.9" y="410.4" width="7.7" height="4.8" fill="#8a8a8a" stroke="#575757" stroke-width="1"/><rect x="709.6" y="419.0" width="8.3" height="7.2" fill="#818181" stroke="#575757" stroke-width="1"/><rect x="722.2" y="411.0" width="1.9" height="5.9" fill="#818181" stroke="#575757" stroke-width="1"/><rect x="729.2" y="411.0" width="6.1" height="5.8" fill="#838383" stroke="#575757" stroke-width="1"/><rect x="722.1" y="421.8" width="3.6" height="3.6" fill="#7e7e7e" stroke="#575757" stroke-width="1"/><rect x="729.7" y="420.9" width="6.6" height="5.4" fill="#838383" stroke="#575757" stroke-width="1"/><rect x="700.6" y="430.5" width="9.3" height="6.3" fill="#868686" stroke="#575757" stroke-width="1"/><rect x="699.4" y="440.7" width="11.7" height="8.9" fill="#868686" stroke="#575757" stroke-width="1"/><rect x="714.8" y="430.3" width="2.7" height="4.0" fill="#7b7b7b" stroke="#575757" stroke-width="1"/><rect x="722.3" y="430.5" width="1.0" height="3.6" fill="#7e7e7e" stroke="#575757" stroke-width="1"/><rect x="714.7" y="438.9" width="6.9" height="3.6" fill="#888888" stroke="#575757" stroke-width="1"/><rect x="713.8" y="446.0" width="8.8" height="3.6" fill="#7e7e7e" stroke="#575757" stroke-width="1"/><rect x="725.4" y="429.5" width="3.1" height="6.9" fill="#8a8a8a" stroke="#575757" stroke-width="1"/><rect x="731.3" y="429.2" width="5.4" height="7.5" fill="#848484" stroke="#575757" stroke-width="1"/><rect x="726.4" y="440.4" width="9.0" height="8.0" fill="#888888" stroke="#575757" stroke-width="1"/><rect x="740.2" y="410.7" width="4.9" height="6.8" fill="#848484" stroke="#575757" stroke-width="1"/><rect x="749.9" y="410.9" width="1.9" height="6.3" fill="#818181" stroke="#575757" stroke-width="1"/><rect x="739.8" y="421.7" width="4.4" height="10.2" fill="#7b7b7b" stroke="#575757" stroke-width="1"/><rect x="748.6" y="422.3" width="3.2" height="9.0" fill="#888888" stroke="#575757" stroke-width="1"/><rect x="740.4" y="436.3" width="6.2" height="3.3" fill="#868686" stroke="#575757" stroke-width="1"/><rect x="739.7" y="443.9" width="7.6" height="5.2" fill="#868686" stroke="#575757" stroke-width="1"/><rect x="751.4" y="436.1" width="3.0" height="3.2" fill="#7e7e7e" stroke="#575757" stroke-width="1"/><rect x="699.6" y="452.5" width="5.4" height="4.7" fill="#818181" stroke="#575757" stroke-width="1"/><rect x="708.9" y="453.3" width="8.3" height="5.1" fill="#848484" stroke="#575757" stroke-width="1"/><rect x="722.0" y="453.4" width="2.9" height="5.0" fill="#7e7e7e" stroke="#575757" stroke-width="1"/><rect x="729.9" y="453.4" width="1.0" height="5.1" fill="#838383" stroke="#575757" stroke-width="1"/><rect x="734.3" y="452.4" width="7.3" height="8.3" fill="#7b7b7b" stroke="#575757" stroke-width="1"/></g></g><clipPath id="z18"><polygon points="585,414 612,410 616,445 590,450"/></clipPath><g clip-path="url(#z18)"><polygon points="585,414 612,410 616,445 590,450" fill="#6c6c6c"/><g transform="rotate(-40 600.8 429.8)"><rect x="586.3" y="411.0" width="7.1" height="6.2" fill="#888888" stroke="#575757" stroke-width="1"/><rect x="588.7" y="420.3" width="4.0" height="4.2" fill="#868686" stroke="#575757" stroke-width="1"/><rect x="583.1" y="428.5" width="3.0" height="4.5" fill="#7e7e7e" stroke="#575757" stroke-width="1"/><rect x="589.9" y="428.0" width="3.1" height="5.6" fill="#848484" stroke="#575757" stroke-width="1"/><rect x="577.6" y="437.3" width="3.1" height="3.8" fill="#8a8a8a" stroke="#575757" stroke-width="1"/><rect x="584.6" y="436.9" width="8.3" height="7.0" fill="#838383" stroke="#575757" stroke-width="1"/><rect x="584.1" y="446.8" width="9.3" height="3.5" fill="#848484" stroke="#575757" stroke-width="1"/><rect x="596.9" y="408.4" width="8.1" height="2.7" fill="#888888" stroke="#575757" stroke-width="1"/><rect x="609.0" y="408.6" width="1.0" height="3.2" fill="#868686" stroke="#575757" stroke-width="1"/><rect x="597.1" y="415.9" width="8.9" height="8.7" fill="#818181" stroke="#575757" stroke-width="1"/><rect x="610.7" y="415.6" width="5.2" height="1.0" fill="#818181" stroke="#575757" stroke-width="1"/><rect x="610.8" y="420.8" width="4.9" height="4.0" fill="#818181" stroke="#575757" stroke-width="1"/><rect x="620.5" y="421.1" width="1.3" height="3.4" fill="#8a8a8a" stroke="#575757" stroke-width="1"/><rect x="596.1" y="428.6" width="11.5" height="11.3" fill="#7e7e7e" stroke="#575757" stroke-width="1"/><rect x="610.6" y="428.6" width="6.2" height="2.8" fill="#818181" stroke="#575757" stroke-width="1"/><rect x="611.1" y="434.9" width="5.2" height="4.4" fill="#8a8a8a" stroke="#575757" stroke-width="1"/><rect x="596.0" y="442.7" width="6.9" height="9.2" fill="#7e7e7e" stroke="#575757" stroke-width="1"/><rect x="606.3" y="443.4" width="10.0" height="4.5" fill="#848484" stroke="#575757" stroke-width="1"/><rect x="620.2" y="429.0" width="1.3" height="3.8" fill="#8a8a8a" stroke="#575757" stroke-width="1"/></g></g><clipPath id="z19"><polygon points="546,470 600,465 640,462 700,468 724,493 745,538 740,579 714,594 600,592 572,552 552,500"/></clipPath><g clip-path="url(#z19)"><polygon points="546,470 600,465 640,462 700,468 724,493 745,538 740,579 714,594 600,592 572,552 552,500" fill="#6c6c6c"/><g transform="rotate(32 648.5 519.4)"><rect x="538.1" y="519.6" width="12.9" height="7.3" fill="#868686" stroke="#575757" stroke-width="1"/><rect x="592.3" y="469.6" width="7.9" height="14.5" fill="#818181" stroke="#575757" stroke-width="1"/><rect x="555.3" y="500.8" width="6.8" height="9.2" fill="#838383" stroke="#575757" stroke-width="1"/><rect x="566.0" y="500.9" width="8.1" height="8.8" fill="#7e7e7e" stroke="#575757" stroke-width="1"/><rect x="556.0" y="514.2" width="17.7" height="12.7" fill="#7b7b7b" stroke="#575757" stroke-width="1"/><rect x="578.3" y="488.2" width="8.6" height="11.7" fill="#7e7e7e" stroke="#575757" stroke-width="1"/><rect x="591.3" y="488.2" width="8.6" height="11.7" fill="#808080" stroke="#575757" stroke-width="1"/><rect x="578.4" y="504.3" width="5.9" height="6.8" fill="#7e7e7e" stroke="#575757" stroke-width="1"/><rect x="589.0" y="504.5" width="10.7" height="6.4" fill="#7e7e7e" stroke="#575757" stroke-width="1"/><rect x="578.4" y="515.6" width="6.6" height="3.0" fill="#7b7b7b" stroke="#575757" stroke-width="1"/><rect x="578.7" y="523.3" width="5.9" height="3.6" fill="#848484" stroke="#575757" stroke-width="1"/><rect x="588.5" y="514.6" width="12.3" height="13.6" fill="#8a8a8a" stroke="#575757" stroke-width="1"/><rect x="649.4" y="450.3" width="8.8" height="2.6" fill="#7e7e7e" stroke="#575757" stroke-width="1"/><rect x="662.0" y="438.7" width="7.4" height="13.6" fill="#838383" stroke="#575757" stroke-width="1"/><rect x="672.9" y="444.6" width="6.8" height="8.7" fill="#838383" stroke="#575757" stroke-width="1"/><rect x="604.1" y="469.6" width="16.5" height="10.8" fill="#848484" stroke="#575757" stroke-width="1"/><rect x="624.1" y="456.0" width="14.0" height="12.0" fill="#868686" stroke="#575757" stroke-width="1"/><rect x="624.6" y="471.4" width="13.1" height="9.1" fill="#888888" stroke="#575757" stroke-width="1"/><rect x="641.9" y="456.9" width="7.9" height="3.6" fill="#848484" stroke="#575757" stroke-width="1"/><rect x="640.8" y="464.0" width="10.0" height="6.5" fill="#848484" stroke="#575757" stroke-width="1"/><rect x="641.0" y="473.1" width="9.7" height="7.9" fill="#7e7e7e" stroke="#575757" stroke-width="1"/><rect x="604.2" y="484.6" width="18.0" height="14.0" fill="#848484" stroke="#575757" stroke-width="1"/><rect x="604.2" y="503.0" width="5.3" height="6.1" fill="#8a8a8a" stroke="#575757" stroke-width="1"/><rect x="613.4" y="502.4" width="9.3" height="7.1" fill="#8a8a8a" stroke="#575757" stroke-width="1"/><rect x="603.9" y="513.0" width="8.5" height="5.5" fill="#838383" stroke="#575757" stroke-width="1"/><rect x="604.3" y="522.6" width="7.7" height="4.7" fill="#848484" stroke="#575757" stroke-width="1"/><rect x="616.2" y="513.2" width="6.2" height="14.3" fill="#888888" stroke="#575757" stroke-width="1"/><rect x="626.7" y="484.8" width="8.8" height="12.8" fill="#8a8a8a" stroke="#575757" stroke-width="1"/><rect x="639.9" y="484.5" width="10.0" height="13.3" fill="#848484" stroke="#575757" stroke-width="1"/><rect x="626.5" y="502.0" width="1.6" height="6.8" fill="#7b7b7b" stroke="#575757" stroke-width="1"/><rect x="631.5" y="501.3" width="7.6" height="8.3" fill="#888888" stroke="#575757" stroke-width="1"/><rect x="642.5" y="502.1" width="7.4" height="6.7" fill="#818181" stroke="#575757" stroke-width="1"/><rect x="625.8" y="512.3" width="8.7" height="15.8" fill="#868686" stroke="#575757" stroke-width="1"/><rect x="637.4" y="512.5" width="13.1" height="15.4" fill="#7b7b7b" stroke="#575757" stroke-width="1"/><rect x="654.0" y="456.5" width="11.9" height="9.2" fill="#848484" stroke="#575757" stroke-width="1"/><rect x="669.7" y="456.4" width="3.5" height="9.3" fill="#818181" stroke="#575757" stroke-width="1"/><rect x="677.3" y="456.8" width="1.4" height="8.7" fill="#8a8a8a" stroke="#575757" stroke-width="1"/><rect x="654.2" y="469.8" width="10.9" height="11.7" fill="#808080" stroke="#575757" stroke-width="1"/><rect x="668.8" y="469.3" width="10.5" height="12.8" fill="#8a8a8a" stroke="#575757" stroke-width="1"/><rect x="654.0" y="485.6" width="9.1" height="12.2" fill="#7b7b7b" stroke="#575757" stroke-width="1"/><rect x="653.4" y="501.0" width="10.3" height="7.1" fill="#888888" stroke="#575757" stroke-width="1"/><rect x="667.0" y="485.8" width="11.8" height="11.9" fill="#838383" stroke="#575757" stroke-width="1"/><rect x="666.6" y="501.4" width="12.8" height="6.4" fill="#848484" stroke="#575757" stroke-width="1"/><rect x="654.0" y="511.3" width="7.6" height="7.4" fill="#888888" stroke="#575757" stroke-width="1"/><rect x="653.8" y="522.4" width="8.1" height="5.4" fill="#8a8a8a" stroke="#575757" stroke-width="1"/><rect x="664.8" y="510.8" width="14.8" height="17.3" fill="#8a8a8a" stroke="#575757" stroke-width="1"/><rect x="525.3" y="531.7" width="15.2" height="10.8" fill="#8a8a8a" stroke="#575757" stroke-width="1"/><rect x="544.4" y="531.1" width="15.2" height="10.1" fill="#7e7e7e" stroke="#575757" stroke-width="1"/><rect x="544.4" y="544.6" width="7.0" height="10.3" fill="#7b7b7b" stroke="#575757" stroke-width="1"/><rect x="554.6" y="544.6" width="5.0" height="10.3" fill="#888888" stroke="#575757" stroke-width="1"/><rect x="552.0" y="558.2" width="7.6" height="10.6" fill="#848484" stroke="#575757" stroke-width="1"/><rect x="562.7" y="530.9" width="6.7" height="9.5" fill="#888888" stroke="#575757" stroke-width="1"/><rect x="563.7" y="544.3" width="4.7" height="4.7" fill="#838383" stroke="#575757" stroke-width="1"/><rect x="572.7" y="531.3" width="11.5" height="5.0" fill="#7e7e7e" stroke="#575757" stroke-width="1"/><rect x="572.3" y="539.7" width="12.2" height="10.3" fill="#888888" stroke="#575757" stroke-width="1"/><rect x="563.0" y="553.2" width="21.3" height="9.8" fill="#888888" stroke="#575757" stroke-width="1"/><rect x="563.8" y="567.3" width="7.3" height="6.5" fill="#868686" stroke="#575757" stroke-width="1"/><rect x="575.3" y="566.4" width="9.2" height="8.4" fill="#848484" stroke="#575757" stroke-width="1"/><rect x="587.7" y="531.1" width="18.5" height="10.3" fill="#808080" stroke="#575757" stroke-width="1"/><rect x="587.8" y="544.8" width="18.4" height="7.7" fill="#848484" stroke="#575757" stroke-width="1"/><rect x="587.8" y="555.9" width="18.2" height="16.3" fill="#7b7b7b" stroke="#575757" stroke-width="1"/><rect x="609.3" y="530.9" width="9.9" height="19.5" fill="#7b7b7b" stroke="#575757" stroke-width="1"/><rect x="622.5" y="531.2" width="11.6" height="19.0" fill="#888888" stroke="#575757" stroke-width="1"/><rect x="609.9" y="554.1" width="13.3" height="17.9" fill="#7b7b7b" stroke="#575757" stroke-width="1"/><rect x="627.8" y="554.4" width="5.5" height="17.1" fill="#868686" stroke="#575757" stroke-width="1"/><rect x="638.1" y="531.7" width="7.1" height="4.0" fill="#808080" stroke="#575757" stroke-width="1"/><rect x="638.2" y="540.3" width="6.9" height="3.3" fill="#848484" stroke="#575757" stroke-width="1"/><rect x="650.0" y="531.9" width="6.4" height="11.6" fill="#848484" stroke="#575757" stroke-width="1"/><rect x="637.1" y="547.2" width="8.1" height="12.4" fill="#818181" stroke="#575757" stroke-width="1"/><rect x="648.3" y="547.8" width="8.6" height="11.2" fill="#888888" stroke="#575757" stroke-width="1"/><rect x="637.4" y="562.5" width="19.7" height="10.0" fill="#838383" stroke="#575757" stroke-width="1"/><rect x="661.1" y="531.8" width="17.5" height="6.3" fill="#7e7e7e" stroke="#575757" stroke-width="1"/><rect x="660.6" y="542.3" width="6.9" height="10.9" fill="#848484" stroke="#575757" stroke-width="1"/><rect x="671.9" y="543.0" width="6.6" height="9.5" fill="#7e7e7e" stroke="#575757" stroke-width="1"/><rect x="660.5" y="556.8" width="8.4" height="15.6" fill="#838383" stroke="#575757" stroke-width="1"/><rect x="672.1" y="556.4" width="7.5" height="16.2" fill="#7e7e7e" stroke="#575757" stroke-width="1"/><rect x="587.3" y="575.3" width="15.5" height="13.1" fill="#848484" stroke="#575757" stroke-width="1"/><rect x="606.0" y="575.9" width="6.9" height="10.8" fill="#7e7e7e" stroke="#575757" stroke-width="1"/><rect x="605.9" y="590.4" width="7.2" height="9.6" fill="#818181" stroke="#575757" stroke-width="1"/><rect x="616.2" y="575.4" width="16.2" height="8.8" fill="#888888" stroke="#575757" stroke-width="1"/><rect x="617.0" y="587.8" width="14.7" height="11.8" fill="#7b7b7b" stroke="#575757" stroke-width="1"/><rect x="636.0" y="576.3" width="8.6" height="12.3" fill="#848484" stroke="#575757" stroke-width="1"/><rect x="649.0" y="576.2" width="7.7" height="12.4" fill="#868686" stroke="#575757" stroke-width="1"/><rect x="635.7" y="592.7" width="8.1" height="8.4" fill="#848484" stroke="#575757" stroke-width="1"/><rect x="647.3" y="592.3" width="10.0" height="9.1" fill="#808080" stroke="#575757" stroke-width="1"/><rect x="660.4" y="575.6" width="19.1" height="12.3" fill="#818181" stroke="#575757" stroke-width="1"/><rect x="660.7" y="591.3" width="18.3" height="9.8" fill="#8a8a8a" stroke="#575757" stroke-width="1"/><rect x="635.8" y="604.9" width="10.2" height="10.0" fill="#888888" stroke="#575757" stroke-width="1"/><rect x="650.3" y="605.3" width="4.1" height="9.2" fill="#808080" stroke="#575757" stroke-width="1"/><rect x="683.1" y="453.9" width="10.8" height="3.7" fill="#808080" stroke="#575757" stroke-width="1"/><rect x="682.8" y="461.6" width="11.3" height="7.0" fill="#888888" stroke="#575757" stroke-width="1"/><rect x="697.4" y="453.2" width="8.0" height="16.0" fill="#838383" stroke="#575757" stroke-width="1"/><rect x="708.5" y="460.5" width="12.3" height="8.3" fill="#8a8a8a" stroke="#575757" stroke-width="1"/><rect x="683.5" y="473.1" width="13.6" height="14.9" fill="#7e7e7e" stroke="#575757" stroke-width="1"/><rect x="701.6" y="472.4" width="7.4" height="8.7" fill="#868686" stroke="#575757" stroke-width="1"/><rect x="702.0" y="485.4" width="6.6" height="2.7" fill="#868686" stroke="#575757" stroke-width="1"/><rect x="712.2" y="471.7" width="9.0" height="17.5" fill="#848484" stroke="#575757" stroke-width="1"/><rect x="724.2" y="468.9" width="18.5" height="19.7" fill="#808080" stroke="#575757" stroke-width="1"/><rect x="682.9" y="492.5" width="17.0" height="10.5" fill="#848484" stroke="#575757" stroke-width="1"/><rect x="682.2" y="506.2" width="10.2" height="8.5" fill="#888888" stroke="#575757" stroke-width="1"/><rect x="696.3" y="507.5" width="3.0" height="5.9" fill="#868686" stroke="#575757" stroke-width="1"/><rect x="682.3" y="517.3" width="18.2" height="17.2" fill="#848484" stroke="#575757" stroke-width="1"/><rect x="703.6" y="492.3" width="12.5" height="12.2" fill="#808080" stroke="#575757" stroke-width="1"/><rect x="703.5" y="507.8" width="12.7" height="9.6" fill="#8a8a8a" stroke="#575757" stroke-width="1"/><rect x="720.0" y="492.7" width="9.1" height="5.8" fill="#838383" stroke="#575757" stroke-width="1"/><rect x="719.3" y="502.1" width="4.0" height="3.5" fill="#7b7b7b" stroke="#575757" stroke-width="1"/><rect x="726.2" y="502.1" width="3.7" height="3.5" fill="#838383" stroke="#575757" stroke-width="1"/><rect x="719.8" y="509.0" width="9.7" height="8.2" fill="#7e7e7e" stroke="#575757" stroke-width="1"/><rect x="703.3" y="520.6" width="8.6" height="13.8" fill="#7b7b7b" stroke="#575757" stroke-width="1"/><rect x="715.3" y="521.1" width="3.4" height="2.6" fill="#838383" stroke="#575757" stroke-width="1"/><rect x="714.6" y="526.9" width="4.8" height="7.7" fill="#7b7b7b" stroke="#575757" stroke-width="1"/><rect x="722.4" y="520.8" width="7.2" height="7.2" fill="#7e7e7e" stroke="#575757" stroke-width="1"/><rect x="722.3" y="531.2" width="7.5" height="3.0" fill="#868686" stroke="#575757" stroke-width="1"/><rect x="683.5" y="538.3" width="11.3" height="6.9" fill="#8a8a8a" stroke="#575757" stroke-width="1"/><rect x="682.5" y="549.3" width="6.2" height="8.6" fill="#838383" stroke="#575757" stroke-width="1"/><rect x="692.6" y="550.0" width="2.4" height="7.1" fill="#848484" stroke="#575757" stroke-width="1"/><rect x="699.1" y="537.7" width="9.5" height="9.9" fill="#808080" stroke="#575757" stroke-width="1"/><rect x="699.0" y="551.1" width="9.6" height="6.5" fill="#8a8a8a" stroke="#575757" stroke-width="1"/><rect x="682.3" y="560.7" width="14.6" height="15.5" fill="#7b7b7b" stroke="#575757" stroke-width="1"/><rect x="700.7" y="561.9" width="7.2" height="13.1" fill="#8a8a8a" stroke="#575757" stroke-width="1"/><rect x="713.0" y="538.4" width="15.7" height="15.2" fill="#818181" stroke="#575757" stroke-width="1"/><rect x="711.9" y="557.7" width="9.4" height="7.1" fill="#848484" stroke="#575757" stroke-width="1"/><rect x="725.2" y="558.7" width="3.7" height="5.1" fill="#838383" stroke="#575757" stroke-width="1"/><rect x="712.7" y="568.6" width="16.3" height="6.7" fill="#8a8a8a" stroke="#575757" stroke-width="1"/><rect x="733.0" y="492.1" width="14.7" height="15.9" fill="#818181" stroke="#575757" stroke-width="1"/><rect x="733.9" y="512.1" width="3.1" height="4.9" fill="#818181" stroke="#575757" stroke-width="1"/><rect x="733.8" y="521.9" width="3.2" height="1.6" fill="#808080" stroke="#575757" stroke-width="1"/><rect x="741.9" y="512.1" width="4.9" height="11.4" fill="#818181" stroke="#575757" stroke-width="1"/><rect x="751.6" y="502.5" width="6.8" height="7.1" fill="#848484" stroke="#575757" stroke-width="1"/><rect x="751.9" y="514.4" width="5.3" height="9.0" fill="#8a8a8a" stroke="#575757" stroke-width="1"/><rect x="733.2" y="527.8" width="18.7" height="8.9" fill="#808080" stroke="#575757" stroke-width="1"/><rect x="733.2" y="540.4" width="9.5" height="6.6" fill="#838383" stroke="#575757" stroke-width="1"/><rect x="733.1" y="550.5" width="9.8" height="5.1" fill="#7e7e7e" stroke="#575757" stroke-width="1"/><rect x="745.7" y="539.8" width="6.8" height="16.3" fill="#7e7e7e" stroke="#575757" stroke-width="1"/><rect x="755.8" y="528.0" width="16.0" height="12.5" fill="#888888" stroke="#575757" stroke-width="1"/><rect x="682.8" y="579.4" width="8.8" height="13.3" fill="#7b7b7b" stroke="#575757" stroke-width="1"/><rect x="695.9" y="579.9" width="2.9" height="12.4" fill="#808080" stroke="#575757" stroke-width="1"/></g></g><polygon points="523.6,205 542,193.8 552.3,213.8 533,225" fill="#858585" stroke="#5e5e5e" stroke-width="1"/><polygon points="420.3,144.3 444.7,123.5 467.2,146 443,167" fill="#868686" stroke="#5e5e5e" stroke-width="1"/><polygon points="469.8,139 476,135.7 491.5,154.8 486.3,160" fill="#858585" stroke="#5e5e5e" stroke-width="1"/><polygon points="627.7,184 671,144 679.8,147.8 681.5,167 638,198" fill="#727272" stroke="#5e5e5e" stroke-width="1"/><polygon points="652,214 699,181 714.5,184 716,201.6 667.6,233" fill="#727272" stroke="#5e5e5e" stroke-width="1"/><polygon points="653.7,160 676,155 678,162 656,167" fill="#868686" stroke="#5e5e5e" stroke-width="1"/><polygon points="227,162 246,142 270,150 270,175 248,178" fill="#7a7a79" stroke="#606060" stroke-width="1"/><polygon points="177,500 215,507 235,507 238,545 236,577 200,571" fill="#7a7a79" stroke="#606060" stroke-width="1"/><polygon points="478,262 506,318 564,296 600,278 603,262 590,240 560,232 520,255" fill="#7a7a79" stroke="#606060" stroke-width="1"/><polygon points="628,552 650,560 665,580 674,594 615,594 622,570" fill="#7a7a79" stroke="#606060" stroke-width="1"/><polygon points="668.4,524.7 704.9,517.8 708.3,531.6 673.6,542" fill="#7a7a79" stroke="#606060" stroke-width="1"/><path d="M98 110 L102 145 L106 178 L108.5 206 L111 237 L113.5 282 L121 305 L129 336 L139 372 L150 410 L163 450 L176 495 L190 540 L199 573" fill="none" stroke="#5a5a5a" stroke-width="4.2" stroke-linejoin="round"/><path d="M98 110 L168 98" fill="none" stroke="#5a5a5a" stroke-width="3.6" stroke-linejoin="round"/><path d="M250 100 L208 142 L175 163 L144 174 L103 177" fill="none" stroke="#5a5a5a" stroke-width="7.0" stroke-linejoin="round"/><path d="M87 206 L111 205.5 L144 196 L182 180.5 L210 168 L223 158 L243 137 L264 117 L271 110.5 L284 105.5 L315 101.6 L343 103 L366 108 L381 114.5" fill="none" stroke="#5a5a5a" stroke-width="4.4" stroke-linejoin="round"/><path d="M381 114.5 L391 127 L401 142 L416 160 L429 175.5 L447 193 L470 214 L497 238 L520 258" fill="none" stroke="#5a5a5a" stroke-width="7.0" stroke-linejoin="round"/><path d="M103 177 L215 175 L270 178 L316 176 L352 172 L437 168" fill="none" stroke="#5a5a5a" stroke-width="4.2" stroke-linejoin="round"/><path d="M110 205 L160 206 L217 206 L276 204 L316 203 L355 202 L442 200" fill="none" stroke="#5a5a5a" stroke-width="4.2" stroke-linejoin="round"/><path d="M111 226 L177 225 L220 225 L279 224 L320 224" fill="none" stroke="#5a5a5a" stroke-width="4.2" stroke-linejoin="round"/><path d="M178 246 L220 245 L279 242 L322 243 L357 246 L410 250 L470 258" fill="none" stroke="#5a5a5a" stroke-width="4.2" stroke-linejoin="round"/><path d="M281 262 L322 260 L360 258 L412 258 L500 255" fill="none" stroke="#5a5a5a" stroke-width="4.2" stroke-linejoin="round"/><path d="M98 286 L160 288 L220 288 L284 278 L345 270 L375 268 L434 258 L475 259 L500 255.5 L536 240 L577 215 L612 192 L638 169 L663 143.5 L699 109" fill="none" stroke="#5a5a5a" stroke-width="7.0" stroke-linejoin="round"/><path d="M222 320 L285 317 L326 316 L365 313 L412 308 L470 300 L498 296" fill="none" stroke="#5a5a5a" stroke-width="4.2" stroke-linejoin="round"/><path d="M120 337 L160 333 L222 330 L286 327 L327 326 L416 318 L500 312" fill="none" stroke="#5a5a5a" stroke-width="4.2" stroke-linejoin="round"/><path d="M213 168 L217 206 L220 245 L221 288 L222 330 L226 354" fill="none" stroke="#5a5a5a" stroke-width="4.2" stroke-linejoin="round"/><path d="M270 112 L273 150 L276 204 L280 262 L284 300 L287 354" fill="none" stroke="#5a5a5a" stroke-width="4.2" stroke-linejoin="round"/><path d="M315 176 L318 225 L322 262 L325 320 L327 354" fill="none" stroke="#5a5a5a" stroke-width="4.2" stroke-linejoin="round"/><path d="M345 103 L348 140 L352 172 L355 202 L358 246 L360 258" fill="none" stroke="#5a5a5a" stroke-width="4.2" stroke-linejoin="round"/><path d="M410 250 L413 300 L417 354" fill="none" stroke="#5a5a5a" stroke-width="4.2" stroke-linejoin="round"/><path d="M437 168 L442 200 L453 228 L467 257 L483 285 L498 313 L510 340" fill="none" stroke="#5a5a5a" stroke-width="4.2" stroke-linejoin="round"/><path d="M177 225 L179 250 L180 288" fill="none" stroke="#5a5a5a" stroke-width="4.0" stroke-linejoin="round"/><path d="M467 110 L500 124 L528 136" fill="none" stroke="#5a5a5a" stroke-width="4.2" stroke-linejoin="round"/><path d="M529.7 103 L536.7 146" fill="none" stroke="#5a5a5a" stroke-width="4.2" stroke-linejoin="round"/><path d="M491.5 175.6 L543.6 147.8 L587 127 L616.5 111.4" fill="none" stroke="#5a5a5a" stroke-width="4.2" stroke-linejoin="round"/><path d="M491.5 175.6 L502 181 L521 215.5 L535 233" fill="none" stroke="#5a5a5a" stroke-width="4.2" stroke-linejoin="round"/><path d="M472 188 L505 248" fill="none" stroke="#5a5a5a" stroke-width="3.6" stroke-linejoin="round"/><path d="M584 138 L600 158 L617 176 L636 200 L655 227 L668 245 L690 268 L707 288 L720 302 L734 314" fill="none" stroke="#5a5a5a" stroke-width="4.2" stroke-linejoin="round"/><path d="M576 128 L590 150 L603 167 L618 181" fill="none" stroke="#5a5a5a" stroke-width="4.2" stroke-linejoin="round"/><path d="M577 215 L590 235 L600 255 L604 269 L584 283 L555 296 L520 312 L500 322 L470 332 L440 340" fill="none" stroke="#5a5a5a" stroke-width="4.2" stroke-linejoin="round"/><path d="M604 269 L623 263 L650 246 L668 245" fill="none" stroke="#5a5a5a" stroke-width="4.2" stroke-linejoin="round"/><path d="M707 288 L690 310 L678 324 L660 345 L640 368 L620 392 L604 409 L580 436 L560 455 L543 469 L520 476 L490 480 L440 484" fill="none" stroke="#5a5a5a" stroke-width="4.2" stroke-linejoin="round"/><path d="M699 209 L724 252" fill="none" stroke="#5a5a5a" stroke-width="3.6" stroke-linejoin="round"/><path d="M712.8 104.4 L737 147.8 L723 163.4" fill="none" stroke="#5a5a5a" stroke-width="3.6" stroke-linejoin="round"/><path d="M89 340 L95 370 L102 386 L112 426 L87 429 L87 472 L132 472 L132 513 L176 498" fill="none" stroke="#5a5a5a" stroke-width="4.2" stroke-linejoin="round"/><path d="M104 386 L150 372 L198 362 L226 357 L290 354 L330 352 L372 350 L420 352 L440 352" fill="none" stroke="#5a5a5a" stroke-width="4.2" stroke-linejoin="round"/><path d="M112 426 L160 415 L200 408 L232 404 L295 400 L336 398 L375 396 L440 392" fill="none" stroke="#5a5a5a" stroke-width="4.2" stroke-linejoin="round"/><path d="M132 455 L170 447 L232 440 L296 436 L338 435 L378 434 L440 430" fill="none" stroke="#5a5a5a" stroke-width="4.2" stroke-linejoin="round"/><path d="M160 472 L232 472 L297 472 L340 470 L380 468 L440 470" fill="none" stroke="#5a5a5a" stroke-width="4.2" stroke-linejoin="round"/><path d="M235 503 L296 502 L340 497 L356 492 L400 488 L440 486" fill="none" stroke="#5a5a5a" stroke-width="6.0" stroke-linejoin="round"/><path d="M135 512 L176 508 L215 505 L240 503" fill="none" stroke="#5a5a5a" stroke-width="4.2" stroke-linejoin="round"/><path d="M225 528 L300 527 L344 526 L384 524 L440 521" fill="none" stroke="#5a5a5a" stroke-width="4.2" stroke-linejoin="round"/><path d="M300 566 L344 563 L386 560 L440 560" fill="none" stroke="#5a5a5a" stroke-width="4.2" stroke-linejoin="round"/><path d="M226 357 L229 404 L233 440 L236 503 L239 545 L236 580" fill="none" stroke="#5a5a5a" stroke-width="4.2" stroke-linejoin="round"/><path d="M290 354 L294 400 L296 436 L298 472 L300 527 L302 566" fill="none" stroke="#5a5a5a" stroke-width="4.2" stroke-linejoin="round"/><path d="M330 352 L334 398 L338 435 L340 470 L343 526 L345 563 L346 585" fill="none" stroke="#5a5a5a" stroke-width="4.2" stroke-linejoin="round"/><path d="M372 350 L375 396 L378 434 L381 468 L384 524 L386 560" fill="none" stroke="#5a5a5a" stroke-width="4.2" stroke-linejoin="round"/><path d="M199 573 L234 579 L236 590" fill="none" stroke="#5a5a5a" stroke-width="4.2" stroke-linejoin="round"/><path d="M160 415 L170 447 L184 500" fill="none" stroke="#5a5a5a" stroke-width="3.8" stroke-linejoin="round"/><path d="M202 385.5 L290 380 L370 375 L440 371" fill="none" stroke="#5a5a5a" stroke-width="4.2" stroke-linejoin="round"/><path d="M191.5 330 L198.5 385.5 L202 434 L206 470" fill="none" stroke="#5a5a5a" stroke-width="4.2" stroke-linejoin="round"/><path d="M440 400 L470 410 L505 425 L530 447 L543 469" fill="none" stroke="#5a5a5a" stroke-width="4.2" stroke-linejoin="round"/><path d="M440 430 L480 440 L510 455 L543 469" fill="none" stroke="#5a5a5a" stroke-width="4.2" stroke-linejoin="round"/><path d="M543 469 L552 500 L560 530 L572 552 L590 575 L600 592" fill="none" stroke="#5a5a5a" stroke-width="4.2" stroke-linejoin="round"/><path d="M543 469 L535 500 L520 530 L505 555 L492 580" fill="none" stroke="#5a5a5a" stroke-width="4.2" stroke-linejoin="round"/><path d="M440 521 L470 518 L500 516 L520 530" fill="none" stroke="#5a5a5a" stroke-width="4.2" stroke-linejoin="round"/><path d="M440 560 L470 562 L492 580" fill="none" stroke="#5a5a5a" stroke-width="4.2" stroke-linejoin="round"/><path d="M560 530 L590 526 L624 524 L657 523 L680 505 L700 468 L720 455 L742 445" fill="none" stroke="#5a5a5a" stroke-width="4.2" stroke-linejoin="round"/><path d="M638 470 L668 470 L700 468" fill="none" stroke="#5a5a5a" stroke-width="4.2" stroke-linejoin="round"/><path d="M624 524 L640 545 L657 536 L690 560 L715 584" fill="none" stroke="#5a5a5a" stroke-width="4.2" stroke-linejoin="round"/><path d="M657 385 L679 402 L700 430 L720 455" fill="none" stroke="#5a5a5a" stroke-width="4.2" stroke-linejoin="round"/><path d="M650 375 L690 378 L725 385 L748 415 L742 460" fill="none" stroke="#5a5a5a" stroke-width="4.2" stroke-linejoin="round"/><path d="M600 592 L620 565 L646 541 L657 523" fill="none" stroke="#5a5a5a" stroke-width="4.2" stroke-linejoin="round"/><path d="M470 340 L468 361 L467 392 L466 416 L462 434" fill="none" stroke="#5a5a5a" stroke-width="4.2" stroke-linejoin="round"/><path d="M510 340 L517 386 L505 413" fill="none" stroke="#5a5a5a" stroke-width="4.2" stroke-linejoin="round"/><path d="M548 348 L546 370 L560 400 L580 432" fill="none" stroke="#5a5a5a" stroke-width="4.2" stroke-linejoin="round"/><path d="M98 110 L102 145 L106 178 L108.5 206 L111 237 L113.5 282 L121 305 L129 336 L139 372 L150 410 L163 450 L176 495 L190 540 L199 573" fill="none" stroke="#9c9c9c" stroke-width="0.55" stroke-dasharray="16 5"/><path d="M250 100 L208 142 L175 163 L144 174 L103 177" fill="none" stroke="#6c6c6c" stroke-width="3.5" stroke-linejoin="round"/><path d="M250 100 L208 142 L175 163 L144 174 L103 177" fill="none" stroke="#d0d0d0" stroke-width="0.8" stroke-dasharray="3 3"/><path d="M87 206 L111 205.5 L144 196 L182 180.5 L210 168 L223 158 L243 137 L264 117 L271 110.5 L284 105.5 L315 101.6 L343 103 L366 108 L381 114.5" fill="none" stroke="#9c9c9c" stroke-width="0.55" stroke-dasharray="16 5"/><path d="M381 114.5 L391 127 L401 142 L416 160 L429 175.5 L447 193 L470 214 L497 238 L520 258" fill="none" stroke="#6c6c6c" stroke-width="3.5" stroke-linejoin="round"/><path d="M381 114.5 L391 127 L401 142 L416 160 L429 175.5 L447 193 L470 214 L497 238 L520 258" fill="none" stroke="#d0d0d0" stroke-width="0.8" stroke-dasharray="3 3"/><path d="M103 177 L215 175 L270 178 L316 176 L352 172 L437 168" fill="none" stroke="#9c9c9c" stroke-width="0.55" stroke-dasharray="16 5"/><path d="M110 205 L160 206 L217 206 L276 204 L316 203 L355 202 L442 200" fill="none" stroke="#9c9c9c" stroke-width="0.55" stroke-dasharray="16 5"/><path d="M111 226 L177 225 L220 225 L279 224 L320 224" fill="none" stroke="#9c9c9c" stroke-width="0.55" stroke-dasharray="16 5"/><path d="M178 246 L220 245 L279 242 L322 243 L357 246 L410 250 L470 258" fill="none" stroke="#9c9c9c" stroke-width="0.55" stroke-dasharray="16 5"/><path d="M281 262 L322 260 L360 258 L412 258 L500 255" fill="none" stroke="#9c9c9c" stroke-width="0.55" stroke-dasharray="16 5"/><path d="M98 286 L160 288 L220 288 L284 278 L345 270 L375 268 L434 258 L475 259 L500 255.5 L536 240 L577 215 L612 192 L638 169 L663 143.5 L699 109" fill="none" stroke="#6c6c6c" stroke-width="3.5" stroke-linejoin="round"/><path d="M98 286 L160 288 L220 288 L284 278 L345 270 L375 268 L434 258 L475 259 L500 255.5 L536 240 L577 215 L612 192 L638 169 L663 143.5 L699 109" fill="none" stroke="#d0d0d0" stroke-width="0.8" stroke-dasharray="3 3"/><path d="M222 320 L285 317 L326 316 L365 313 L412 308 L470 300 L498 296" fill="none" stroke="#9c9c9c" stroke-width="0.55" stroke-dasharray="16 5"/><path d="M120 337 L160 333 L222 330 L286 327 L327 326 L416 318 L500 312" fill="none" stroke="#9c9c9c" stroke-width="0.55" stroke-dasharray="16 5"/><path d="M213 168 L217 206 L220 245 L221 288 L222 330 L226 354" fill="none" stroke="#9c9c9c" stroke-width="0.55" stroke-dasharray="16 5"/><path d="M270 112 L273 150 L276 204 L280 262 L284 300 L287 354" fill="none" stroke="#9c9c9c" stroke-width="0.55" stroke-dasharray="16 5"/><path d="M315 176 L318 225 L322 262 L325 320 L327 354" fill="none" stroke="#9c9c9c" stroke-width="0.55" stroke-dasharray="16 5"/><path d="M345 103 L348 140 L352 172 L355 202 L358 246 L360 258" fill="none" stroke="#9c9c9c" stroke-width="0.55" stroke-dasharray="16 5"/><path d="M410 250 L413 300 L417 354" fill="none" stroke="#9c9c9c" stroke-width="0.55" stroke-dasharray="16 5"/><path d="M437 168 L442 200 L453 228 L467 257 L483 285 L498 313 L510 340" fill="none" stroke="#9c9c9c" stroke-width="0.55" stroke-dasharray="16 5"/><path d="M467 110 L500 124 L528 136" fill="none" stroke="#9c9c9c" stroke-width="0.55" stroke-dasharray="16 5"/><path d="M529.7 103 L536.7 146" fill="none" stroke="#9c9c9c" stroke-width="0.55" stroke-dasharray="16 5"/><path d="M491.5 175.6 L543.6 147.8 L587 127 L616.5 111.4" fill="none" stroke="#9c9c9c" stroke-width="0.55" stroke-dasharray="16 5"/><path d="M491.5 175.6 L502 181 L521 215.5 L535 233" fill="none" stroke="#9c9c9c" stroke-width="0.55" stroke-dasharray="16 5"/><path d="M584 138 L600 158 L617 176 L636 200 L655 227 L668 245 L690 268 L707 288 L720 302 L734 314" fill="none" stroke="#9c9c9c" stroke-width="0.55" stroke-dasharray="16 5"/><path d="M576 128 L590 150 L603 167 L618 181" fill="none" stroke="#9c9c9c" stroke-width="0.55" stroke-dasharray="16 5"/><path d="M577 215 L590 235 L600 255 L604 269 L584 283 L555 296 L520 312 L500 322 L470 332 L440 340" fill="none" stroke="#9c9c9c" stroke-width="0.55" stroke-dasharray="16 5"/><path d="M604 269 L623 263 L650 246 L668 245" fill="none" stroke="#9c9c9c" stroke-width="0.55" stroke-dasharray="16 5"/><path d="M707 288 L690 310 L678 324 L660 345 L640 368 L620 392 L604 409 L580 436 L560 455 L543 469 L520 476 L490 480 L440 484" fill="none" stroke="#9c9c9c" stroke-width="0.55" stroke-dasharray="16 5"/><path d="M89 340 L95 370 L102 386 L112 426 L87 429 L87 472 L132 472 L132 513 L176 498" fill="none" stroke="#9c9c9c" stroke-width="0.55" stroke-dasharray="16 5"/><path d="M104 386 L150 372 L198 362 L226 357 L290 354 L330 352 L372 350 L420 352 L440 352" fill="none" stroke="#9c9c9c" stroke-width="0.55" stroke-dasharray="16 5"/><path d="M112 426 L160 415 L200 408 L232 404 L295 400 L336 398 L375 396 L440 392" fill="none" stroke="#9c9c9c" stroke-width="0.55" stroke-dasharray="16 5"/><path d="M132 455 L170 447 L232 440 L296 436 L338 435 L378 434 L440 430" fill="none" stroke="#9c9c9c" stroke-width="0.55" stroke-dasharray="16 5"/><path d="M160 472 L232 472 L297 472 L340 470 L380 468 L440 470" fill="none" stroke="#9c9c9c" stroke-width="0.55" stroke-dasharray="16 5"/><path d="M235 503 L296 502 L340 497 L356 492 L400 488 L440 486" fill="none" stroke="#6c6c6c" stroke-width="2.5" stroke-linejoin="round"/><path d="M235 503 L296 502 L340 497 L356 492 L400 488 L440 486" fill="none" stroke="#d0d0d0" stroke-width="0.8" stroke-dasharray="3 3"/><path d="M135 512 L176 508 L215 505 L240 503" fill="none" stroke="#9c9c9c" stroke-width="0.55" stroke-dasharray="16 5"/><path d="M225 528 L300 527 L344 526 L384 524 L440 521" fill="none" stroke="#9c9c9c" stroke-width="0.55" stroke-dasharray="16 5"/><path d="M300 566 L344 563 L386 560 L440 560" fill="none" stroke="#9c9c9c" stroke-width="0.55" stroke-dasharray="16 5"/><path d="M226 357 L229 404 L233 440 L236 503 L239 545 L236 580" fill="none" stroke="#9c9c9c" stroke-width="0.55" stroke-dasharray="16 5"/><path d="M290 354 L294 400 L296 436 L298 472 L300 527 L302 566" fill="none" stroke="#9c9c9c" stroke-width="0.55" stroke-dasharray="16 5"/><path d="M330 352 L334 398 L338 435 L340 470 L343 526 L345 563 L346 585" fill="none" stroke="#9c9c9c" stroke-width="0.55" stroke-dasharray="16 5"/><path d="M372 350 L375 396 L378 434 L381 468 L384 524 L386 560" fill="none" stroke="#9c9c9c" stroke-width="0.55" stroke-dasharray="16 5"/><path d="M199 573 L234 579 L236 590" fill="none" stroke="#9c9c9c" stroke-width="0.55" stroke-dasharray="16 5"/><path d="M202 385.5 L290 380 L370 375 L440 371" fill="none" stroke="#9c9c9c" stroke-width="0.55" stroke-dasharray="16 5"/><path d="M191.5 330 L198.5 385.5 L202 434 L206 470" fill="none" stroke="#9c9c9c" stroke-width="0.55" stroke-dasharray="16 5"/><path d="M440 400 L470 410 L505 425 L530 447 L543 469" fill="none" stroke="#9c9c9c" stroke-width="0.55" stroke-dasharray="16 5"/><path d="M440 430 L480 440 L510 455 L543 469" fill="none" stroke="#9c9c9c" stroke-width="0.55" stroke-dasharray="16 5"/><path d="M543 469 L552 500 L560 530 L572 552 L590 575 L600 592" fill="none" stroke="#9c9c9c" stroke-width="0.55" stroke-dasharray="16 5"/><path d="M543 469 L535 500 L520 530 L505 555 L492 580" fill="none" stroke="#9c9c9c" stroke-width="0.55" stroke-dasharray="16 5"/><path d="M440 521 L470 518 L500 516 L520 530" fill="none" stroke="#9c9c9c" stroke-width="0.55" stroke-dasharray="16 5"/><path d="M440 560 L470 562 L492 580" fill="none" stroke="#9c9c9c" stroke-width="0.55" stroke-dasharray="16 5"/><path d="M560 530 L590 526 L624 524 L657 523 L680 505 L700 468 L720 455 L742 445" fill="none" stroke="#9c9c9c" stroke-width="0.55" stroke-dasharray="16 5"/><path d="M638 470 L668 470 L700 468" fill="none" stroke="#9c9c9c" stroke-width="0.55" stroke-dasharray="16 5"/><path d="M624 524 L640 545 L657 536 L690 560 L715 584" fill="none" stroke="#9c9c9c" stroke-width="0.55" stroke-dasharray="16 5"/><path d="M657 385 L679 402 L700 430 L720 455" fill="none" stroke="#9c9c9c" stroke-width="0.55" stroke-dasharray="16 5"/><path d="M650 375 L690 378 L725 385 L748 415 L742 460" fill="none" stroke="#9c9c9c" stroke-width="0.55" stroke-dasharray="16 5"/><path d="M600 592 L620 565 L646 541 L657 523" fill="none" stroke="#9c9c9c" stroke-width="0.55" stroke-dasharray="16 5"/><path d="M470 340 L468 361 L467 392 L466 416 L462 434" fill="none" stroke="#9c9c9c" stroke-width="0.55" stroke-dasharray="16 5"/><path d="M510 340 L517 386 L505 413" fill="none" stroke="#9c9c9c" stroke-width="0.55" stroke-dasharray="16 5"/><path d="M548 348 L546 370 L560 400 L580 432" fill="none" stroke="#9c9c9c" stroke-width="0.55" stroke-dasharray="16 5"/><path d="M724 250 L707 288 L678 324.5 L628.6 382 L590 437 L546 470" fill="none" stroke="#5e5e5e" stroke-width="6"/><path d="M724 250 L707 288 L678 324.5 L628.6 382 L590 437 L546 470" fill="none" stroke="#bcbcbc" stroke-width="4"/><path d="M724 250 L707 288 L678 324.5 L628.6 382 L590 437 L546 470" fill="none" stroke="#707070" stroke-width="2"/><polygon points="213,163 224,167 248,181 212,184" fill="#b4b4b4" stroke="#6a6a6a" stroke-width="0.8"/><polygon points="376,268 399,267 398,309 379,313" fill="#b0b0b0" stroke="#6a6a6a" stroke-width="0.8"/><polygon points="461.5,276.7 477.7,275.8 486.3,324.5 471,329.3" fill="#b0b0b0" stroke="#6a6a6a" stroke-width="0.8"/><polygon points="427.3,151.3 448,137.4 455,146 434.2,160" fill="#bdbdbd" stroke="#6a6a6a" stroke-width="0.8"/><polygon points="638.1,198.2 681.5,165.2 679.8,146.1 671.1,140.9 697.2,118.3 700.6,130.5 693.7,144.3 695.4,161.7 704.1,170.4 716.3,170.4 751,179.1 721.5,199.9 712.8,182.5 698.9,175.6 691.9,179.1 650.3,212.1" fill="#b8b8b8" stroke="#6a6a6a" stroke-width="0.8"/><polygon points="264,533 282,531 284,556 272,558" fill="#b4b4b4" stroke="#6a6a6a" stroke-width="0.8"/><polygon points="278,196 286,196 286,206 278,206" fill="#a0a0a0" stroke="#6a6a6a" stroke-width="0.8"/><circle cx="618" cy="226" r="15" fill="#777777" stroke="#606060" stroke-width="2.500"/><circle cx="618" cy="226" r="8" fill="#7a7a79" stroke="#666" stroke-width="1"/><g transform="translate(199 269)"><circle r="15.2" fill="url(#hg)" stroke="#b21826" stroke-width="1.5"/><path d="M-11.500 -1.200 L-4 -8.500 Q0 -11.500 4 -8.500 L11.500 -1.200 h-2 v8.200 h-19 v-8.200z" fill="#fff"/><rect x="-6.500" y="-1" width="5.200" height="2.800" fill="#c41626"/><rect x="1.400" y="-1" width="4.600" height="6.200" fill="#d01525"/></g><g transform="translate(582 182)"><circle r="15.2" fill="url(#hg)" stroke="#b21826" stroke-width="1.5"/><path d="M-11.500 -1.200 L-4 -8.500 Q0 -11.500 4 -8.500 L11.500 -1.200 h-2 v8.200 h-19 v-8.200z" fill="#fff"/><rect x="-6.500" y="-1" width="5.200" height="2.800" fill="#c41626"/><rect x="1.400" y="-1" width="4.600" height="6.200" fill="#d01525"/></g><g transform="translate(381 384)"><circle r="15.2" fill="url(#hg)" stroke="#b21826" stroke-width="1.5"/><path d="M-11.500 -1.200 L-4 -8.500 Q0 -11.500 4 -8.500 L11.500 -1.200 h-2 v8.200 h-19 v-8.200z" fill="#fff"/><rect x="-6.500" y="-1" width="5.200" height="2.800" fill="#c41626"/><rect x="1.400" y="-1" width="4.600" height="6.200" fill="#d01525"/></g><g transform="translate(209 497)"><circle r="15.2" fill="url(#hg)" stroke="#b21826" stroke-width="1.5"/><path d="M-11.500 -1.200 L-4 -8.500 Q0 -11.500 4 -8.500 L11.500 -1.200 h-2 v8.200 h-19 v-8.200z" fill="#fff"/><rect x="-6.500" y="-1" width="5.200" height="2.800" fill="#c41626"/><rect x="1.400" y="-1" width="4.600" height="6.200" fill="#d01525"/></g><g transform="translate(628 406)"><circle r="15.2" fill="url(#hg)" stroke="#b21826" stroke-width="1.5"/><path d="M-11.500 -1.200 L-4 -8.500 Q0 -11.500 4 -8.500 L11.500 -1.200 h-2 v8.200 h-19 v-8.200z" fill="#fff"/><rect x="-6.500" y="-1" width="5.200" height="2.800" fill="#c41626"/><rect x="1.400" y="-1" width="4.600" height="6.200" fill="#d01525"/></g><g transform="translate(580 560)"><circle r="15.2" fill="url(#hg)" stroke="#b21826" stroke-width="1.5"/><path d="M-11.500 -1.200 L-4 -8.500 Q0 -11.500 4 -8.500 L11.500 -1.200 h-2 v8.200 h-19 v-8.200z" fill="#fff"/><rect x="-6.500" y="-1" width="5.200" height="2.800" fill="#c41626"/><rect x="1.400" y="-1" width="4.600" height="6.200" fill="#d01525"/></g><circle cx="225" cy="104" r="5.600" fill="#00ff00"/><circle cx="203" cy="126.4" r="5.600" fill="#00ff00"/><circle cx="115" cy="143.5" r="5.600" fill="#00ff00"/><circle cx="156" cy="149" r="5.600" fill="#00ff00"/><circle cx="304.5" cy="117" r="5.600" fill="#00ff00"/><circle cx="290" cy="129.5" r="5.600" fill="#00ff00"/><circle cx="281" cy="136" r="5.600" fill="#00ff00"/><circle cx="260" cy="134" r="5.600" fill="#00ff00"/><circle cx="285" cy="157.5" r="5.600" fill="#00ff00"/><circle cx="305.5" cy="166" r="5.600" fill="#00ff00"/><circle cx="390" cy="169.5" r="5.600" fill="#00ff00"/><circle cx="291" cy="182.5" r="5.600" fill="#00ff00"/><circle cx="343" cy="190" r="5.600" fill="#00ff00"/><circle cx="365" cy="187" r="5.600" fill="#00ff00"/><circle cx="168" cy="198.5" r="5.600" fill="#00ff00"/><circle cx="160" cy="212" r="5.600" fill="#00ff00"/><circle cx="223" cy="209" r="5.600" fill="#00ff00"/><circle cx="343.5" cy="211" r="5.600" fill="#00ff00"/><circle cx="339" cy="223" r="5.600" fill="#00ff00"/><circle cx="414" cy="209" r="5.600" fill="#00ff00"/><circle cx="427" cy="225" r="5.600" fill="#00ff00"/><circle cx="135.5" cy="234.5" r="5.600" fill="#00ff00"/><circle cx="369" cy="238.5" r="5.600" fill="#00ff00"/><circle cx="377" cy="239.5" r="5.600" fill="#00ff00"/><circle cx="384.5" cy="239" r="5.600" fill="#00ff00"/><circle cx="422.7" cy="247" r="5.600" fill="#00ff00"/><circle cx="255" cy="258" r="5.600" fill="#00ff00"/><circle cx="146" cy="267" r="5.600" fill="#00ff00"/><circle cx="98" cy="279" r="5.600" fill="#00ff00"/><circle cx="331.5" cy="311" r="5.600" fill="#00ff00"/><circle cx="350" cy="321" r="5.600" fill="#00ff00"/><circle cx="114.6" cy="320.5" r="5.600" fill="#00ff00"/><circle cx="313" cy="326" r="5.600" fill="#00ff00"/><circle cx="392" cy="327" r="5.600" fill="#00ff00"/><circle cx="241" cy="334.5" r="5.600" fill="#00ff00"/><circle cx="103" cy="336" r="5.600" fill="#00ff00"/><circle cx="158" cy="338" r="5.600" fill="#00ff00"/><circle cx="552.4" cy="155.7" r="5.600" fill="#00ff00"/><circle cx="722" cy="142.7" r="5.600" fill="#00ff00"/><circle cx="474" cy="178.6" r="5.600" fill="#00ff00"/><circle cx="453" cy="209" r="5.600" fill="#00ff00"/><circle cx="670" cy="261" r="5.600" fill="#00ff00"/><circle cx="675" cy="271" r="5.600" fill="#00ff00"/><circle cx="683" cy="279" r="5.600" fill="#00ff00"/><circle cx="662" cy="279" r="5.600" fill="#00ff00"/><circle cx="668" cy="289" r="5.600" fill="#00ff00"/><circle cx="658" cy="302" r="5.600" fill="#00ff00"/><circle cx="595" cy="295.5" r="5.600" fill="#00ff00"/><circle cx="546" cy="311.5" r="5.600" fill="#00ff00"/><circle cx="526" cy="320.5" r="5.600" fill="#00ff00"/><circle cx="543.5" cy="327" r="5.600" fill="#00ff00"/><circle cx="262" cy="344" r="5.600" fill="#00ff00"/><circle cx="295" cy="342.5" r="5.600" fill="#00ff00"/><circle cx="315" cy="355" r="5.600" fill="#00ff00"/><circle cx="400.5" cy="352" r="5.600" fill="#00ff00"/><circle cx="418.4" cy="363.4" r="5.600" fill="#00ff00"/><circle cx="246" cy="369" r="5.600" fill="#00ff00"/><circle cx="283.4" cy="367" r="5.600" fill="#00ff00"/><circle cx="314.5" cy="370.5" r="5.600" fill="#00ff00"/><circle cx="324" cy="372" r="5.600" fill="#00ff00"/><circle cx="277.6" cy="388" r="5.600" fill="#00ff00"/><circle cx="350.4" cy="398.6" r="5.600" fill="#00ff00"/><circle cx="225" cy="401" r="5.600" fill="#00ff00"/><circle cx="221.5" cy="407.5" r="5.600" fill="#00ff00"/><circle cx="235.5" cy="404.4" r="5.600" fill="#00ff00"/><circle cx="421.4" cy="414.6" r="5.600" fill="#00ff00"/><circle cx="221" cy="422" r="5.600" fill="#00ff00"/><circle cx="197" cy="432.4" r="5.600" fill="#00ff00"/><circle cx="211" cy="435" r="5.600" fill="#00ff00"/><circle cx="206" cy="442" r="5.600" fill="#00ff00"/><circle cx="139" cy="448.7" r="5.600" fill="#00ff00"/><circle cx="244.5" cy="451" r="5.600" fill="#00ff00"/><circle cx="399" cy="446" r="5.600" fill="#00ff00"/><circle cx="350.4" cy="455" r="5.600" fill="#00ff00"/><circle cx="429" cy="457" r="5.600" fill="#00ff00"/><circle cx="318" cy="462" r="5.600" fill="#00ff00"/><circle cx="221" cy="467" r="5.600" fill="#00ff00"/><circle cx="213.4" cy="479.5" r="5.600" fill="#00ff00"/><circle cx="267" cy="485" r="5.600" fill="#00ff00"/><circle cx="323" cy="481" r="5.600" fill="#00ff00"/><circle cx="330" cy="489" r="5.600" fill="#00ff00"/><circle cx="182" cy="495" r="5.600" fill="#00ff00"/><circle cx="438.5" cy="499.5" r="5.600" fill="#00ff00"/><circle cx="243" cy="518" r="5.600" fill="#00ff00"/><circle cx="221" cy="527" r="5.600" fill="#00ff00"/><circle cx="268" cy="527" r="5.600" fill="#00ff00"/><circle cx="261.5" cy="541" r="5.600" fill="#00ff00"/><circle cx="266.6" cy="553" r="5.600" fill="#00ff00"/><circle cx="292" cy="547" r="5.600" fill="#00ff00"/><circle cx="309" cy="551" r="5.600" fill="#00ff00"/><circle cx="359" cy="542" r="5.600" fill="#00ff00"/><circle cx="370.5" cy="546" r="5.600" fill="#00ff00"/><circle cx="299" cy="569" r="5.600" fill="#00ff00"/><circle cx="334" cy="572" r="5.600" fill="#00ff00"/><circle cx="352.7" cy="564" r="5.600" fill="#00ff00"/><circle cx="360" cy="571" r="5.600" fill="#00ff00"/><circle cx="406" cy="560.5" r="5.600" fill="#00ff00"/><circle cx="422.7" cy="559" r="5.600" fill="#00ff00"/><circle cx="431" cy="559" r="5.600" fill="#00ff00"/><circle cx="429" cy="567" r="5.600" fill="#00ff00"/><circle cx="450.8" cy="352.7" r="5.600" fill="#00ff00"/><circle cx="503" cy="346" r="5.600" fill="#00ff00"/><circle cx="548" cy="348" r="5.600" fill="#00ff00"/><circle cx="544" cy="360" r="5.600" fill="#00ff00"/><circle cx="467" cy="392" r="5.600" fill="#00ff00"/><circle cx="517.5" cy="386.6" r="5.600" fill="#00ff00"/><circle cx="609" cy="394" r="5.600" fill="#00ff00"/><circle cx="657" cy="385" r="5.600" fill="#00ff00"/><circle cx="715.4" cy="387" r="5.600" fill="#00ff00"/><circle cx="723.5" cy="391" r="5.600" fill="#00ff00"/><circle cx="550" cy="422" r="5.600" fill="#00ff00"/><circle cx="571.5" cy="425" r="5.600" fill="#00ff00"/><circle cx="462" cy="434.5" r="5.600" fill="#00ff00"/><circle cx="721.7" cy="427" r="5.600" fill="#00ff00"/><circle cx="714" cy="431" r="5.600" fill="#00ff00"/><circle cx="710" cy="438" r="5.600" fill="#00ff00"/><circle cx="725.6" cy="447" r="5.600" fill="#00ff00"/><circle cx="451" cy="454" r="5.600" fill="#00ff00"/><circle cx="530" cy="450" r="5.600" fill="#00ff00"/><circle cx="546.5" cy="455" r="5.600" fill="#00ff00"/><circle cx="620" cy="455" r="5.600" fill="#00ff00"/><circle cx="647" cy="470" r="5.600" fill="#00ff00"/><circle cx="674.6" cy="492" r="5.600" fill="#00ff00"/><circle cx="545" cy="497" r="5.600" fill="#00ff00"/><circle cx="553" cy="504" r="5.600" fill="#00ff00"/><circle cx="463.5" cy="511" r="5.600" fill="#00ff00"/><circle cx="652" cy="510" r="5.600" fill="#00ff00"/><circle cx="659" cy="514.5" r="5.600" fill="#00ff00"/><circle cx="680" cy="509" r="5.600" fill="#00ff00"/><circle cx="477" cy="524" r="5.600" fill="#00ff00"/><circle cx="499" cy="522" r="5.600" fill="#00ff00"/><circle cx="497.6" cy="533" r="5.600" fill="#00ff00"/><circle cx="462" cy="534.5" r="5.600" fill="#00ff00"/><circle cx="472" cy="537.6" r="5.600" fill="#00ff00"/><circle cx="445" cy="541" r="5.600" fill="#00ff00"/><circle cx="646" cy="541" r="5.600" fill="#00ff00"/><circle cx="723" cy="543.7" r="5.600" fill="#00ff00"/><circle cx="732" cy="541" r="5.600" fill="#00ff00"/><circle cx="508" cy="554" r="5.600" fill="#00ff00"/><circle cx="507" cy="564" r="5.600" fill="#00ff00"/><circle cx="615.6" cy="565" r="5.600" fill="#00ff00"/><circle cx="602.6" cy="582" r="5.600" fill="#00ff00"/><circle cx="715" cy="583.7" r="5.600" fill="#00ff00"/><circle cx="708.5" cy="589.5" r="5.600" fill="#00ff00"/><circle cx="359" cy="557.7" r="5.600" fill="#ffffff"/><circle cx="144" cy="149" r="5.600" fill="#ee0000"/><circle cx="309" cy="162" r="5.600" fill="#ee0000"/><circle cx="273" cy="196" r="5.600" fill="#ee0000"/><circle cx="238" cy="243" r="5.600" fill="#ee0000"/><circle cx="99" cy="294" r="5.600" fill="#ee0000"/><circle cx="364" cy="315" r="5.600" fill="#ee0000"/><circle cx="401" cy="309" r="5.600" fill="#ee0000"/><circle cx="160" cy="330.6" r="5.600" fill="#ee0000"/><circle cx="624.5" cy="131" r="5.600" fill="#ee0000"/><circle cx="618" cy="181" r="5.600" fill="#ee0000"/><circle cx="446" cy="188" r="5.600" fill="#ee0000"/><circle cx="460.5" cy="208.4" r="5.600" fill="#ee0000"/><circle cx="517.5" cy="332" r="5.600" fill="#ee0000"/><circle cx="305" cy="347" r="5.600" fill="#ee0000"/><circle cx="213.4" cy="354" r="5.600" fill="#ee0000"/><circle cx="270" cy="352.7" r="5.600" fill="#ee0000"/><circle cx="205" cy="403" r="5.600" fill="#ee0000"/><circle cx="331" cy="408" r="5.600" fill="#ee0000"/><circle cx="305" cy="473" r="5.600" fill="#ee0000"/><circle cx="283" cy="558" r="5.600" fill="#ee0000"/><circle cx="366.7" cy="555.7" r="5.600" fill="#ee0000"/><circle cx="546.5" cy="370.5" r="5.600" fill="#ee0000"/><circle cx="543.5" cy="469" r="5.600" fill="#ee0000"/><circle cx="657" cy="523" r="5.600" fill="#ee0000"/><circle cx="298" cy="125" r="5.600" fill="#0000ee"/><circle cx="389" cy="125" r="5.600" fill="#0000ee"/><circle cx="195" cy="153" r="5.600" fill="#0000ee"/><circle cx="261" cy="215" r="5.600" fill="#0000ee"/><circle cx="269" cy="215" r="5.600" fill="#0000ee"/><circle cx="156" cy="227" r="5.600" fill="#0000ee"/><circle cx="193" cy="243" r="5.600" fill="#0000ee"/><circle cx="409" cy="245" r="5.600" fill="#0000ee"/><circle cx="186" cy="278.5" r="5.600" fill="#0000ee"/><circle cx="349" cy="277.5" r="5.600" fill="#0000ee"/><circle cx="275" cy="322" r="5.600" fill="#0000ee"/><circle cx="122" cy="337" r="5.600" fill="#0000ee"/><circle cx="155" cy="332" r="5.600" fill="#0000ee"/><circle cx="722" cy="119.5" r="5.600" fill="#0000ee"/><circle cx="603.6" cy="167" r="5.600" fill="#0000ee"/><circle cx="593" cy="216" r="5.600" fill="#0000ee"/><circle cx="495" cy="233" r="5.600" fill="#0000ee"/><circle cx="604" cy="269" r="5.600" fill="#0000ee"/><circle cx="622.7" cy="263.7" r="5.600" fill="#0000ee"/><circle cx="707" cy="288" r="5.600" fill="#0000ee"/><circle cx="663" cy="300.6" r="5.600" fill="#0000ee"/><circle cx="584" cy="323" r="5.600" fill="#0000ee"/><circle cx="138" cy="367" r="5.600" fill="#0000ee"/><circle cx="152" cy="371" r="5.600" fill="#0000ee"/><circle cx="326.7" cy="378.5" r="5.600" fill="#0000ee"/><circle cx="337.4" cy="407.5" r="5.600" fill="#0000ee"/><circle cx="209" cy="419" r="5.600" fill="#0000ee"/><circle cx="339" cy="437" r="5.600" fill="#0000ee"/><circle cx="223" cy="445" r="5.600" fill="#0000ee"/><circle cx="336" cy="453" r="5.600" fill="#0000ee"/><circle cx="282" cy="472" r="5.600" fill="#0000ee"/><circle cx="377.4" cy="466" r="5.600" fill="#0000ee"/><circle cx="422" cy="463.5" r="5.600" fill="#0000ee"/><circle cx="423" cy="488" r="5.600" fill="#0000ee"/><circle cx="295.4" cy="502" r="5.600" fill="#0000ee"/><circle cx="328.5" cy="529" r="5.600" fill="#0000ee"/><circle cx="381" cy="537" r="5.600" fill="#0000ee"/><circle cx="412.5" cy="553" r="5.600" fill="#0000ee"/><circle cx="336" cy="561" r="5.600" fill="#0000ee"/><circle cx="468" cy="361" r="5.600" fill="#0000ee"/><circle cx="659" cy="377" r="5.600" fill="#0000ee"/><circle cx="679" cy="402" r="5.600" fill="#0000ee"/><circle cx="604" cy="409" r="5.600" fill="#0000ee"/><circle cx="505.5" cy="413" r="5.600" fill="#0000ee"/><circle cx="700" cy="468" r="5.600" fill="#0000ee"/><circle cx="651.5" cy="484" r="5.600" fill="#0000ee"/><circle cx="624" cy="524" r="5.600" fill="#0000ee"/><circle cx="488" cy="578" r="5.600" fill="#0000ee"/><circle cx="587" cy="580" r="5.600" fill="#0000ee"/><circle cx="233" cy="146" r="5.600" fill="#ffffff"/><circle cx="134" cy="161" r="5.600" fill="#ffffff"/><circle cx="209" cy="169.5" r="5.600" fill="#ffffff"/><circle cx="350" cy="167" r="5.600" fill="#ffffff"/><circle cx="275.5" cy="209" r="5.600" fill="#ffffff"/><circle cx="318" cy="225" r="5.600" fill="#ffffff"/><circle cx="357" cy="238" r="5.600" fill="#ffffff"/><circle cx="255" cy="269.5" r="5.600" fill="#ffffff"/><circle cx="278" cy="270" r="5.600" fill="#ffffff"/><circle cx="357" cy="273" r="5.600" fill="#ffffff"/><circle cx="438.5" cy="280.3" r="5.600" fill="#ffffff"/><circle cx="237" cy="322" r="5.600" fill="#ffffff"/><circle cx="140" cy="330.6" r="5.600" fill="#ffffff"/><circle cx="145.6" cy="333.7" r="5.600" fill="#ffffff"/><circle cx="419" cy="329" r="5.600" fill="#ffffff"/><circle cx="580.4" cy="131" r="5.600" fill="#ffffff"/><circle cx="478.6" cy="187.5" r="5.600" fill="#ffffff"/><circle cx="507.6" cy="228.5" r="5.600" fill="#ffffff"/><circle cx="619.4" cy="225.7" r="5.600" fill="#ffffff"/><circle cx="629" cy="260" r="5.600" fill="#ffffff"/><circle cx="662.4" cy="271" r="5.600" fill="#ffffff"/><circle cx="663" cy="275" r="5.600" fill="#ffffff"/><circle cx="464.6" cy="314" r="5.600" fill="#ffffff"/><circle cx="445" cy="339" r="5.600" fill="#ffffff"/><circle cx="678" cy="324" r="5.600" fill="#ffffff"/><circle cx="360" cy="344" r="5.600" fill="#ffffff"/><circle cx="405" cy="343" r="5.600" fill="#ffffff"/><circle cx="117.4" cy="399" r="5.600" fill="#ffffff"/><circle cx="125" cy="416" r="5.600" fill="#ffffff"/><circle cx="210" cy="442" r="5.600" fill="#ffffff"/><circle cx="134" cy="474" r="5.600" fill="#ffffff"/><circle cx="149.5" cy="471" r="5.600" fill="#ffffff"/><circle cx="314.5" cy="472" r="5.600" fill="#ffffff"/><circle cx="337" cy="469" r="5.600" fill="#ffffff"/><circle cx="317" cy="530" r="5.600" fill="#ffffff"/><circle cx="322" cy="560" r="5.600" fill="#ffffff"/><circle cx="480" cy="366" r="5.600" fill="#ffffff"/><circle cx="466" cy="416" r="5.600" fill="#ffffff"/><circle cx="667.5" cy="470" r="5.600" fill="#ffffff"/><circle cx="630" cy="488" r="5.600" fill="#ffffff"/><circle cx="680.5" cy="490.5" r="5.600" fill="#ffffff"/><circle cx="650" cy="500" r="5.600" fill="#ffffff"/><circle cx="457" cy="521" r="5.600" fill="#ffffff"/><circle cx="657" cy="536" r="5.600" fill="#ffffff"/><circle cx="495" cy="544.5" r="5.600" fill="#ffffff"/><circle cx="496" cy="562.5" r="5.600" fill="#ffffff"/><circle cx="595" cy="588" r="5.600" fill="#ffffff"/><circle cx="460" cy="364" r="5.600" fill="#ee0000"/></svg></div></div><div class="abs" style="left:925px;top:46px;width:736px;height:675px;border-radius:13px 13px 0 0;box-shadow:0 0 0 1px rgba(0,0,0,.25),0 4px 18px rgba(0,0,0,.35);background:#300a24;overflow:hidden"><div class="abs" style="left:0px;top:0px;width:736px;height:48px;background:#2b2b2b"></div><div class="abs" style="left:8px;top:8px;width:33px;height:32px;background:#373737;border-radius:6px"></div><svg class="abs" style="left:16.5px;top:17.5px" width="17" height="14" fill="none" stroke="#cfcfcf" stroke-width="1.1">
<path d="M1 12.500h2.300v-9.200q0-1.800 1.800-1.800h6.800q1.800 0 1.800 1.800v9.200h2.300"/><path d="M8.500 4.800v5.400M5.800 7.500h5.400"/></svg><div class="t" style="left:60.5px;top:16.5px;font-size:15px;font-weight:700;color:#c9c9c9;letter-spacing:0.1px;">./start-comprun.sh -m ../School/berlin2/map -c ../School/berl...</div><div class="abs" style="left:524px;top:8px;width:34px;height:32px;background:#373737;border-radius:6px"></div><svg class="abs" style="left:532px;top:15px" width="18" height="18" fill="none" stroke="#d0d0d0" stroke-width="1.4">
<circle cx="8" cy="8" r="5.6"/><path d="M12 12.2l4 4.3"/></svg><div class="abs" style="left:566px;top:8px;width:34px;height:32px;background:#373737;border-radius:6px"></div><svg class="abs" style="left:576px;top:17px" width="14" height="14" fill="none" stroke="#d0d0d0" stroke-width="1.4">
<path d="M1 2.5h12M1 7h12M1 11.5h12"/></svg><svg class="abs" style="left:610px;top:0" width="125" height="48" fill="none" stroke="#d4d4d4" stroke-width="1.2">
<path d="M17 29.5h8"/><rect x="57.500" y="20.500" width="7" height="7"/><path d="M97 20l8 8M105 20l-8 8"/></svg><div class="mono" style="left:3px;top:52.900000000000006px">INFO launcher : Launching instance 141...</div><div class="mono" style="left:3px;top:78.9px">INFO launcher : success</div><div class="mono" style="left:3px;top:104.9px">INFO launcher : Launching instance 142...</div><div class="mono" style="left:3px;top:130.9px">INFO launcher : success</div><div class="mono" style="left:3px;top:156.9px">INFO launcher : Launching instance 143...</div><div class="mono" style="left:3px;top:182.9px">INFO launcher : success</div><div class="mono" style="left:3px;top:208.89999999999998px">INFO launcher : Launching instance 144...</div></div><div class="abs" style="left:922px;top:262px;width:736px;height:673px;border-radius:13px 13px 0 0;box-shadow:0 0 0 1px rgba(0,0,0,.3),0 6px 24px rgba(0,0,0,.45);background:#300a24;overflow:hidden"><div class="abs" style="left:0px;top:0px;width:736px;height:46px;background:#1f1f1f"></div><div class="abs" style="left:8px;top:7px;width:34px;height:32px;background:#343434;border-radius:6px"></div><svg class="abs" style="left:17px;top:16.5px" width="17" height="14" fill="none" stroke="#ffffff" stroke-width="1.1">
<path d="M1 12.500h2.300v-9.200q0-1.800 1.800-1.800h6.800q1.800 0 1.800 1.800v9.200h2.300"/><path d="M8.500 4.800v5.400M5.800 7.500h5.400"/></svg><div class="t" style="left:302px;top:15.6px;font-size:14.5px;font-weight:700;color:#ffffff;letter-spacing:0.0px;">bash launch.sh -all</div><div class="abs" style="left:525px;top:7px;width:34px;height:32px;background:#343434;border-radius:6px"></div><svg class="abs" style="left:533px;top:14px" width="18" height="18" fill="none" stroke="#ffffff" stroke-width="1.4">
<circle cx="8" cy="8" r="5.6"/><path d="M12 12.2l4 4.3"/></svg><div class="abs" style="left:567px;top:7px;width:34px;height:32px;background:#343434;border-radius:6px"></div><svg class="abs" style="left:577px;top:16px" width="14" height="14" fill="none" stroke="#ffffff" stroke-width="1.4">
<path d="M1 2.5h12M1 7h12M1 11.5h12"/></svg><div class="abs" style="left:621px;top:12px;width:22px;height:22px;background:#333333;border-radius:50%"></div><div class="abs" style="left:661px;top:12px;width:22px;height:22px;background:#333333;border-radius:50%"></div><div class="abs" style="left:701px;top:12px;width:22px;height:22px;background:#333333;border-radius:50%"></div><svg class="abs" style="left:610px;top:0" width="125" height="46" fill="none" stroke="#ffffff" stroke-width="1.3">
<path d="M18 27.5h8"/><rect x="58.500" y="19.500" width="7" height="7"/><path d="M98 19l8 8M106 19l-8 8"/></svg><div class="mono" style="left:2px;top:51.60000000000002px">[INFO  ] Connected - adf.core.agent.platoon.PlatoonAmbulance@7142cee8 (PRECOMPUT</div><div class="mono" style="left:2px;top:77.60000000000002px">ED)</div><div class="mono" style="left:2px;top:103.60000000000002px">[INFO  ] Connected - adf.core.agent.platoon.PlatoonPolice@70c9f36e (PRECOMPUTED)</div><div class="mono" style="left:2px;top:129.60000000000002px">[INFO  ] Connected - adf.core.agent.platoon.PlatoonAmbulance@3f9b486a (PRECOMPUT</div><div class="mono" style="left:2px;top:155.60000000000002px">ED)</div><div class="mono" style="left:2px;top:181.60000000000002px">[INFO  ] Connected - adf.core.agent.platoon.PlatoonAmbulance@522754b9 (PRECOMPUT</div><div class="mono" style="left:2px;top:207.60000000000002px">ED)</div><div class="mono" style="left:2px;top:233.60000000000002px">[INFO  ] Connected - adf.core.agent.platoon.PlatoonPolice@79e73cc1 (PRECOMPUTED)</div><div class="mono" style="left:2px;top:259.6px">[INFO  ] Connected - adf.core.agent.platoon.PlatoonAmbulance@2616a2f (PRECOMPUTE</div><div class="mono" style="left:2px;top:285.6px">D)</div><div class="mono" style="left:2px;top:311.6px">[INFO  ] Connected - adf.core.agent.platoon.PlatoonAmbulance@6f05a67e (PRECOMPUT</div><div class="mono" style="left:2px;top:337.6px">ED)</div><div class="mono" style="left:2px;top:363.6px">[INFO  ] Connected - adf.core.agent.platoon.PlatoonPolice@3ac4bd2d (PRECOMPUTED)</div><div class="mono" style="left:2px;top:389.6px">[INFO  ] Connected - adf.core.agent.platoon.PlatoonAmbulance@654d1cc8 (PRECOMPUT</div><div class="mono" style="left:2px;top:415.6px">ED)</div><div class="mono" style="left:2px;top:441.6px">[INFO  ] Connected - adf.core.agent.platoon.PlatoonPolice@4a64f7db (PRECOMPUTED)</div><div class="mono" style="left:2px;top:467.6px">[INFO  ] Connected - adf.core.agent.platoon.PlatoonAmbulance@f8235ba (PRECOMPUTE</div><div class="mono" style="left:2px;top:493.6px">D)</div><div class="mono" style="left:2px;top:519.6px">[FINISH] Connect AmbulanceTeam (success:50)</div><div class="mono" style="left:2px;top:545.6px">[INFO  ] Connected - adf.core.agent.platoon.PlatoonPolice@47e31fa7 (PRECOMPUTED)</div><div class="mono" style="left:2px;top:571.6px">[INFO  ] Connected - adf.core.agent.platoon.PlatoonPolice@aa47cbb (PRECOMPUTED)</div><div class="mono" style="left:2px;top:597.6px"><b>&lt;<span style="color:#26a269">=========</span>----&gt; 75% EXECUTING [17s]</b></div><div class="mono" style="left:2px;top:623.6px"><b>&gt; :launch</b></div><div class="abs" style="left:2px;top:646px;width:9px;height:26px;background:#f6f6f6"></div><div class="abs" style="left:726px;top:618px;width:5px;height:51px;background:#a9a0a6;border-radius:3px"></div></div><div class="abs" style="left:1583px;top:836px;width:105px;height:23px;background:#fff;border:1px solid #c9d3de"></div><svg class="abs" style="left:1563px;top:830px" width="30" height="30" viewBox="0 0 32 32">
<rect x="3" y="4" width="26" height="24" rx="4" transform="rotate(-12 16 16)" fill="#e2552c"/>
<path d="M23 10c-3.500-2.400-11.500-2-11.500 1.800c0 3.600 12 2 12 6.400c0 4-9 4.200-13.500 1.600" fill="none" stroke="#fff" stroke-width="3.800" stroke-linecap="round"/></svg><svg class="abs" style="left:1596px;top:840px" width="15" height="15" viewBox="0 0 16 16" fill="none" stroke="#2d6da6" stroke-width="1.9" stroke-linecap="square"><path d="M1.500 3.500h13M5 1.500v4M11 1.500v4M4 7h8v3.500M4 7v3.500M1 10.500h14M8 5.500v5M8 10.500q-1.500 3.500-6.500 4.500M8 10.500q1.500 3.500 6.500 4.500"/></svg><svg class="abs" style="left:1622px;top:840px" width="14" height="14"><circle cx="4" cy="4.500" r="1.700" fill="#2d6da6"/><path d="M8.500 6.200q3 .3 1 4.300" stroke="#2d6da6" stroke-width="1.900" fill="none"/></svg><svg class="abs" style="left:1644px;top:840px" width="15" height="15" viewBox="0 0 16 16" fill="none" stroke="#2d6da6" stroke-width="1.9" stroke-linecap="square"><path d="M1 5h5M3.500 1.500v12q0 1.200-2 .8M1 10.500l5-2M8.500 1.500l1.500 2.500M14 1.500l-1.500 2.500M7.500 5.500h7.500M7 10h8.500M9.800 5.500v5q0 3-2.800 4.500M13 5.500v9.500"/></svg><svg class="abs" style="left:1667px;top:839px" width="16" height="16" viewBox="0 0 20 20"><path d="M17.94 9.04L17.94 10.96L15.78 11.62L15.23 12.94L16.29 14.94L14.94 16.29L12.94 15.23L11.62 15.78L10.96 17.94L9.04 17.94L8.38 15.78L7.06 15.23L5.06 16.29L3.71 14.94L4.77 12.94L4.22 11.62L2.06 10.96L2.06 9.04L4.22 8.38L4.77 7.06L3.71 5.06L5.06 3.71L7.06 4.77L8.38 4.22L9.04 2.06L10.96 2.06L11.62 4.22L12.94 4.77L14.94 3.71L16.29 5.06L15.23 7.06L15.78 8.38Z" fill="#2d6da6"/><circle cx="10" cy="10" r="2.800" fill="#fff"/></svg><div id="topbar" class="abs"><svg class="abs" style="left:0;top:6px" width="6" height="16" fill="none" stroke="#f2f2f2" stroke-width="1.500"><path d="M0 1.500h2q1.500 0 1.500 1.500v9.500q0 1.500-1.500 1.500h-2"/></svg><svg class="abs" style="left:9.5px;top:7px" width="15" height="15" viewBox="0 0 16 16" fill="none" stroke="#f2f2f2" stroke-width="1.25" stroke-linecap="square"><path d="M4.500 1l-3 4h3.500l-3.500 4.500h4.500M1 14l5-1.500M10.500 1q-1.500 3.500-4 5.500M9 3.500h5q-2.500 5.500-8 8M9.500 5q2 3 6 5M10 10.500l2 1.200M9 13l3 1.800"/></svg><svg class="abs" style="left:25.2px;top:7px" width="15" height="15" viewBox="0 0 16 16" fill="none" stroke="#f2f2f2" stroke-width="1.15" stroke-linecap="square"><path d="M3 1v2M1 4h5M2 6l.8 5M5 6l-.8 5M.800 12.500l5.500-1M11 1v3.500M8 2.500v2h6.500v-2M7 7h8.500M11 7l-1 2M8 9.500h7v5.500M8 9.500v6M10.300 9.500v5M12.600 9.500v5"/></svg><div class="t" style="left:839.5px;top:9.1px;font-size:13.5px;font-weight:400;color:#f2f2f2;letter-spacing:0px;">4</div><svg class="abs" style="left:846.5px;top:9px" width="14" height="14" viewBox="0 0 16 16" fill="none" stroke="#f2f2f2" stroke-width="1.15" stroke-linecap="square"><path d="M4 1.500h8.500v12.500q0 1.200-2 .9M4 1.500v8q0 4-2.500 5.500M4 5.500h8.500M4 9.500h8.500"/></svg><div class="t" style="left:862.3px;top:9.1px;font-size:13.5px;font-weight:400;color:#f2f2f2;letter-spacing:0.9px;">21</div><svg class="abs" style="left:878.8px;top:9px" width="14" height="14" viewBox="0 0 16 16" fill="none" stroke="#f2f2f2" stroke-width="1.15" stroke-linecap="square"><path d="M3.500 1.500h9v13h-9zM3.500 8h9"/></svg><div class="t" style="left:898.8px;top:9.1px;font-size:13.5px;font-weight:400;color:#f2f2f2;letter-spacing:1.7px;">11</div><svg class="abs" style="left:919px;top:8px" width="8" height="14"><rect x="3" y="4.200" width="2.200" height="2.200" fill="#f2f2f2"/><rect x="3" y="10" width="2.200" height="2.200" fill="#f2f2f2"/></svg><div class="t" style="left:931.5px;top:9.1px;font-size:13.5px;font-weight:400;color:#f2f2f2;letter-spacing:0.6px;">28</div><svg class="abs" style="left:964px;top:5.500px" width="16" height="18" fill="none" stroke="#f2f2f2" stroke-width="1.200">
<path d="M3 12.500h10l-1.500-2v-3.500q0-3.500-3.500-3.500t-3.500 3.500v3.500zM6.500 14.500q1.500 1.500 3 0"/><circle cx="11.300" cy="2.200" r="1.300" fill="#f2f2f2" stroke="none"/></svg><svg class="abs" style="left:1572px;top:8px" width="18" height="11"><rect x="0.500" y="0.300" width="10.500" height="9.700" rx="1.800" fill="#cfcfcf"/><path d="M11 4.500l4.700-3.300v7.800l-4.700-3.300z" fill="#cfcfcf"/><circle cx="5.600" cy="5.100" r="2.500" fill="#e6333c"/></svg><svg class="abs" style="left:1612px;top:5.500px" width="17" height="15" viewBox="0 0 32 28">
<rect x="3" y="2" width="26" height="24" rx="4" transform="rotate(-10 16 14)" fill="#e2452f"/>
<path d="M22 8.500c-3-2.200-10-1.800-10 1.800c0 3.400 10.300 2 10.300 6.300c0 3.800-8 4-11.800 1.600" fill="none" stroke="#fff" stroke-width="3.600" stroke-linecap="round"/></svg><svg class="abs" style="left:1657px;top:7.5px" width="14.5" height="14.5" viewBox="0 0 16 16" fill="none" stroke="#f2f2f2" stroke-width="1.2" stroke-linecap="square"><path d="M1 5h5M3.500 1.500v12q0 1.200-2 .8M1 10.500l5-2M8.500 1.500l1.500 2.500M14 1.500l-1.500 2.500M7.500 5.500h7.500M7 10h8.500M9.800 5.500v5q0 3-2.800 4.500M13 5.500v9.500"/></svg><svg class="abs" style="left:1707px;top:7px" width="16" height="13"><path d="M0.500 3.800q7.500-6.200 15 0l-1.300 1.500q-6.200-5-12.400 0z" fill="#f2f2f2"/><path d="M2.700 6.300q5.300-4.300 10.600 0l-5.300 6.200z" fill="#f2f2f2"/></svg></div><svg class="abs" style="left:790.500px;top:253px" width="14" height="20"><path d="M1 1v14.500l3.500-3.200l2.300 5.200l2-.9l-2.300-5h4.500z" fill="#1a1a1a" stroke="#fff" stroke-width="1"/></svg>
</body></html>
